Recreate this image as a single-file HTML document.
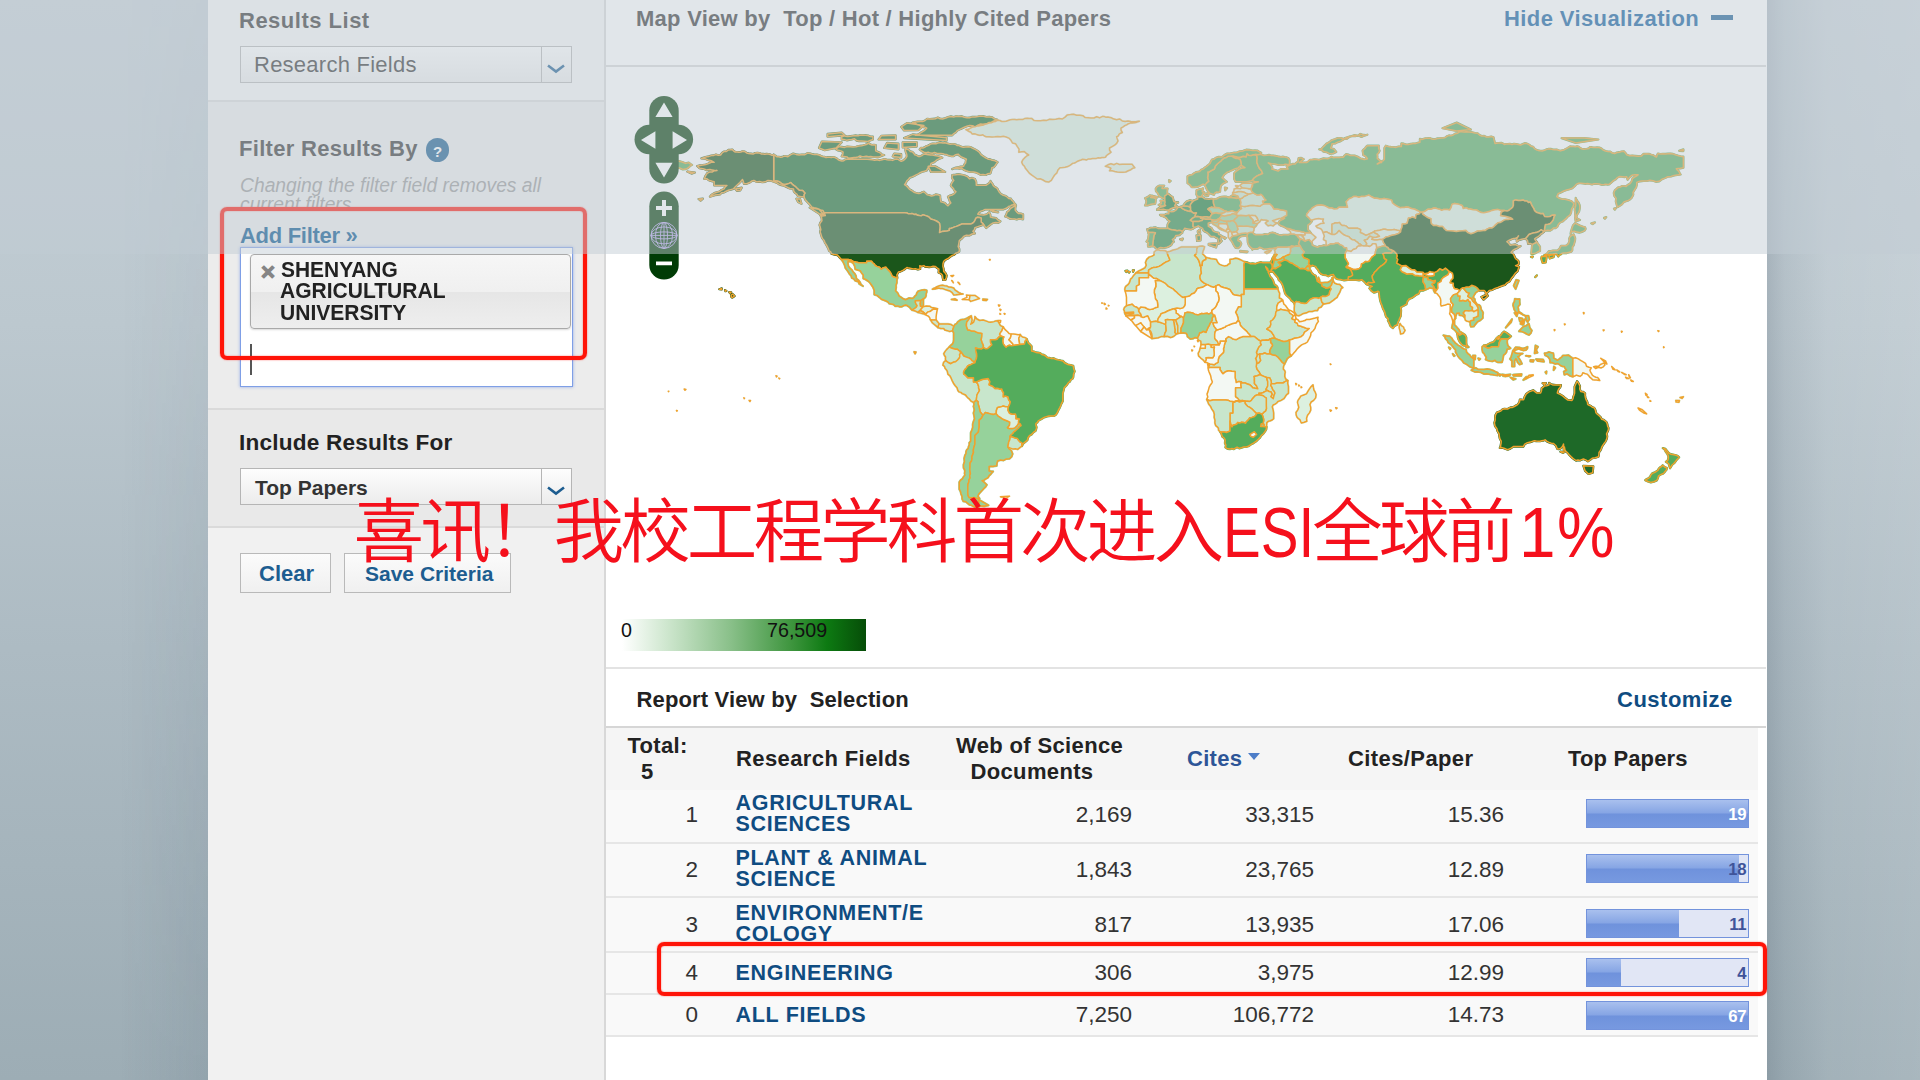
<!DOCTYPE html>
<html lang="zh">
<head>
<meta charset="utf-8">
<title>ESI</title>
<style>
*{box-sizing:border-box;margin:0;padding:0}
html,body{width:1920px;height:1080px;overflow:hidden}
body{position:relative;font-family:"Liberation Sans","Noto Sans CJK SC",sans-serif;color:#222;
 background:linear-gradient(180deg,#c6d0d7 0%,#bcc8cf 30%,#adbbc3 60%,#9dadb5 100%);}
.abs{position:absolute}
.t{position:absolute;white-space:nowrap;line-height:1}
.b{font-weight:bold}
/* side shading */
#sideL{left:120px;top:0;width:88px;height:1080px;background:linear-gradient(90deg,rgba(60,80,100,0) 0%,rgba(60,80,100,.10) 100%);-webkit-mask-image:linear-gradient(180deg,rgba(0,0,0,.15) 0%,rgba(0,0,0,.4) 35%,#000 100%);mask-image:linear-gradient(180deg,rgba(0,0,0,.15) 0%,rgba(0,0,0,.4) 35%,#000 100%)}
#sideR{left:1766px;top:0;width:154px;height:1080px;background:linear-gradient(90deg,rgba(70,85,100,.20) 0%,rgba(70,85,100,.08) 12%,rgba(255,255,255,.06) 40%,rgba(255,255,255,.12) 100%)}
/* panels */
#left{left:208px;top:0;width:398px;height:1080px;background:#f1f1f1;border-right:2px solid #d8d8d8}
#leftTop{left:208px;top:0;width:396px;height:527px;background:#ececec}
.hr{position:absolute;height:2px;background:#dadada}
#main{left:606px;top:0;width:1160.5px;height:1080px;background:#fff}
/* selects */
.sel{position:absolute;height:37px;border:1px solid #b5b5b5;background:linear-gradient(180deg,#fdfdfd,#ececec)}
.sel i{position:absolute;right:29px;top:0;width:1px;height:35px;background:#b5b5b5}
.sel svg{position:absolute;right:5px;top:17px}
.btn{position:absolute;height:40px;border:1px solid #b9b9b9;background:linear-gradient(180deg,#fbfbfb,#f0f0f0)}
/* table */
.row{position:absolute;left:606px;width:1152px;background:#f9f9f9;border-bottom:2px solid #e6e6e6}
.bar{position:absolute;left:1586px;width:163px;height:29px;border:1.5px solid #7393dc;background:#e1e6f5;overflow:hidden}
.bar b{position:absolute;left:0;top:0;height:100%;background:linear-gradient(180deg,#a9c0ee 0%,#86a5e4 48%,#6f92dc 52%,#7799e0 100%)}
.bar span{position:absolute;right:2px;top:6.5px;font-size:16.8px;line-height:1;color:#3f549a;letter-spacing:-.5px;font-weight:bold}
.bar span.w{color:#fff;font-weight:bold}
.num{position:absolute;font-size:22.5px;line-height:1;color:#333;text-align:right;white-space:nowrap}
.fld{position:absolute;font-size:21.5px;line-height:21px;font-weight:bold;color:#0f4c81;left:735.5px;white-space:nowrap;letter-spacing:.7px}
.th{position:absolute;font-size:22px;line-height:26px;font-weight:bold;color:#222;white-space:nowrap}
#veil{left:0;top:0;width:1920px;height:254px;background:rgba(194,203,212,.485)}
.red{position:absolute;border:4.2px solid #ff1408;border-radius:7px;box-shadow:0 0 1.5px rgba(255,30,20,.8),inset 0 0 1.5px rgba(255,30,20,.8)}
.hl{position:absolute;white-space:nowrap;line-height:80px;top:493px;font-size:70.7px;color:#f5101c;font-weight:350;letter-spacing:-4.03px}
.hl.lat{letter-spacing:0;font-weight:400;transform-origin:0 50%}
</style>
</head>
<body>
<div id="sideL" class="abs"></div>
<div id="sideR" class="abs"></div>

<!-- LEFT PANEL -->
<div id="left" class="abs"></div>
<div id="leftTop" class="abs"></div>
<div class="abs" style="left:208px;top:0;width:396px;height:100px;background:#f6f6f6"></div>
<div class="abs" style="left:208px;top:410px;width:396px;height:116px;background:#e9e9e9"></div>
<div class="hr" style="left:208px;width:396px;top:100px"></div>
<div class="hr" style="left:208px;width:396px;top:408px"></div>
<div class="hr" style="left:208px;width:396px;top:526px"></div>

<div class="t b" style="left:239px;top:9.5px;font-size:22px;letter-spacing:.5px;color:#333">Results List</div>
<div class="sel" style="left:240px;top:46px;width:332px"><i></i>
 <svg width="20" height="10" viewBox="0 0 20 10"><path d="M2 1.5 L10 7.5 L18 1.5" fill="none" stroke="#1d5d90" stroke-width="2.6"/></svg></div>
<div class="t" style="left:254px;top:54px;font-size:22px;letter-spacing:.25px;color:#333">Research Fields</div>

<div class="t b" style="left:239px;top:138px;font-size:22px;letter-spacing:.3px;color:#333">Filter Results By</div>
<div class="abs" style="left:425.6px;top:138.4px;width:23.6px;height:23.6px;border-radius:50%;background:#195c8e"></div>
<div class="t b" style="left:433px;top:143.5px;font-size:15px;color:#fff">?</div>
<div class="t" style="left:240px;top:176px;font-size:19.3px;font-style:italic;color:#999">Changing the filter field removes all</div>
<div class="t" style="left:240px;top:194.5px;font-size:19.3px;font-style:italic;color:#999">current filters.</div>
<div class="t b" style="left:240px;top:225px;font-size:22px;letter-spacing:-.3px;color:#00528c">Add Filter »</div>

<div class="abs" id="fbox" style="left:240px;top:247px;width:333px;height:140px;background:#fff;border:1px solid #7f9fe6;box-shadow:0 0 3px rgba(90,130,230,.6)"></div>
<div class="abs" id="tag" style="left:250px;top:254px;width:321px;height:75px;border:1px solid #a9a9a9;border-radius:4px;background:linear-gradient(180deg,#f6f6f6 0%,#f0f0f0 50%,#e6e6e6 51%,#eeeeee 100%);box-shadow:0 1px 2px rgba(0,0,0,.15)"></div>
<div class="t b" style="left:261px;top:260px;font-size:24px;color:#858585;-webkit-text-stroke:1.1px #858585">×</div>
<div class="t b" style="left:281px;top:258.8px;font-size:22.5px;line-height:21px;color:#222;transform:scaleX(.93);transform-origin:0 50%">SHENYANG</div>
<div class="t b" style="left:280px;top:280.2px;font-size:22.5px;line-height:21px;color:#222;transform:scaleX(.935);transform-origin:0 50%">AGRICULTURAL</div>
<div class="t b" style="left:280px;top:301.8px;font-size:22.5px;line-height:21px;color:#222;transform:scaleX(.935);transform-origin:0 50%">UNIVERSITY</div>
<div class="abs" style="left:250px;top:344px;width:2px;height:31px;background:#555"></div>

<div class="t b" style="left:239px;top:431.5px;font-size:22.6px;letter-spacing:.2px;color:#222">Include Results For</div>
<div class="sel" style="left:240px;top:468px;width:332px"><i></i>
 <svg width="20" height="10" viewBox="0 0 20 10"><path d="M2 1.5 L10 7.5 L18 1.5" fill="none" stroke="#1d5d90" stroke-width="2.6"/></svg></div>
<div class="t b" style="left:255px;top:477px;font-size:21px;color:#333">Top Papers</div>

<div class="btn" style="left:240px;top:553px;width:91px"></div>
<div class="btn" style="left:344px;top:553px;width:167px"></div>
<div class="t b" style="left:259px;top:563px;font-size:22px;color:#1d5d90">Clear</div>
<div class="t b" style="left:365px;top:563px;font-size:21px;color:#1d5d90">Save Criteria</div>

<!-- MAIN -->
<div id="main" class="abs"></div>
<div class="t b" style="left:636px;top:8px;font-size:22px;letter-spacing:.26px;color:#333;white-space:pre">Map View by  Top / Hot / Highly Cited Papers</div>
<div class="t b" style="left:1504px;top:8px;font-size:22px;letter-spacing:.4px;color:#0a5a9c">Hide Visualization</div>
<div class="abs" style="left:1711px;top:15px;width:21.5px;height:5px;background:#1a5f94"></div>
<div class="hr" style="left:606px;width:1160px;top:65px;background:#d9d9d9"></div>

<!--MAP-->
<svg id="map" class="abs" style="left:605px;top:67px" width="1161" height="540" viewBox="605 67 1161 540">
<g stroke-linejoin="round">
<path d="M773.7,154.7l1.7,0.9 1.4,1.2 1.9,0 1.9,0.4 1.9,-0.3 1.7,-0.8 1.8,0.2 1.9,0.4 2.5,-1.8 2.8,-1.3 2.9,0.8 3.1,0.5 2.8,-0.3 2.9,0.1 2.6,-1.6 3,0.5 2.1,0.6 2.1,0.4 2.2,-0.1 2.1,0.5 1.7,0.8 1.7,0.7 1.8,0.3 1.7,0.7 1.8,-0.3 1.9,0 1.8,0.2 1.8,-0.3 1.9,0.5 1.7,0.9 1.4,1.3 1.8,0.8 1.9,0.3 1.9,-0.2 1.6,-1.2 2,-0.3 19.8,0 2.5,0.2 2.5,0.4 2.5,0.4 2.4,-0.4 2.5,0.6 2.5,-0.7 2.5,-0.7 2.5,0.8 1.8,0.1 1.8,0 1.8,0.5 1.7,-0.8 1.9,-0.6 1.9,0.2 1.5,1.2 1.7,0.8 1.9,-0.6 1.5,-1.2 1.3,-1.4 1,-1.6 -0.2,-2.1 -0.8,-1.9 -0.5,-2.1 0.1,-2.1 1.6,1.2 1.8,0.5 1.4,1.5 1.9,0.4 1.4,1.3 1.2,1.6 1.8,0.7 1.6,1 1.9,0 1.7,-0.8 1.5,-1.1 1.9,-0.4 1.8,0.4 1.8,0.3 1.8,0.3 1.8,-0.1 2.5,0.6 2.6,0.5 2.5,0.6 2.3,1.1 -3,0.9 -2.9,1.5 -2.4,2.1 -3,1.2 -0.6,2.1 -1.8,1.2 -1.1,1.8 -0.8,1.9 -2.2,0.7 -2.2,0.6 -2.2,0.8 -1.9,1.2 -2.1,1.1 -2,1.1 -2.2,0.9 -2.2,0.7 -1.2,1.8 -1.7,1.4 -0.9,2 -1.3,1.8 1.8,1.3 1.5,1.5 1.4,1.7 1.9,1.2 1.4,0.9 1.3,1.1 1.7,0.5 1.7,0.4 1.7,0.4 1.7,-0.5 1.5,-0.9 1.7,-0.5 1.6,1.5 1.6,1.6 2.2,0.4 2.1,0.8 2.3,-0.5 2,-1.1 2.2,0.4 2.2,0.8 0.2,3.1 0.6,3.1 2,0.6 2,0.6 1.4,1.5 1.7,1.3 1.4,-1.5 1.4,-1.3 -0.9,-1.5 -0.6,-1.6 -0.6,-1.6 -0.7,-1.6 2.1,-1.2 2.3,-0.6 2,-1.3 1.5,-1.9 -1.7,-1.3 -0.7,-1.9 -1.6,-1.3 -1.1,-1.7 1.2,-2.7 1.7,-2.4 -1.7,-2.4 0.2,-3 3.3,-0.3 3.2,-0.5 3.1,0.6 3.2,0.8 2.6,1.1 1.8,2.2 2.8,-1 2.7,1.1 1.3,2.9 0.1,3.3 10,0 2.5,-1.7 1.7,-2.5 0.8,1.5 1.1,1.3 0.7,1.6 1.3,1.2 1.5,0.9 1.4,1.1 0.8,1.6 0.9,1.5 1.8,2.2 2.5,1.4 2,0.5 1.8,1.2 1.6,1.4 2.2,0.3 0.9,1.6 1.4,1.2 0.9,1.6 1.3,1.3 -1.6,0.3 -1.7,0.3 -1.5,0.9 -1.7,0.4 -2.6,2 -3,1.1 -18.2,0 -2,1 -2.2,0.7 -1.9,1.2 -1.2,1.9 2.9,0.5 3,0.3 3.1,-0.7 2.3,-2 1.2,2.2 0.2,2.6 2.7,0.6 2.8,0.3 1.9,2.1 2.5,1.2 -2.1,1.5 -2.6,-0.3 -2.5,0.4 -2.1,1.2 -2.5,1.9 -2.3,2 -1.4,-1.6 -1.2,-1.7 -1.1,-1.4 -1.4,-1.2 0,-3.9 -2,-0.8 -2,-0.1 -1.5,1.1 -0.6,1.7 -0.9,1.6 -1.3,1.3 -2.2,1.1 -9.1,0 -2.5,1.2 -2.6,1.1 -1.8,0.5 -1.7,0.7 -1.7,0.7 -1.9,0.3 0,1.7 -2.4,0.7 -2.6,0.3 -2.5,0.3 -2.4,1 0.3,-2.9 0.2,-3.2 -0.5,-3.2 -1.5,-1.3 -1.6,-1 -2.6,-1.1 -3,-0.9 -2.2,-2.2 -2.9,-1.2 -2.9,-0.8 -1.6,1 -1.8,-0.2 -1.9,-0.3 -1.6,-1.1 -1.9,0.2 -1.7,-0.8 -1.9,0.1 -1.9,0.1 -1.7,-0.9 -1.9,-0.1 -80.7,0 -1.2,-2.3 -2.5,-0.5 -2.1,-1 -2,-0.8 -2.3,-0.4 -2.1,-0.6 -2.1,-2.6 -2.3,-2.3 -2.3,-2.5 -1.3,-3.1 -0.1,-1.9 1,-1.7 -2.3,-2.5 -3.4,-0.3 -2.1,-2 -2,-2 -2.4,-1.6 -2,-2.1 -1.7,0.8 -1.7,0.6 -1.8,0.5 -1.9,0.1 -2.2,-1.2 -2,-1.6 -2.8,-0.7 -2.9,-0.1zM990.5,173.3l-2.5,0.5 -2.3,1.1 -2.6,-0.4 -2.5,0.3 -2.3,-1.3 -2.4,-1 -2.6,-0.6 -2.6,0 -2.4,-0.4 -2.3,-0.8 -2.3,-1 -1.9,-1.6 -2.4,0.7 -2.4,-0.7 -2.5,0.2 -2.3,0.8 2.7,-1.2 2.9,-0.6 2.9,-0.6 2.9,-0.4 0.7,-1.9 1.3,-1.4 0.2,-1.9 0.6,-1.9 -2.7,-1.2 -2.8,-1.3 -1.4,-1 -1.1,-1.4 -1.7,0.3 -1.6,0.4 -1.6,1.2 -2,0 -1.8,-0.4 -1.8,-0.5 -1.7,-0.8 -1.8,-0.2 -1.7,-0.5 -1.8,-0.2 -2.1,-0.1 -2.1,-0.3 -2.2,-0.7 -2.1,0.8 -2.2,-0.2 -2,-0.8 -2.1,0.5 -2.2,-0.6 -2.3,-1.2 -1.9,-1.6 1.2,-1.6 2,0.3 1.6,-0.8 1.4,-1 1.7,-0.5 1.6,-0.7 1.4,-1.1 1.8,-0.3 1.8,-0.1 1.8,0.2 1.7,-0.8 1.8,-0.3 1.8,0 1.7,0.4 1.8,-0.4 1.8,0.5 1.8,0.5 1.8,0.5 1.8,-0.1 1.9,-0.1 1.8,0.5 1.5,1.1 1.9,0 1.7,1 2.4,0.6 2.5,-0.3 2.5,-0.1 2.5,0.3 2.1,1.2 2.3,1.1 2.1,1.3 2,1.5 1.7,2.5 2.5,1.7 1.6,1.1 1.7,0.9 1.8,0.8 1.9,0.2 1.8,0.9 1.9,0.1 1.8,0.8 1.7,0.9 -1.2,1.6 -1.1,1.7 -1.4,1.7 -2,0.6 -0.6,2.8zM841.7,156.4l1.9,0 1.8,0.3 1.8,0.4 1.5,1.2 1.8,-0.3 1.8,-0.3 1.8,-0.2 1.8,0 2.1,-0.5 2,-1 2.1,0.8 2.3,-0.2 2.1,-0.3 2.1,0.4 2.2,-0.2 2.1,0.5 2.9,0 3,0.1 2.6,-1.2 2.8,-0.9 -2.4,-0.4 -1.7,-1.9 -2.3,-0.8 -2.1,-1.1 0,-5.7 -1.9,-0.3 -1.9,0.2 -1.8,-0.7 -1.5,-1.2 -1.6,1.1 -1.8,0.6 -1.8,0.5 -1.8,0.4 -2.9,0.4 -2.7,0.7 -2.9,0.3 -2.9,-0.3 -2.9,-0.3 -2.7,0.9 -2.9,-0.5 -2.8,-0.3 -1.6,1.2 -1.2,1.6 1.7,0.9 1.9,0.3 1.8,0.5 1.6,1.1 -0.3,2.2zM819,148l5.7,2.2 11.4,-2.2 5.6,-5.7 -19.8,-0.8zM915.4,135.3l36.8,0 1.6,-1.7 2,-1.2 1.4,-1.8 2.1,-1 2.5,-1.2 2.5,-1.2 2.6,-1 2.7,-0.6 3.1,0.2 2.7,1.3 2.4,-1.9 2.8,-1.2 2.2,0.3 2.2,-0.4 2.3,-0.2 1.9,-1.3 2.3,-0.2 1.9,-1.1 2,-0.9 2.2,-0.4 -2.9,-0.7 -2.4,-1.8 -2.9,-0.4 -3,0.1 -2.8,-0.8 -2.9,-0.2 -2.9,0.5 -2.9,0.4 -2.7,0 -2.6,0.8 -2.7,0.1 -2.6,-0.5 -2.6,-1.1 -2.7,0.3 -2.8,-0.2 -2.6,0.8 -2.7,-0.7 -2.7,0.6 -2.5,1 -2.6,0.9 -2.8,-0.1 -2.5,-1.3 -2.6,1.2 -2.8,0.2 -2.6,0.2 -2.7,-0.3 -2,1.7 -2.5,1.1 -2.5,0 -2.5,0.1 -2.6,0.3 -2.4,0.6 1.9,0.1 1.7,1.1 1.6,1 1.9,0.5 1.6,1 1.8,0.8 1.9,0.1 1.7,1 -1.2,1.3 -1.3,1.2 -1.6,0.9 -1.5,0.9 -2.6,1.8zM904.1,138.1l42.5,2.5 0,-2.8 -34,-3.4zM904.1,130.5l14.1,-0.3 5.7,-4.8 -17,-2.3 -5.7,3.7zM841.7,139.5l2.6,0.1 2.4,0.7 2.5,-0.5 2.5,-0.4 2.8,-0.7 2.1,1.9 2.4,0.5 2.6,-0.2 2.9,0.3 2.9,0.4 2.7,-1.1 2.8,-1 0,-2.8 -2.6,-0.1 -2.3,-1.1 -2.5,-0.3 -2.5,0.1 -2.5,-0.2 -2.4,0.7 -2.5,-0.4 -2.5,0.4 -2.9,0.4 -2.8,0.4 -2.8,-0.7 -2.9,0.8zM878.6,139.5l17,0 0,-4.2 -14.2,0.5zM884.2,148l14.2,1.4 0,-5.7 -11.3,-0.8zM902.7,147.4l14.1,-0.8 0,-4.3 -14.1,0zM827.6,136.7l17,-1.4 -2.9,-2.8 -14.1,1.4zM892.7,156.4l8.5,1.1 0,-3.3 -7,-0.6zM935.2,166.3l10,5.6 -14.2,0 -2.8,-5.6zM1005.2,216.5l1.2,-2.1 0.7,-2.3 2,-1.4 1.2,-2.1 2.8,-1.7 2.9,-1.4 -0.7,2.2 -0.1,2.3 1.4,1.9 1.8,1.6 2.4,0 2.3,0.7 0,5.1 -2.1,-0.3 -2.1,-0.3 -2.1,0.7 -2.2,-0.4 -2.5,-0.1 -2.4,-0.3 -2.1,-1.3zM809.7,207.7l9.3,1.5 4.6,5.3 -4.6,-0.8zM990.5,210.3l7.7,2 -4.9,-0.6zM796.4,198.7l3.7,0.3 1.4,4.8 -3.4,-1.7z" fill="#1b6e2b" stroke="#1b6e2b" stroke-width="2.2"/>
<path d="M773.7,154.7l0,26.3 2.9,0.1 2.8,0.7 2,1.6 2.2,1.2 1.9,-0.1 1.8,-0.5 1.7,-0.6 1.7,-0.8 2,2.1 2.4,1.6 2,2 2.1,2 3.4,0.3 2.3,2.5 -1,1.7 0.1,1.9 -3.1,0 -3.1,-0.8 -1,-1.9 -1.8,-1.2 -1.3,-1.8 -0.2,-2.1 -1.8,-0.2 -1.9,-0.2 -1.7,-0.8 -1.6,-0.8 -2.5,-1.2 -2.6,-0.6 -2.6,-1 -2.3,-1.5 -2.7,-0.9 -2.8,-1 -3.1,-0.3 -2.7,1.4 -2.9,0.4 -2.8,-0.6 -3,0.3 -2.6,-1.5 -2.6,0.9 -2.1,1.5 -2.5,1 -2.8,0 -0.5,-2.2 -0.9,-2.1 -1.3,1.5 -1.3,1.5 -1.5,1.4 -1.5,1.3 -1.8,1.8 -1.8,1.9 -2.5,0.7 -2.4,0.7 -2.2,0.9 -2.1,1.2 -2.5,0.4 -1.7,1.7 -2.6,0.3 -2.5,0.3 -2.4,0.9 -2.5,0.7 1.9,-2.1 2.4,-1.5 2.6,-0.9 2.6,-0.6 2.2,-1.6 2.5,-1.1 1.1,-2 1.7,-1.4 -12.7,0 0,-3.7 -2.5,-0.7 -2.5,-0.6 -2.2,-1.7 -2.7,0.2 1.1,-3 1.7,-2.7 2.4,-1.2 2.6,0 2.3,-1.4 2.6,-0.2 -1.8,0.3 -1.7,-0.5 -1.8,-0.4 -1.7,-0.3 -1.9,0.2 -1.8,0.3 -1.6,-0.9 -1.8,-0.4 -3.3,-0.6 -2.4,-2.2 2.8,-0.6 2.9,-0.4 2.9,-0.5 2.7,-1 2.7,-1.3 3,0.1 -3,-1.6 -3.3,-0.7 -3.1,-1.4 -3.4,-0.2 2.5,-0.8 2.5,-0.8 2.5,-0.4 2.5,-0.8 2.3,-0.2 2.2,-0.9 2.3,0.8 2.4,-0.3 1.4,-2 1.9,-1.4 2.5,-0.1 2,-1.6 1.9,-0.1 2,-0.2 1.4,1.4 1.6,1 1.8,0 1.9,0.2 1.8,-0.2 1.7,-0.7 2.3,0.3 1.8,1.3 2.1,0.5 2.2,0.3 2.2,0.4 2.1,-1 2.2,-0.3 2.1,0.2 1.7,0.9 1.8,0 1.8,0.3 1.8,-0.3 1.8,0.2 1.7,0.3 1.8,0.8zM735.4,188.9l6.3,-1.2 -1.4,2.6 -3.4,0.5zM687.3,171.6l7.6,0.9 -3.4,1.1zM698.6,199l4.3,-0.3 -2.3,2zM719.3,289.2l2.5,-0.8 -0.2,1.1zM725,290.1l1.4,0.8 -0.9,0.3zM729.2,292.1l2,0.2 -1.1,0.9zM731.2,295.2l1.4,-1.2 2,2 -2.3,1.7 -1.1,-1.1z" fill="#1b561b" stroke="#1b561b" stroke-width="2.2"/>
<path d="M824.2,212.8l80.7,0 1.9,0.1 1.7,0.9 1.9,-0.1 1.9,-0.1 1.7,0.8 1.9,-0.2 1.6,1.1 1.9,0.3 1.8,0.2 1.6,-1 2.9,0.8 2.9,1.2 2.2,2.2 3,0.9 2.6,1.1 1.6,1 1.5,1.3 0.5,3.2 -0.2,3.2 -0.3,2.9 2.4,-1 2.5,-0.3 2.6,-0.3 2.4,-0.7 0,-1.7 1.9,-0.3 1.7,-0.7 1.7,-0.7 1.8,-0.5 2.6,-1.1 2.5,-1.2 9.1,0 2.2,-1.1 1.3,-1.3 0.9,-1.6 0.6,-1.7 1.5,-1.1 2,0.1 2,0.8 0,3.9 1.4,1.2 1.1,1.4 -2.2,0.7 -2.2,0.7 -2.2,0.8 -2.2,0.9 -0.5,1.9 -1.5,1.5 2,2.2 -2.9,0.6 -2.6,1.5 -3,-0.3 -2.8,1.3 -1.9,2.2 -2.4,1.8 -0.5,3.1 -0.6,3.1 1.1,2.2 0,2.6 -1.7,1.1 -1.9,0.7 -1.5,1.5 -2,0.6 -2.1,1.5 -2,1.6 -2.4,1.1 -2,1.7 -0.7,2.5 -0.1,2.6 0.6,2.4 0.2,2.6 1.7,1.7 1.2,2.3 -0.4,2.3 -0.8,2.2 -2.2,0 -0.5,-2.3 -0.2,-2.3 -1.7,-1.7 -2.2,-1 0.3,-3.4 -1.9,-1.3 -1.8,-1.5 -2.1,-0.2 -2.1,0.8 -1.8,0.1 -1.9,-0.3 -1.9,0 -1.5,-1.2 -2.1,0.7 -2.1,-0.5 0.5,3.1 -2.4,0.5 -2.4,-0.7 -2.2,0.3 -2.1,-0.5 -2.1,-0.4 -2.1,-0.6 -1.9,1.5 -2.1,1.3 -2.1,1.1 -2.4,0.6 -1.5,2.8 0.4,3.2 -2.7,-0.7 -2.4,-1 -1.1,-2.6 -1.5,-2.3 -2,-2 -1.7,-2.2 -2.5,0.5 -2,1.5 -1.9,-2 -2.6,-0.8 -1.7,-0.9 -1,-1.7 -1.6,-1 -1.1,-1.5 -4.8,0 0,1.4 -8,0 -2.7,-0.6 -2.8,-0.7 -2.5,-1.4 -2.7,-0.6 -6.6,0 -1.9,-2.2 -2,-2.1 -3,-0.5 -3,-0.9 -0.8,-1.8 -1.6,-1.1 -0.7,-1.9 -0.8,-1.7 -1.5,-2.8 -1.2,-1.7 -0.6,-2 -1.3,-1.6 -1.1,-1.7 -0.6,-1.9 -0.6,-1.9 -0.6,-1.9 0.7,-2 -0.5,-2.4 -0.8,-2.3 0.8,-2.3 1.6,-2 -0.4,-3.3 -1.6,-2.9 2.5,1.5 2.9,-0.4z" fill="#1b561b" stroke="#1b561b" stroke-width="2.2"/>
<path d="M841.4,259.4l6.6,0 2.7,0.6 2.5,1.4 2.8,0.7 2.7,0.6 8,0 0,-1.4 4.8,0 1.1,1.5 1.6,1 1,1.7 1.7,0.9 2.6,0.8 1.9,2 2,-1.5 2.5,-0.5 1.7,2.2 2,2 1.5,2.3 1.1,2.6 2.4,1 2.7,0.7 -0.5,2.3 0,2.5 -0.8,2.3 0.1,2.5 -0.6,3.2 2.3,2.4 1.1,2.7 2.3,1.5 2,1.4 2.3,0.9 1.7,-0.7 1.7,-0.9 1.8,0.2 1.9,0.2 1.4,-1 0.9,-1.4 1.5,-1.1 0.4,-1.8 1.4,-2 2.1,-0.6 2.1,-0.6 2.2,-0.2 2.1,0.6 -0.1,1.8 -0.6,1.7 0,1.8 -0.7,1.7 -2,1.4 -2.5,1.7 -2.7,0 -2.7,0.3 0,1.7 0.8,1.6 0.9,1.5 -0.8,1.5 -1.4,1.2 -1.4,0.9 -1.5,0.9 -1.2,-1.3 -1,-1.5 -1.5,-0.9 -1.4,-1.1 -1.8,-0.2 -1.8,0.7 -1.6,0.9 -1.9,0 -2.2,-0.8 -2.3,0.3 -1.7,-1.7 -2.3,-0.6 -2.1,-0.3 -1.3,-1.7 -1.8,-0.9 -1.9,-0.8 -2.7,-1 -2.1,-1.9 -2.3,-1.9 -2.8,-0.8 0,-4.2 -1.1,-2.9 -1.7,-2.5 -1.5,-2.2 -2,-1.8 -2.3,-1.5 -2.4,-1 0,-3.6 -1.7,-2 -1.4,-2.2 -2.4,-0.7 -2.5,-0.8 -0.6,-3.3 -1.6,-2.9 -2.4,-1.4 -2.7,-0.3 -0.1,2.6 0.6,2.5 1.5,1.8 1.7,1.5 1.2,2 1.6,1.7 1.4,2.4 0.4,2.8 2.2,1.7 1.6,2.2 0.9,2.2 2,1.4 -2.3,-1.4 -1.6,-1 -0.6,-1.9 -1.8,-0.5 -1.7,-0.8 -1.2,-1.8 -2,-0.8 -0.6,-2.1 -1.5,-1.5 -1.1,-1.9 -1.2,-1.8 -1.9,-2.5 -0.9,-3.1 -1.4,-3z" fill="#96d29b" stroke="#96d29b" stroke-width="2.2"/>
<path d="M912,310.1l1.5,-0.9 1.4,-0.9 1.4,-1.2 0.8,-1.5 -0.9,-1.5 -0.8,-1.6 0,-1.7 5.4,0 -0.8,2.6 0.5,2.8 2.6,0.5 -1.5,1.8 -1.4,1.9 -2.2,2 -2.9,-1.5z" fill="#c8e6cc" stroke="#c8e6cc" stroke-width="2.2"/>
<path d="M920.8,300.5l2.5,-1.7 0,7.1 -2.8,0.3z" fill="#96d29b" stroke="#96d29b" stroke-width="2.2"/>
<path d="M920.2,310.4l1.4,-1.9 1.5,-1.8 3.2,-0.6 3.3,0.1 1.7,1.2 2.1,0.4 2.1,0.4 2,0.5 -2.2,0.6 -2.3,0 -2.4,1.9 -3,0.9 -1.7,2.2 -1.4,-1.1 -1.9,-1.8z" fill="#dcf0df" stroke="#dcf0df" stroke-width="2.2"/>
<path d="M918,312.4l2.2,-2 4.3,2.8 -0.3,0.9z" fill="#c8e6cc" stroke="#c8e6cc" stroke-width="2.2"/>
<path d="M925.9,314.3l1.7,-2.2 3,-0.9 2.4,-1.9 2.3,0 2.2,-0.6 -0.6,2.8 -0.5,2.8 -0.3,2.8 0,2.9 -2.9,0.6 -2.8,-0.9 -0.7,-1.9 -1.2,-1.6 -1.9,-0.8 -1.8,-0.8z" fill="#f3f8f3" stroke="#f3f8f3" stroke-width="2.2"/>
<path d="M930.4,319.7l5.7,0.3 3.1,3.9 -1.1,3.7 -5.7,-4.8z" fill="#c8e6cc" stroke="#c8e6cc" stroke-width="2.2"/>
<path d="M938.1,327.6l0.2,-2 0.9,-1.7 8.8,0 3.2,0.7 2.7,1.9 -0.7,2.1 -0.7,2.1 -3,0.7 -2.9,-1 -1.8,-0.4 -1.1,-1.6 -2.9,0.1z" fill="#c8e6cc" stroke="#c8e6cc" stroke-width="2.2"/>
<path d="M932.4,289.2l1.5,-0.9 1.6,-0.6 1.5,-1 1.6,-0.6 2,-0.5 2,-0.4 1.9,0.6 2.1,0.1 2.1,1.2 2.5,0.2 2.4,0.7 1.5,2.1 1.9,1.2 1.8,1.3 2,0.9 2.2,0.5 -2.3,0.2 -2.4,0.2 -2.3,0.4 -2.3,0.1 -1.5,-2.3 -2.1,-1.6 -2.7,-0.8 -2.5,-0.8 -2.6,-1 -1.8,0.1 -1.8,-0.5 -1.7,0.4 -1.8,0.6z" fill="#c8e6cc" stroke="#c8e6cc" stroke-width="2.2"/>
<path d="M962.2,299.4l7.1,0.3 0.8,-4.3 -3.7,-0.5 0.6,2.5z" fill="#f3f8f3" stroke="#f3f8f3" stroke-width="2.2"/>
<path d="M970.1,295.4l-0.8,4.3 1.4,1.7 8.8,-2.9 -4.6,-3.1z" fill="#dcf0df" stroke="#dcf0df" stroke-width="2.2"/>
<path d="M951.4,299.4l5.7,0.8 -2,-1.4z" fill="#c8e6cc" stroke="#c8e6cc" stroke-width="2.2"/>
<path d="M982.9,299.1l4.5,0.3 -1.1,1.1 -3.4,-0.3z" fill="#c8e6cc" stroke="#c8e6cc" stroke-width="2.2"/>
<path d="M950.8,275.7l2.9,-0.3 -1.5,1.2zM951.7,280.5l1.7,2.3 -0.9,-1.7zM957.9,282.2l2,2.2 -0.9,-1.6z" fill="#f3f8f3" stroke="#f3f8f3" stroke-width="2.2"/>
<path d="M998.4,305l1.5,0.3 -0.9,0.9zM999.9,309.3l1.1,0.5 -0.6,0.6zM999.9,313.5l0.8,0.6 -0.6,0.2zM997.9,320.5l2.8,0 -0.3,2 -2.5,0zM1004.1,313.5l0.9,0.3 -0.3,0.5z" fill="#f3f8f3" stroke="#f3f8f3" stroke-width="2.2"/>
<path d="M953.9,326.5l1,-1.9 1.8,-0.9 1,-1.7 1.6,-1.2 1.6,-1 1.9,-0.3 1.9,-0.2 1.7,-0.7 2.4,-1.4 2.4,-1.2 -1.9,2.6 -1.1,1.6 -1.3,1.5 -0.4,1.9 -0.1,2 0.5,2.2 0.9,2.1 1.8,0.2 1.7,0.8 1.8,0 1.8,0.4 1.7,0.9 1.7,0.5 1.9,0.4 1.8,0.4 -0.2,3.1 -0.6,3.1 1,2.9 1.2,2.8 0,2.2 -1.8,1.3 -2.1,-0.2 -2,-0.3 -2,-0.5 0.4,3 0.7,2.9 0.1,2.3 -0.3,2.4 -1,2.1 -0.5,2.2 -1.3,-1.2 -1.7,-0.9 -1.1,-1.6 -1.5,-1 -2.8,-1 -2.8,-1.1 -1.6,-2.5 -1.9,-2.2 -1.5,-1 -1.5,-1.1 -1.8,0 -1.7,-0.5 -2.3,-0.7 -2,-1.2 1.5,-1.5 1.7,-1.4 0.9,-2 0.2,-2.2 0,-7 -1.2,-2 0.7,-2.1z" fill="#96d29b" stroke="#96d29b" stroke-width="2.2"/>
<path d="M971.2,316l0.5,2 0.4,2 -0.5,2.2 -0.9,2 1.6,-0.9 1.4,-1.2 0.6,-1.8 0.6,-1.7 0,-2 2,2.4 2.8,1.5 3.4,-0.5 3.2,1.1 2,0.8 2.2,0.3 1.8,-0.1 1.8,-0.5 1.7,-0.7 1.8,-0.1 1.4,2.4 1.4,2.4 2.9,1.4 -0.8,1.9 -0.6,1.9 -1.2,1.6 -1.1,1.7 1.7,2.2 -1.8,0.3 -1.3,1.2 -1.1,1.4 -1.8,0.5 -4.8,0 0.1,2.7 1.3,2.4 -2.1,1.8 -2.1,1.9 -2.3,0.2 -2,-1.1 0,-2.2 -1.2,-2.8 -1,-2.9 0.6,-3.1 0.2,-3.1 -1.8,-0.4 -1.9,-0.4 -1.7,-0.5 -1.7,-0.9 -1.8,-0.4 -1.8,0 -1.7,-0.8 -1.8,-0.2 -0.9,-2.1 -0.5,-2.2 0.1,-2 0.4,-1.9 1.3,-1.5 1.1,-1.6z" fill="#c8e6cc" stroke="#c8e6cc" stroke-width="2.2"/>
<path d="M1003.3,327l1.8,2.6 2.4,2.2 1.5,1.7 2.2,0.6 -0.3,2.2 -0.7,1.9 -1.3,1.5 1.3,1.3 1.3,1.4 1.3,1.4 0.4,1.8 -1.9,0.1 -1.9,-0.4 -1.9,0.7 -1.4,1.3 -1.5,-1.6 -1.3,-1.8 -0.4,-1.7 -0.1,-1.8 0.4,-1.8 0.6,-1.7 -2.5,-0.6 -1.7,-2.2 1.1,-1.7 1.2,-1.6 0.6,-1.9z" fill="#f3f8f3" stroke="#f3f8f3" stroke-width="2.2"/>
<path d="M1011.2,334.1l2.3,-0.2 2.2,0.3 2.3,0.6 2.3,-0.2 -0.7,1.9 -0.8,1.8 0.5,3.1 0.4,3.1 -3.3,0.4 -3.2,0.7 -0.4,-1.8 -1.3,-1.4 -1.3,-1.4 -1.3,-1.3 1.3,-1.5 0.7,-1.9z" fill="#f3f8f3" stroke="#f3f8f3" stroke-width="2.2"/>
<path d="M1020.3,334.6l1,1.4 1.3,1.1 1.7,0.3 1.6,0.6 0.9,1.2 -1.7,2.1 -0.6,2.6 -2.4,0.3 -2.4,0.3 -0.4,-3.1 -0.5,-3.1 0.8,-1.8z" fill="#dcf0df" stroke="#dcf0df" stroke-width="2.2"/>
<path d="M949.4,346.8l2,1.2 2.3,0.7 1.7,0.5 1.8,0 1.5,1.1 1.5,1 0.5,1.8 -1.1,1.5 0.2,1.8 -0.5,1.7 -1.7,1.9 -2,1.7 -2.5,0.6 -2.3,1.4 -2.7,-1.2 -2.4,-1.9 -0.2,-1.8 0.1,-1.8 -1.1,-1.5 -0.8,-1.7 1.3,-2.2 1.6,-2 1.4,-1.4zM914,351.8l2,0.3 -0.9,1.7z" fill="#c8e6cc" stroke="#c8e6cc" stroke-width="2.2"/>
<path d="M945.7,360.6l2.4,1.9 2.7,1.2 2.3,-1.4 2.5,-0.6 2,-1.7 1.7,-1.9 0.5,-1.7 -0.2,-1.8 1.1,-1.5 -0.5,-1.8 1.9,2.2 1.6,2.5 2.8,1.1 2.8,1 1.5,1 1.1,1.6 1.7,0.9 1.3,1.2 -2.4,0.8 -2.2,1.2 -2.4,1 -1.5,2.1 -1.7,1.9 -1.1,2.3 0.1,2 1.7,1.1 1.2,1.3 1.2,1.3 5.7,0 0,4.2 2.8,0 1.5,2 0.8,2.2 0,2 0.9,1.7 -0.6,1.8 -1.1,1.6 -0.8,1.7 -0.3,1.8 -0.2,1.7 -0.2,1.9 -1.4,0.9 -1.1,1.3 -2.6,-1.4 -1.9,-2.3 -1.4,-1.1 -1.2,-1.3 -1.1,-1.5 -1.7,-0.8 -1.6,-0.6 -1.4,-1.2 -1.8,-0.5 -1.2,-1.4 -0.8,-2.8 -2,-2.2 -1.6,-2.3 -1.3,-2.6 -1,-2.4 -1.2,-2.3 -2.1,-1.8 -0.5,-2.8 -1,-1.6 -1.3,-1.4 -0.6,-2 -1.6,-1.2 0.8,-2.8z" fill="#c8e6cc" stroke="#c8e6cc" stroke-width="2.2"/>
<path d="M976.3,382l2.9,-1.3 2.9,-1.2 3,-0.5 3.1,-0.4 1.7,3 -0.8,3.2 1.6,0.7 1.7,0.6 1.3,1.1 1.3,1.3 1.7,-0.3 1.7,0.4 1.7,0.6 1.7,-0.1 0.5,1.9 1.2,1.7 -0.1,2 -0.1,2 2.4,-0.6 2.4,0.9 0.5,2.7 1.7,2.1 -0.7,2.6 -1.2,2.4 -2.8,-0.1 -2.7,-0.6 -2.6,1 -2.7,0.3 -1.2,3 -0.2,3.2 -2.8,0.9 -2.9,-0.6 -2.5,-0.7 -2.6,-0.7 -1.2,1.4 -1.3,1.4 -1.4,-1.8 -1.4,-1.7 -0.4,-2.2 -0.5,-2.2 -0.6,-1.8 -0.6,-1.8 0,-2.2 -1.7,-1.2 0.2,-1.9 0.2,-1.7 0.3,-1.8 0.8,-1.7 1.1,-1.6 0.6,-1.8 -0.9,-1.7 0,-2 -0.8,-2.2z" fill="#c8e6cc" stroke="#c8e6cc" stroke-width="2.2"/>
<path d="M973.8,402.6l1.1,-1.3 1.4,-0.9 1.7,1.2 0,2.2 0.6,1.8 0.6,1.8 0.5,2.2 0.4,2.2 1.4,1.7 1.4,1.8 -1.4,2.8 -2.3,2 0,7 -0.5,2.5 -0.3,2.4 -1.8,1.8 -1.7,1.8 0,8.5 -0.6,2 -0.6,2.1 -0.4,2.1 0.2,2.2 -0.8,2.1 -0.8,2 0.1,2.2 -0.5,2.2 -1.3,1.8 -0.2,2.3 0,2.2 -0.2,2.1 0.3,2.1 0.3,2.2 -0.7,2 0.4,2.2 -1.1,1.9 -0.2,2.3 -0.8,2.1 -0.2,2.2 0,7 0.3,2.3 1.2,1.9 2.5,-0.1 2.5,-0.1 2.4,0.8 2.5,0.3 -1,1.7 0.4,1.9 0.8,1.8 -0.5,1.9 3,-0.3 2.9,0.6 -2,0 -1.8,-1 -1.7,1.2 -1.5,1.2 -2.3,-0.2 -2.1,-1 -2,-1.1 -2.1,-0.5 -1.8,-1.5 -1.6,-1.5 -2.6,-0.4 -1.1,-2.3 -0.1,-2.6 -1,-2.4 -0.6,-2.5 -1.2,-2.3 0,-7.1 1.3,-1.9 1.8,-1.4 1.2,-1.9 1.4,-1.8 -0.4,-1.8 0.3,-1.9 -0.3,-1.8 -1,-1.6 -0.1,-3.2 1,-3.1 -0.3,-3.2 0.8,-3.2 1,-1.7 0.1,-2 0.7,-1.8 1.5,-1.3 0.3,-1.9 0.8,-1.8 -0.1,-2 1.4,-1.6 0,-8.4 1.3,-2.7 0.8,-2.8 -0.1,-2.9 0.8,-2.9 1.1,-2.7 -0.5,-2.9 -0.6,-2.9 0.9,-2.8 -0.3,-1.9 -0.6,-1.8 0.6,-1.9z" fill="#96d29b" stroke="#96d29b" stroke-width="2.2"/>
<path d="M982.9,415.3l1.3,-1.4 1.2,-1.4 2.6,0.7 2.5,0.7 2.9,0.6 2.8,-0.9 1.8,2.2 2.4,1.5 2.1,1.7 2.4,1 2.5,1 2.4,1.1 -0.3,3.1 -2,2.5 1.7,0.8 1.8,0.1 1.8,-0.2 1.8,-0.4 2.3,-2.1 1.7,-2.7 1.8,0.7 0.7,1.8 -1.6,1 -1.3,1.5 -1.4,1.3 -1.4,1.3 -1.6,1.1 -1,1.6 -1.5,1.3 -1.2,1.4 0,2 -0.5,2 -0.9,1.8 -0.3,2.1 -0.6,2.8 1.4,2.1 2,1.5 0.7,1.7 0.7,1.7 -1,2.8 -2.1,2 -3.1,0.2 -2.8,1.5 -3,-0.4 -3,1 -0.7,2.3 -0.2,2.5 -1.9,0.3 -1.8,0.4 -2,-0.2 -1.9,0.3 0,4.3 2,0.4 2,0.1 -1.3,1.4 -1.2,1.6 -1.5,1.2 -0.9,1.7 -1.4,1 -1.6,0.8 -1.4,1.2 -1.8,0.4 2.6,2 2.2,2.2 -1.3,2 -1.7,1.6 -1.6,1.8 -1.6,1.7 -1.8,1.9 -1,2.3 1.7,2.3 -2.7,0 -2.4,-1 -2.6,0.3 -2.5,-0.2 -1.2,-1.9 -0.3,-2.3 0,-7 0.2,-2.2 0.8,-2.1 0.2,-2.3 1.1,-1.9 -0.4,-2.2 0.7,-2 -0.3,-2.2 -0.3,-2.1 0.2,-2.1 0,-2.2 0.2,-2.3 1.3,-1.8 0.5,-2.2 -0.1,-2.2 0.8,-2 0.8,-2.1 -0.2,-2.2 0.4,-2.1 0.6,-2.1 0.6,-2 0,-8.5 1.7,-1.8 1.8,-1.8 0.3,-2.4 0.5,-2.5 0,-7 2.3,-2zM978.9,499.6l9.6,5.7 -3.7,0.8 -5.9,-0.3z" fill="#96d29b" stroke="#96d29b" stroke-width="2.2"/>
<path d="M996.2,413.6l0.2,-3.2 1.2,-3 2.7,-0.3 2.6,-1 2.7,0.6 2.8,0.1 -0.3,1.7 -0.1,1.7 0.8,1.6 0.7,1.5 2.9,0.9 3,-0.3 0.7,2.3 -0.1,2.5 1.7,-0.1 1.7,0.4 -0.8,2 0,2.2 -1.7,2.7 -2.3,2.1 -1.8,0.4 -1.8,0.2 -1.8,-0.1 -1.7,-0.8 2,-2.5 0.3,-3.1 -2.4,-1.1 -2.5,-1 -2.4,-1 -2.1,-1.7 -2.4,-1.5z" fill="#dcf0df" stroke="#dcf0df" stroke-width="2.2"/>
<path d="M1010.1,436.2l2.7,0.8 2.6,1.1 2,0.5 1.2,1.7 1.3,1.6 1.8,0.7 0.3,3.4 -2.2,1.7 -2.1,1.7 -2.2,-0.7 -2.3,0.4 -2.7,-1 -2.7,-1.2 0.6,-2.8 0.3,-2.1 0.9,-1.8 0.5,-2z" fill="#c8e6cc" stroke="#c8e6cc" stroke-width="2.2"/>
<path d="M1026.8,339.2l0.8,2 0.9,2 1.7,1.4 1.4,1.6 0,4.8 2.2,0.5 2.1,0.9 2.1,0.3 2.1,0.3 1.6,1.4 2.2,0.5 1.7,1.1 1.6,1.5 2.1,0.4 2.1,0.6 2.2,-0.3 2.1,1 1.7,0.6 1.8,0.3 1.8,0.5 1.8,0.3 2.2,2.2 2.9,1.4 2.7,0.5 2.7,0.9 0.4,2.8 1,2.6 -1.2,2.9 -0.2,3 -0.9,1.7 -1.7,0.9 -0.7,1.7 -1.6,1.1 -1.8,2.7 -2.4,2.4 -0.6,2.8 -0.8,2.8 0,7.9 -0.8,1.5 -0.8,1.5 -0.6,1.6 -0.7,1.6 -1.5,2.8 -1.3,2.8 -1.1,1.7 -1.7,1.2 -1.8,0.1 -1.8,-0.1 -1.8,0.2 -1.7,0.3 -3,1 -2.7,1.6 -1.5,0.9 -1.7,0.9 -0.9,1.6 -1.5,1.1 0,1.9 0.7,1.8 -0.4,1.8 -0.6,1.8 -2.2,1.6 -1.8,2.1 -2.2,1.2 -1.4,2 -0.6,2.5 -2,1.6 -2.2,1.8 -1.2,2.4 -0.3,-3.4 -1.8,-0.7 -1.3,-1.6 -1.2,-1.7 -2,-0.5 -2.6,-1.1 -2.7,-0.8 1.2,-1.4 1.5,-1.3 1,-1.6 1.6,-1.1 1.4,-1.3 1.4,-1.3 1.3,-1.5 1.6,-1 -0.7,-1.8 -1.8,-0.7 0,-2.2 0.8,-2 -1.7,-0.4 -1.7,0.1 0.1,-2.5 -0.7,-2.3 -3,0.3 -2.9,-0.9 -0.7,-1.5 -0.8,-1.6 0.1,-1.7 0.3,-1.7 1.2,-2.4 0.7,-2.6 -1.7,-2.1 -0.5,-2.7 -2.4,-0.9 -2.4,0.6 0.1,-2 0.1,-2 -1.2,-1.7 -0.5,-1.9 -1.7,0.1 -1.7,-0.6 -1.7,-0.4 -1.7,0.3 -1.3,-1.3 -1.3,-1.1 -1.7,-0.6 -1.6,-0.7 0.8,-3.2 -1.7,-3 -3.1,0.4 -3,0.5 -2.9,1.2 -2.9,1.3 -2.8,0 0,-4.2 -5.7,0 -1.2,-1.3 -1.2,-1.3 -1.7,-1.1 -0.1,-2 1.1,-2.3 1.7,-1.9 1.5,-2.1 2.4,-1 2.2,-1.2 2.4,-0.8 0.5,-2.2 1,-2.1 0.3,-2.4 -0.1,-2.3 -0.7,-2.9 -0.4,-3 2,0.5 2,0.3 2.1,0.2 1.8,-1.3 2,1.1 2.3,-0.2 2.1,-1.9 2.1,-1.8 -1.3,-2.4 -0.1,-2.7 4.8,0 1.8,-0.5 1.1,-1.4 1.3,-1.2 1.8,-0.3 2.5,0.6 -0.6,1.7 -0.4,1.8 0.1,1.8 0.4,1.7 1.3,1.8 1.5,1.6 1.4,-1.3 1.9,-0.7 1.9,0.4 1.9,-0.1 3.2,-0.7 3.3,-0.4 2.4,-0.3 2.4,-0.3 0.6,-2.6z" fill="#54ac5c" stroke="#54ac5c" stroke-width="2.2"/>
<path d="M1000.4,496.8l9.1,-0.6 -3.4,2.3z" fill="#f3f8f3" stroke="#f3f8f3" stroke-width="2.2"/>
<path d="M965.9,129.6l1.9,-0.1 1.8,-0.8 1.7,-1 1.7,-0.8 2,-0.1 1.8,-0.7 1.9,-0.2 1.9,-0.5 2.2,-0.1 2.1,-0.9 2.1,-0.7 2.1,-0.7 2.3,-0.2 2,-1 2.2,-0.4 2,-1.1 2.2,0.2 2,1 2.2,0 2.2,-0.3 2,-0.7 2.1,-0.7 2.1,-0.2 2.2,-0.2 2.1,0.4 2.2,-0.4 2.1,0.1 2.1,-0.1 2,-1 2.2,-0.1 2.1,0.2 2.2,-0.1 2.5,2.2 3.3,0.2 3.2,0 3.1,-0.5 3.1,0.1 2.9,-1.2 3.1,0.2 3,-0.2 3.3,-0.6 3.3,0.4 2.7,-1.9 2.3,-2.2 3.1,-0.3 3.1,-0.4 3,1 3.2,0 3,0.5 2.4,1.9 2.9,0.1 2.9,0.3 3,0 2.7,-1.2 3,1.1 2.8,-1.5 1.8,0.2 1.7,0.6 1.9,-0.1 1.8,0.3 1.8,0.4 1.6,1 1.7,0.5 1.8,0.5 3.1,-0.8 2.5,1.9 2.9,0.5 2.8,-0.4 2.9,0.4 2.8,0.3 2.8,-0.2 2.9,-0.3 -1.7,0.7 -1.8,0.6 -1.9,0.3 -1.8,0.1 -1.9,0.2 -1.8,0.6 -1.5,1 -1.8,0.7 -2.1,1.5 -2.1,1.3 0.2,2.3 1.2,2 -1.7,0.7 -1.5,0.9 -0.8,1.8 -1.7,0.8 0.6,2.1 0.8,2.1 -1.4,2.5 -2.1,1.8 -2.5,1.4 -2.5,1.4 0,2.3 1.5,1.9 -1.5,1.2 -1.5,1 -1.5,1.1 -1,1.7 -1.8,0.3 -1.8,0 -1.8,0.5 -1.9,-0.2 -1.9,0.6 -2,0 -1.9,0.2 -2,0.3 -2,0 -1.8,1 -2,-0.5 -2,-0.2 -1.6,0.8 -1.7,0.5 -1.7,0.7 -1.5,0.9 -1.6,0.9 -1.8,0.2 -1.4,1.2 -1.4,1 -2.3,1.2 -2.6,0.6 -2.5,0.4 -2.6,0.1 -2,2.3 -1.1,2.9 -2.2,2.1 -1.7,2.6 -1.6,2.7 -2.7,1.8 -3,-0.5 -2.5,-1.6 -2.8,-1.2 -3,0.2 -2.7,-2 -2.7,-1.8 -2.6,-2.1 -2,-2.6 -1.7,-1.9 -1.1,-2.3 -1.8,-1.9 -1,-2.3 1.2,-2.3 1.7,-1.9 1.9,-1.7 2.3,-1.2 -2.4,-1.5 -2,-1.9 -2.8,0.1 -2.8,0.5 0.3,-3.1 -1.7,-2.5 -1.7,-2.8 -3.2,-0.8 -1.5,-2.7 -2.1,-2.2 -2.7,-1.1 -2.8,-0.7 -2.9,0.4 -2.8,-0.3 -2.9,0.4 -2.8,0.2 -2.9,-0.2 -2.8,-0.1 -1.9,-0.7 -1.5,-1.2 -1.8,0.4 -1.9,0.1 -1.8,-0.6 -1.7,-0.6 -1.8,-0.3 -1.8,0.1 -1.2,-1.6 -1.7,-0.8 -1.6,-1z" fill="#dcf0df" stroke="#dcf0df" stroke-width="2.2"/>
<path d="M989.4,259.6l0.8,0 -0.3,0.6z" fill="#f3f8f3" stroke="#f3f8f3" stroke-width="2.2"/>
<path d="M1105.3,166.3l2.7,-1.5 3,-1 2.9,0.9 2.8,-1.3 2.7,1.1 2.9,-0.2 9.9,0 1.2,1.8 1.4,1.6 -2.2,0.6 -1.8,1.4 -2.6,1.1 -2.5,1.2 -2.9,0.2 -2.8,0 -2.6,-0.3 -2.6,-0.5 -2.6,-0.6 -2.7,0 1.5,-2.5 -2.8,-1.3z" fill="#dcf0df" stroke="#dcf0df" stroke-width="2.2"/>
<path d="M1157.1,209.7l3.2,-0.1 3.1,-0.4 2.5,0.7 2.7,0.2 2.2,-1.4 2.5,-1 2,-0.4 2,-0.7 -2.6,-0.8 1.1,-2.4 2.3,-1 -2.2,-0.2 -2,-0.7 -0.7,-2 -0.5,-2.2 -2,-1.4 -1.9,-1.4 -1.7,-1.4 0,-2.3 0.5,-2.2 -5.6,0 0.6,-1.9 1.6,-1 -5.1,0 -2.1,1.2 -1.3,2 0.3,2.4 1.7,1.8 0.9,1.7 1.1,1.7 2.4,1.4 2.7,0.8 0,2 -4.3,0 0.9,2.8 -2.8,1.4 2.7,1.2 2.9,0 -1.8,0.6 -1.9,0.5 -1.8,1.1zM1152.6,195.9l5.1,1.1 -2,1.4 -5.1,-0.8zM1169,180.1l1.7,0.9 -1.4,1.1z" fill="#54ac5c" stroke="#54ac5c" stroke-width="2.2"/>
<path d="M1145,205.5l2.6,0 2.5,-0.9 2.5,-0.5 2.6,-0.3 0.5,-2.7 0,-2.7 -2.5,-0.6 -2.6,-0.2 2,-1.7 -2.8,-0.6 -2.3,1.8 -2.5,1.1 1,1.5 0.4,1.8 -0.4,2.1z" fill="#54ac5c" stroke="#54ac5c" stroke-width="2.2"/>
<path d="M1168.2,228.6l-0.8,-1.9 0.2,-2.1 0.9,-1.8 1.4,-1.5 -2.2,-1.5 -1.5,-2.2 -1.6,-0.6 -1.5,-0.7 -1.7,-0.4 -1.4,-1.1 2.2,0 2.3,0.1 2,-1.1 2.3,-0.1 0,-2.6 2.5,0.6 2.6,-0.3 2.3,-1.6 1.6,-2.3 2.6,-0.6 2.2,1.8 2.6,1.3 2.3,0.7 2.2,0.7 1.7,0 2.3,1.7 2.8,-0.3 -1,1.9 -0.7,2.1 -2.4,1.6 -2.1,2 2.8,1.2 0,4.8 1.5,1.1 -1.7,1.3 -2,0.7 -3.1,-0.6 -3.2,-0.6 -1,1.8 -1.5,1.3 -1.6,-0.8 -1.8,-0.1 -1.7,0.2 -1.7,-0.4 -1.8,-0.4 -1.8,-0.2 -1.8,-0.5zM1197.7,231.2l2.2,-1.5 0.3,3.1 -0.8,1.5 -1.4,-1.2z" fill="#2f8c47" stroke="#2f8c47" stroke-width="2.2"/>
<path d="M1168.2,228.6l1.7,0.6 1.8,0.5 1.8,0.2 1.8,0.4 1.7,0.4 1.7,-0.2 1.8,0.1 1.6,0.8 0.3,1.4 -1.6,1 -1.3,1.3 -1.8,0.2 -1.8,0.1 -1.2,2.5 -2.3,1.7 1.5,2 -1.6,1.4 -1,2 -2,1.2 -2.2,1 -3.3,0.8 -3.3,-0.5 -1.7,0.7 -1.4,1.3 -2,-1.7 -1.2,-1.4 -1.9,-0.3 0.5,-1.8 0.1,-1.9 0.3,-1.7 0.3,-1.7 0.2,-1.8 0.3,-1.8 1.4,-2.6 -2.6,-0.4 -2.7,0.2 -2,-0.3 -0.9,-3.1 1.8,-0.5 1.6,-0.9 2.5,-0.1 2.6,-0.3 2.3,1 2.5,0.2zM1180.1,239.3l2.8,-0.8 -0.8,1.7zM1125.4,270.9l2,-0.3 -1.1,1.4zM1128.5,271.8l1.2,0 -0.6,0.8zM1132.8,270.3l1.1,-0.2 -0.8,1.7z" fill="#2f8c47" stroke="#2f8c47" stroke-width="2.2"/>
<path d="M1148.1,232.3l2,0.3 2.7,-0.2 2.6,0.4 -1.4,2.6 -0.3,1.8 -0.2,1.8 -0.3,1.7 -0.3,1.7 -0.1,1.9 -0.5,1.8 -2.1,0.5 -2.1,0.1 -0.2,-2 0.5,-2 -2,-1.1 1.6,-2.1 0.4,-2.7 0.4,-2.3z" fill="#54ac5c" stroke="#54ac5c" stroke-width="2.2"/>
<path d="M1180.4,206.9l2.5,-0.8 2.3,0 2.9,0.1 2.5,1.5 0,2 -0.9,1.7 -2.2,-0.7 -2.3,-0.7 -2.6,-1.3z" fill="#2f8c47" stroke="#2f8c47" stroke-width="2.2"/>
<path d="M1182.9,206.1l2.3,0 2.9,0.1 2.5,1.5 -0.3,-2.8 1.5,-2.2 1.9,-2 -1.8,0.2 -1.6,-0.8 -1.9,0.6 -1.8,0.8 -2,2.1z" fill="#2f8c47" stroke="#2f8c47" stroke-width="2.2"/>
<path d="M1190.6,207.7l-0.3,-2.8 1.5,-2.2 1.9,-2 2,-0.9 2,-0.8 0,-2.8 1.8,0.6 1.9,-0.3 1.6,1 1.5,1.2 2.3,0.2 2.2,0.4 2.2,-0.5 2.3,0.2 -0.1,2.1 0.1,2.1 0.7,1.9 0.5,2.1 1.1,0.3 -2.2,0.2 -2,-0.6 -2,0.8 -1.7,1.3 2.5,2 2,2.5 -1.3,1.6 -1,1.8 -1.8,0.2 -1.7,-0.5 -1.8,0 -1.7,0.5 -2.6,-0.2 -2.8,-0.5 -2.9,0.2 0.7,-2.1 1,-1.9 -2.8,0.3 -2.3,-1.7 -0.8,-1.7z" fill="#1a7d36" stroke="#1a7d36" stroke-width="2.2"/>
<path d="M1197.7,196.2l-1.4,-1.7 0.2,-2.1 0,-2.1 1.7,-0.6 1.6,-0.6 1.7,-0.1 1.6,-0.7 -0.5,1.7 -0.4,1.7 2,0.3 -1.4,2.2 -1.4,2.3 -1.9,0.3zM1204.5,193.9l4.2,-0.8 -0.5,2.8 -3.2,-0.3z" fill="#54ac5c" stroke="#54ac5c" stroke-width="2.2"/>
<path d="M1213.5,199l2.9,0 2.5,-1.4 2.6,-0.8 2.8,-0.3 2.2,0.2 2.1,0.9 2.4,-0.6 2.5,0.6 2.5,0.8 2.5,-0.5 1.8,1.9 0.7,2.6 -0.3,1.7 -0.5,1.7 1.4,2.8 -2.4,1.6 -1.9,2.3 -2.6,-0.5 -2.3,-1.2 -2.6,0.7 -2.7,0.2 -0.5,-0.3 -2.7,-0.9 -2.4,-1.3 -2.7,-1.4 -3,-0.3 -1.1,-0.3 -0.5,-2.1 -0.7,-1.9 -0.1,-2.1z" fill="#54ac5c" stroke="#54ac5c" stroke-width="2.2"/>
<path d="M1207.9,209.2l1.7,-1.3 2,-0.8 2,0.6 2.2,-0.2 3,0.3 2.7,1.4 2.4,1.3 2.7,0.9 -2.4,1.3 -2.7,0.7 -2.9,0 -2.8,-0.6 -1.7,0.4 -1.7,0.5 -2,-2.5z" fill="#96d29b" stroke="#96d29b" stroke-width="2.2"/>
<path d="M1221.5,213.4l2.7,-0.7 2.4,-1.3 0.5,0.3 2.7,-0.2 2.6,-0.7 2.3,1.2 2.6,0.5 -1.4,2 -3.1,-0.9 -2.8,1.5 -2.9,0.4 -2.8,0.7 -2.8,-0.6z" fill="#c8e6cc" stroke="#c8e6cc" stroke-width="2.2"/>
<path d="M1200.5,217.1l2.6,0.2 1.7,-0.5 1.8,0 1.7,0.5 1.8,-0.2 1,-1.8 1.3,-1.6 1.7,-0.5 1.7,-0.4 2.8,0.6 2.9,0 0,2.2 -1.2,1.7 -1.4,1.4 -2.1,1.3 -2.4,0.2 -2.3,-0.3 -1.8,-0.7 -1.9,0.1 -2.7,-0.1 -2.6,-0.5 -2.6,-0.5z" fill="#54ac5c" stroke="#54ac5c" stroke-width="2.2"/>
<path d="M1190.3,220.4l2.1,-2 2.4,-1.6 2.9,-0.2 2.8,0.5 0,1.1 2.6,0.5 -0.9,1.7 -1.8,0.4 -1.6,0.8 -5.7,0z" fill="#2f8c47" stroke="#2f8c47" stroke-width="2.2"/>
<path d="M1193.1,226.4l0,-4.8 5.7,0 1.6,-0.8 1.8,-0.4 0.9,-1.7 2.6,0.5 2.7,0.1 1.9,-0.1 1.8,0.7 0.3,2.5 -2.2,0.1 -2,0.8 0.2,3.1 1.8,0.8 1.6,1.1 0.7,1.7 1,1.4 2.6,0.8 2.5,0.6 0,1.5 1.8,0.9 1.6,1.2 1.9,0.6 1.8,0.9 -0.8,0.9 -1.7,-1.3 -2,-0.7 -1.1,2.2 1.7,2 -1.5,1.4 -1.4,1.4 -1.4,0 1.1,-2.8 -1.1,-2.8 -1.7,-0.6 -1.4,-1.1 -3.4,-0.1 -2.3,-2.4 -1.9,-1.6 -2.3,-1 -1.4,-1.3 -0.6,-1.8 -2.2,-1.1 -2.1,-1.4 -1.7,1 -1.9,0.7zM1208.7,243.8l8.5,-0.5 -1.1,4.2 -7.4,-2.5zM1196.5,235.4l4.3,0 -0.3,5.1 -3.4,0.5z" fill="#2f8c47" stroke="#2f8c47" stroke-width="2.2"/>
<path d="M1218.9,218.7l1.4,-1.4 1.2,-1.7 2.8,0.6 2.8,-0.7 2.9,-0.4 2.8,-1.5 3.1,0.9 2.3,1.1 -1,1.5 -1.3,1.2 -1.3,1.1 -1.2,1.3 -1.8,0.1 -1.6,0.7 -1.7,-0.2 -1.7,0.3 -3.3,-0.7 -3.2,-1z" fill="#96d29b" stroke="#96d29b" stroke-width="2.2"/>
<path d="M1212.1,219.9l2.3,0.3 2.4,-0.2 2.1,-1.3 1.2,1.2 -1.7,1.4 -1.7,1.4 -2.2,-0.1 -2.1,-0.2z" fill="#96d29b" stroke="#96d29b" stroke-width="2.2"/>
<path d="M1212.4,222.4l2.1,0.2 2.2,0.1 1.7,-1.4 1.7,-1.4 3.2,1 3.3,0.7 0.5,2.5 -2.1,-0.1 -2.1,-0.1 -2.1,0 -2.2,-0.4 0,3.4 1.8,1.1 1.7,1.2 1.9,0.8 1.7,1.2 -2.1,-0.8 -2.1,-0.7 -1.6,-0.8 -1.4,-1.1 -1.2,-1.3 -1.5,-1 -2.8,-1.4z" fill="#96d29b" stroke="#96d29b" stroke-width="2.2"/>
<path d="M1218.6,223.5l8.5,0.6 1.2,2.8 -2.6,4 -7.1,-4z" fill="#dcf0df" stroke="#dcf0df" stroke-width="2.2"/>
<path d="M1227.1,224.1l-0.5,-2.5 1.7,-0.3 1.7,0.2 1.6,-0.7 1.8,-0.1 2.3,2.1 1.4,2.7 1,1.7 0.1,2 -1.7,2.5 -2.6,0 -2.2,1.1 -1.7,-2.2 -1.7,-2.3 0,-1.4z" fill="#96d29b" stroke="#96d29b" stroke-width="2.2"/>
<path d="M1225.7,231.2l2.6,-2.9 1.7,2.3 -1.7,2.2z" fill="#dcf0df" stroke="#dcf0df" stroke-width="2.2"/>
<path d="M1228.3,232.8l1.7,-2.2 1.7,2.2 1.1,3.1 -1.5,1.5 -1.3,1.6 -1.7,-1.6z" fill="#dcf0df" stroke="#dcf0df" stroke-width="2.2"/>
<path d="M1231.7,232.8l4.8,-1.1 2,2.8 -5.7,1.4z" fill="#dcf0df" stroke="#dcf0df" stroke-width="2.2"/>
<path d="M1230,239l1.3,-1.6 1.5,-1.5 3,-0.2 2.7,-1.2 2.2,-0.9 2.4,-0.4 2.4,-0.2 2.3,0.4 -0.8,2.5 -2.9,0 -2.8,0.3 -1.5,0.9 -1.3,1.1 -0.6,2.3 2.3,1.1 1.1,2.2 -1,2.4 -1.8,1.9 -2.9,-0.3 -1.2,-1.6 -1,-1.8 -1.4,-2.8zM1240.2,250.9l7.4,0.6 -0.6,0.8 -6.8,-0.6zM1252.1,248.6l1.1,-0.2 -0.8,1.4z" fill="#54ac5c" stroke="#54ac5c" stroke-width="2.2"/>
<path d="M1236.5,231.7l1.7,-2.5 -1.1,-2.8 3.2,-0.3 3.1,0.1 3.3,-0.1 3.1,0.5 2.3,0.1 2,1.1 -0.2,2.5 -1.2,2.3 -2.6,-0.2 -2.3,1 -2.3,-0.4 -2.4,0.2 -2.4,0.4 -2.2,0.9 -0.9,-1.4z" fill="#c8e6cc" stroke="#c8e6cc" stroke-width="2.2"/>
<path d="M1233.4,220.7l1.2,-1.3 1.3,-1.1 1.3,-1.2 1,-1.5 2.6,-0.4 2.6,0.2 2.7,0.4 2.6,-0.7 1.9,2.7 2.6,2.1 0,3.1 2.1,0.3 2.2,0.2 -1.5,2.4 -1.9,1.9 -2,-1.1 -2.3,-0.1 -3.1,-0.5 -3.3,0.1 -3.1,-0.1 -3.2,0.3 0,-0.9 -1.4,-2.7z" fill="#96d29b" stroke="#96d29b" stroke-width="2.2"/>
<path d="M1248.7,215.1l6.8,0.5 2.8,4.6 -5.1,2.8 0,-3.1z" fill="#dcf0df" stroke="#dcf0df" stroke-width="2.2"/>
<path d="M1235.9,214.5l1.4,-2 1.9,-2.3 2.4,-1.6 -1.4,-2.8 2.4,0.4 2.4,0.3 2.4,-0.4 2.4,-0.6 2.5,-0.3 2.5,0.4 2.5,0.2 2.4,0.5 2,-1.4 2.3,-1.1 5.7,0 2.5,2.2 1.7,2.9 3.3,0 3.1,0.9 3.2,0.5 3.2,0.8 0,4.5 -2.6,1.2 -2.5,1.4 -2.4,0.3 -2.2,0.7 -2.3,0.8 -2.2,0.7 2.1,1.4 2.4,0.9 -2.1,1.3 -1.8,1.6 -2.4,-0.8 -2.5,0.7 -1.5,-1.3 -1.3,-1.5 1.3,-1.1 1.5,-0.9 -1.6,-0.7 -1.8,-0.4 -1.8,0 -1.8,-0.3 -1.6,2.3 -2.1,1.6 -2.2,-0.2 -2.1,-0.3 2.2,-2 2.9,-0.8 -1.1,-2.5 -1.7,-2.1 -1.7,-0.1 -1.7,-0.2 -1.7,0.1 -1.7,-0.3 -2.6,0.7 -2.7,-0.4 -2.6,-0.2 -2.6,0.4z" fill="#c8e6cc" stroke="#c8e6cc" stroke-width="2.2"/>
<path d="M1240.2,205.8l0.5,-1.7 0.3,-1.7 -0.5,-1.7 -0.6,-1.7 2.4,-1 1.9,-1.7 2.4,-0.9 2.1,-1.5 2.3,-0.3 2.2,-0.8 1.8,1.1 1.8,1 2.1,0.2 2,-0.9 1.5,1.3 1.1,1.6 1.1,1.6 1.4,1.4 -1.7,0.8 -1.7,0.4 1.4,2.5 -2.3,1.1 -2,1.4 -2.4,-0.5 -2.5,-0.2 -2.5,-0.4 -2.5,0.3 -2.4,0.6 -2.4,0.4 -2.4,-0.3z" fill="#c8e6cc" stroke="#c8e6cc" stroke-width="2.2"/>
<path d="M1232.8,195.1l0,-2.3 2.8,-0.5 2.7,-0.7 2.8,-0.1 2.8,0.5 2.2,1.2 2.6,0.7 -2.1,1.5 -2.4,0.9 -1.9,1.7 -2.4,1 -1.4,-1.1 -0.6,-1.7 -2.4,-1.1z" fill="#c8e6cc" stroke="#c8e6cc" stroke-width="2.2"/>
<path d="M1232.8,192.8l1.1,-1.8 0.3,-2.1 2,-0.4 2,0 2.1,0.3 1.9,-1.1 2.2,0 2.2,0.2 2.1,0.8 2.3,0.2 0.6,2.2 1.6,1.7 -2.2,0.8 -2.3,0.3 -2.6,-0.7 -2.2,-1.2 -2.8,-0.5 -2.8,0.1 -2.7,0.7z" fill="#dcf0df" stroke="#dcf0df" stroke-width="2.2"/>
<path d="M1239.9,185.5l2.3,2.2 8.8,1.2 1.7,-5.7 -10,0zM1235.6,185.7l2.9,0.3 -1.4,1.4z" fill="#c8e6cc" stroke="#c8e6cc" stroke-width="2.2"/>
<path d="M1235.6,181.8l8.5,0 2.1,-0.1 2,-0.3 2,-0.3 1.9,-0.7 2.1,-2.4 2.5,-1.9 2.9,-1.3 3,-1.2 -1.1,-2.9 -2.1,-2.4 -1.4,-2.8 -1.1,-2.9 0,-2.1 0.3,-2.1 -0.3,-2.2 -1.4,-1.8 -2.3,0.4 -2.1,0.7 -2.4,-0.2 -1.7,-1.7 -0.9,3.1 -2.9,-0.4 -2.7,1 -2.3,0 -2.1,-0.6 -2.2,-0.6 -2.2,0 1.9,1.4 2.1,0.9 2.3,0.2 2.2,0.9 0.7,2.9 0.4,3 1.9,1.1 1.8,1.2 -3.1,0.3 -2.9,1.4 -2.6,1.6 -2.2,2.3 0,5.7z" fill="#54ac5c" stroke="#54ac5c" stroke-width="2.2"/>
<path d="M1204.8,184.9l1.1,2.5 1.5,3.1 2.2,2.6 2.1,0.8 2.1,0.9 1,-1.6 1.6,-1.1 1.9,0.2 1.8,-0.6 0.2,-3 0.6,-3 1.2,-1.3 1.5,-1.1 1.7,-0.7 1.6,-0.8 -2.5,-2 -2.4,-2.2 1.2,-1.6 1.1,-1.5 1.5,-1.2 1.5,-1.2 1.8,-0.5 1.7,-1 1.8,-0.6 1.6,-0.9 2,-0.7 1.9,-0.4 1.4,-1.5 1.8,-1.1 -0.4,-3 -0.7,-2.9 -2.2,-0.9 -2.3,-0.2 -2.1,-0.9 -1.9,-1.4 -1.9,0.1 -2,0 -1.5,1.3 -2,0.3 -1.9,1.5 -1.5,1.7 -1.9,1.5 -1.8,1.5 -2,2.2 -0.8,2.9 -1.6,0.7 -1.6,0.9 -1.5,1 -1.8,0.2 0.1,2.9 -0.4,2.8 0.4,1.9 0.7,1.7 -2.1,1.7zM1224.9,187.7l2.2,0.3 -1.9,2.3z" fill="#54ac5c" stroke="#54ac5c" stroke-width="2.2"/>
<path d="M1204.8,184.9l1.8,-2 2.1,-1.7 -0.7,-1.7 -0.4,-1.9 0.4,-2.8 -0.1,-2.9 1.8,-0.2 1.5,-1 1.6,-0.9 1.6,-0.7 0.8,-2.9 2,-2.2 1.8,-1.5 1.9,-1.5 1.5,-1.7 1.9,-1.5 2,-0.3 1.5,-1.3 2,0 1.9,-0.1 2.2,0 2.2,0.6 2.1,0.6 2.3,0 2.7,-1 2.9,0.4 0.9,-3.1 1.7,1.7 2.4,0.2 2.1,-0.7 2.3,-0.4 2.6,0.3 2.5,-0.5 0.6,-1.4 -2.1,-1.1 -1.9,-1.2 -2.3,-0.1 -2.2,0.1 -3.2,-0.6 -3.3,-0.2 -3.1,1.2 -3.2,0.4 -3.1,1.2 -3.2,0.2 -3.2,0.7 -3.3,0.2 -2.7,1.4 -2.4,2 -3.2,-0.1 -3,0.9 -1.7,1.4 -2.1,0.4 -1.1,1.9 -0.8,2 -1.7,1.4 -1.8,1.4 -1.8,1.3 -1.7,1.5 -2,0.7 -1.3,1.6 -1.9,0.4 -1.9,0.4 -2.1,1.2 -1.9,1.4 -2.3,0.5 -2.2,0.9 0,7 2.4,1.6 1.8,2.4 2.9,-0.1 2.8,-0.2 2.9,-1.3 2.8,-1.5z" fill="#54ac5c" stroke="#54ac5c" stroke-width="2.2"/>
<path d="M1247,235.9l0.8,-2.5 2.3,-1 2.6,0.2 1.2,1.4 1.6,0.8 7.1,0 2.5,-0.7 2.6,0.5 2.2,-1.5 2.6,-0.5 2.2,0.4 2,1.1 2.1,0.7 2.2,0.6 2.4,-0.6 2.6,0 2.5,0.1 2.4,-0.9 3,-0.1 2.7,1.2 1.6,2.2 2.1,1.7 -0.9,2.4 -0.8,2.4 1.7,2.3 -1.7,0.2 -1.7,-0.2 -1.7,0.2 -1.7,0.1 -1.8,-0.5 -1.6,0.9 -1.7,0.3 -1.7,0.1 -9.4,0 -2,2.3 0,-1.7 -2.8,0.7 -2.8,0.1 -2.9,0.3 -2.8,0.3 -2.1,-1.1 -2.2,-0.9 -1.9,1.4 -2.3,0.3 -2.6,-0.1 -2.2,-1.3 -1.9,-2.3 -1,-2.8 -0.2,-2.8 0,-1.9z" fill="#54ac5c" stroke="#54ac5c" stroke-width="2.2"/>
<path d="M1264.8,252.3l2,-1.1 4.6,-0.9 -2,2 -2.6,1.1z" fill="#c8e6cc" stroke="#c8e6cc" stroke-width="2.2"/>
<path d="M1286.7,228.3l1.2,1.4 1.6,0.9 1.1,1.5 0.3,1.9 3,-0.1 2.7,1.2 2.1,0 2.1,-0.3 2.1,0.4 2.2,-0.1 0,-2.3 -1.7,-0.8 -1.8,-0.3 -1.8,-0.4 -1.8,-0.4 -2.9,-0.5 -2.8,-0.7 -2.8,-0.9z" fill="#dcf0df" stroke="#dcf0df" stroke-width="2.2"/>
<path d="M1296.6,235.1l3.7,3.9 4.8,2.3 -1.4,-3.7 -2.9,-2.8z" fill="#c8e6cc" stroke="#c8e6cc" stroke-width="2.2"/>
<path d="M1300.8,234.8l2.1,0.4 2.2,-0.1 0,-2.3 3,-0.2 2.9,0.5 2.5,2.1 2.4,2.2 -1.9,1.8 -1.8,1.8 -0.3,1.7 -1.5,-1.4 -1.1,-1.7 -2.2,0.6 -2,1.1 -0.5,-1.9 -0.9,-1.8 -1,-1.8z" fill="#dcf0df" stroke="#dcf0df" stroke-width="2.2"/>
<path d="M1252.7,183.2l2.8,-0.6 2.8,-0.8 -3.2,0 -3,-1.4 2.1,-2.4 2.5,-1.9 2.9,-1.3 3,-1.2 -1.1,-2.9 -2.1,-2.4 -1.4,-2.8 -1.1,-2.9 0,-2.1 0.3,-2.1 -0.3,-2.2 -1.4,-1.8 2.6,0.3 2.5,-0.5 3,1.3 3.2,-0.2 2.2,-0.4 2.1,0.6 2.1,0.1 2.1,0.3 1.9,0.4 1.8,0.4 1.9,0.3 1.9,-0.3 1.9,0.4 2,0.3 1.8,0.9 1,1.8 0,4.2 -2.1,0.3 -2.2,-0.4 -2,0.7 -2.2,0 -3.3,-0.1 -3.1,-0.9 -3.2,-0.2 -3.2,-0.8 1.6,1 1.2,1.5 1.3,1.7 -0.4,2 3.2,0.9 3.1,1.1 1.3,-1.1 1.5,-0.9 7.1,0 -1.4,-2.8 2.1,-0.6 2,-1 2.1,-0.8 2.3,0.1 1.1,-1.4 1.7,-0.9 0.3,-1.8 0.3,-1.8 2.7,-0.2 2.4,1.3 -2.3,1.6 -2,1.8 7.1,0 1.9,-1.3 1.7,-1.5 2.3,-0.1 2.3,-0.4 2.3,0.3 2.2,0.3 2.1,-0.8 2.2,-0.7 2.1,0.2 2.2,0.1 1.9,-0.8 1.7,-1.1 2,0.9 2.1,-0.1 2,-0.1 1.9,0 2,-0.2 1.9,0 1.3,-1.8 1.6,-1.3 2.1,0.4 2,1 2.2,-0.1 2.2,0.1 3.1,1.2 2.9,1.8 1.7,0.3 1.7,0.6 1.7,-0.3 1.6,-0.5 -1.7,-2.3 -2.5,-1.4 -0.2,-2.1 -0.4,-2.1 1.1,-1.4 1.4,-1.1 0.9,-1.5 1.4,-1.1 11.4,0 -0.2,2.6 1,2.5 -1,1.9 -1.5,1.5 0.3,2.1 -0.1,2.1 2.3,2 2,2.2 -2.3,0.1 -2,1.3 2,-1 1.5,-1.5 2.1,-0.6 1.5,-1.7 0,-11.2 1.4,-2.3 2.4,0.9 2.6,0.3 2.5,0.1 2.5,0.4 2.7,-0.9 2.9,0.1 0,-3.2 2.4,0.3 2.2,0.9 2.4,-0.2 2.3,-0.5 2.3,-0.3 2.4,-0.1 2.2,-0.6 2.3,-0.6 0,-3.4 2,0.7 1.9,-0.8 1.9,-0.5 2,-0.1 2.1,-0.2 1.8,0.9 2,0.3 2,-0.2 1.9,-0.6 2,-0.1 2,-0.2 1.9,-0.1 2,-0.5 1.6,-1.3 2,-0.8 2,0.4 2.3,-0.8 1.9,-1.3 2.4,-0.5 1.9,-1.4 2.3,0 2.4,0.3 2.3,-0.4 2.4,0.2 3.1,0.3 3.1,0.8 2.5,0.3 1.9,1.7 2.2,1.1 2.5,-0.2 2.2,1.1 2.4,0 2.4,-0.5 2.3,0.7 0.7,3.2 0.8,3 3.2,-0.3 3.2,-0.2 1.6,0.6 1.3,1 1.7,-0.4 1.7,-0.1 2.2,-0.2 2.1,0.8 2,-0.8 2.2,0.2 2.2,0.5 2.2,0.5 2.1,-0.9 2,-0.9 2.3,0.4 2.1,1.1 1.8,1.5 2.3,0.6 1.3,1.8 1.7,1.1 2,0.7 2.1,0.4 2.2,0.1 2.1,-0.7 2.1,-0.8 2.1,-0.6 2,0.1 1.9,0.7 1.9,0.1 2,-0.2 1.9,0.8 2,0.6 1.9,-0.6 2,-0.6 2.9,-1.5 2.8,-1.9 1.7,0.2 1.8,0 1.8,0.3 1.7,-0.6 1.7,0.6 1.3,1.2 1.6,0.8 1.7,0.4 1.8,-0.1 1.7,-0.3 1.9,-0.4 1.2,-1.4 1.8,0.2 1.7,0.4 1.7,-0.1 1.8,-0.1 2.4,0.2 2.1,0.9 1.8,1.6 2.2,1 2.3,0.4 2.5,0.2 2,1.4 2.4,0.5 2.1,-1.1 2.4,-0.3 2.3,-0.6 2.4,-0.3 1.5,1.6 1.3,1.8 2.8,1.1 2.9,-0.2 2.9,0.3 2.8,0.3 3.2,-0.1 2.3,-2.2 2.9,-0.1 2.9,0.1 1.8,0.9 1.9,0.3 1.6,1.1 1.8,0.8 0.6,-1.8 0.8,-1.6 2.5,0.4 2.5,-0.2 2.5,0.1 2.5,-0.2 2.6,-0.2 2.5,0.4 2.3,0.9 2.5,0.8 2.7,0.7 2.9,0.4 0,11 -1.7,0.4 -1.8,0.3 -1.8,0 -1.8,0.4 1.2,1.4 1.4,1.2 0.7,1.6 1,1.5 -3.2,0.5 -3.2,0.5 -3.1,0.9 -3.3,0.3 -2.9,1.4 -3,1.2 -2.7,2 -3.3,0.5 -2.9,-1.1 -3.1,-0.4 -3,0.7 -3.2,0 -1.8,0.1 -1.8,0.2 -1.7,0.5 -1.7,0.6 0.1,2.5 -0.7,2.5 -1.6,2.6 -1.5,2.5 0.3,2.1 -0.9,1.9 -1,1.6 -1.3,1.2 -1.6,1.1 -1.8,0.6 -2.8,1 -2,2.4 -2.2,1.5 -2.3,1.3 -0.8,-2.8 -0.8,-2.9 0.4,-3.1 -1.9,-2.5 -0.5,-2.9 1,-2.7 1.7,-1.4 1.7,-1.5 2.1,-0.3 1.7,-1.1 2.1,0.1 2,0.3 1.5,-1.4 1.8,-0.9 1.4,-1.4 1,-1.7 0.6,-2.3 2,-1.5 1.9,-1.1 1.8,-1.3 -3.1,0 -3.1,0.5 -2.4,2.1 -1.9,2.4 -0.9,-3.1 -2.3,0.4 -2.4,-0.4 -2.4,-0.2 -2.2,1.1 -1.5,1.6 -2,1.1 -1.7,1.4 -1.6,1.5 -1.4,1.1 -1.7,0.3 -1.7,-0.4 -1.7,0.4 -2.6,0.2 -2.4,-0.8 -2.5,-0.3 -2.5,0.1 -2.1,0.7 -2.2,-0.6 -2.2,-0.5 -2.2,0.4 -2.3,-0.3 -2.2,-0.3 -2.2,0 -2.1,0.9 -2,2.2 -2.2,2 -2.8,1 -2.9,0.7 -2.9,1 -2.8,1.4 -2.9,1.3 -1.4,3 2.7,1.7 3,0.9 2.4,0 2.2,0.5 2.3,0.6 2.2,0.9 1.3,1.2 1.2,1.3 -1,2.8 -1.5,2.6 -0.3,2.9 -1.1,2.7 -1.5,1.2 -1.5,1.2 -1.2,1.5 -1.5,1.2 -1.9,1.7 -2.5,1 -1.7,1.9 -1,2.4 -1.8,1.2 -2.1,-0.1 -1.5,1.5 -1.7,1.1 -2.8,-0.3 -2.8,0.6 -0.9,0.8 0.7,-1.6 0.2,-1.8 0.3,-2 0.5,-1.9 2.5,-0.2 2.3,-0.7 1.6,-1.8 1.5,-2 0.5,-2.5 1.2,-2.1 -2.7,0.1 -2.4,1.3 -2.7,0.3 -2.6,-0.3 -0.8,-1.5 -0.7,-1.6 -2.3,0.4 -2.2,-0.8 -2.3,-0.7 -1.7,-1.7 -0.9,-2.2 -1.3,-2 -1.1,-2.1 -0.9,-2.2 -2,0.3 -1.5,-1.4 -1.9,0 -1.7,-0.9 -2.5,0.3 -2.5,0 -2.5,-0.5 -2.4,0.8 0,4.8 -0.9,2 -1.8,1.3 -1.6,1.5 -2,0.8 -3.1,-0.5 -3.2,0 -3,-1.2 -2.9,0.4 -2.9,0.6 -2.7,1.2 -2.8,0.7 -2.7,0.4 -2.6,-0.1 -2.4,-1.2 -2.3,-1.4 -3.3,-0.2 -3.3,-0.8 -1.8,-0.1 -1.5,-1 -1.7,0.2 -1.7,0.5 -0.8,-2.8 -2.5,-1.2 -2.6,-0.7 -2.8,-0.4 -2.6,0.9 -0.7,3 -1.6,2.6 -2,-0.5 -2,-0.1 -2,0.1 -1.9,0.8 -1.8,-1 -2,-0.4 -1.9,-0.6 -2,-0.3 -3,1.3 -3.2,0 -2.6,1.9 -3.1,1.1 -1.4,0 -2.9,-1.6 -3,-1.4 -3.3,-0.7 -3,-1.4 -2.1,-0.1 -2.1,0.3 -2.2,0 -2.1,0.3 -2.6,-1.4 -2.5,-1.4 -2.4,-1.9 -1,-2.9 -2.4,-0.7 -2.5,-0.5 -2.5,-0.4 -2.5,0.5 -1.8,0 -1.7,-0.4 -1.8,-0.3 -1.8,-0.1 -2.9,-1.4 -2.8,-1.7 -2.4,0.8 -2.4,0.7 -2.6,-0.2 -2.4,0.8 -2.6,-0.6 -2.6,-0.2 -2.3,1.5 -2.5,0.8 -1.3,1.6 -1.5,1.2 0.6,2.9 0.8,2.8 -8.5,0 -2.1,1.6 -2.8,0.2 -2.4,-1 -2.6,0 -2.7,-1.4 -2.7,-1.2 -3,-0.4 -3,0.2 -2.1,0.6 -1.8,1.2 -1.9,1.2 -1.3,1.8 -1.6,0.9 -0.9,1.6 -1.3,1.3 -0.4,1.8 2.2,2 2,2.3 1.5,0 -0.5,1.7 -1.2,1.3 -1.2,1.3 -1.4,1 0,4.5 1.7,1.6 1.4,1.8 -2.9,-0.5 -3,0.2 -1.7,-0.8 -1.8,-0.3 -1.8,-0.4 -1.8,-0.4 -2.9,-0.5 -2.8,-0.7 -2.8,-0.9 -2.8,-0.5 -2.7,-1.5 -3,-1 -1.6,-1.1 -1.2,-1.4 1.3,-2.1 2.1,-1.3 1.6,-0.7 1.5,-1 -3.1,0 2.5,-1.4 2.6,-1.2 0,-4.5 -3.2,-0.8 -3.2,-0.5 -3.1,-0.9 -3.3,0 -1.7,-2.9 -2.5,-2.2 -5.7,0 -1.4,-2.5 1.7,-0.4 1.7,-0.8 -1.4,-1.4 -1.1,-1.6 -1.1,-1.6 -1.5,-1.3 -2,0.9 -2.1,-0.2 -1.8,-1 -1.8,-1.1 -1.6,-1.7 -0.6,-2.2 1.5,-2.7zM1228.6,197.6l4.2,-2.5 5.1,1.1 0.6,1.7zM1319.3,149.4l2.4,0.5 1.8,1.7 3.3,0.6 3,1.6 3.4,-0.4 3.1,-1.5 -1.2,-1.4 -1.1,-1.4 -1.7,-0.5 -1.7,-0.6 1,-2.1 0.4,-2.2 3.1,-0.2 2.7,-1.4 2.9,-1 2.6,-1.6 2.6,-1.8 3.1,-1 3.1,-0.5 3.1,0 3.3,-0.7 3,1.4 2.9,-1.3 3,-0.9 -1.8,0.5 -1.8,-0.3 -1.8,-0.3 -1.7,-0.7 -2.5,1.9 -3.1,-0.7 -2.8,0.9 -2.7,1.1 -2.5,1.8 -3.2,-0.2 -2.8,-0.7 -3,0.1 -3,1.1 -3,1 -2.5,2.1 -2.9,1.4 -1.5,1.7 -1.6,1.6 -1.7,1.7zM1442.5,128.2l14.2,-5.6 14.2,7 -14.2,1.4zM1561.6,138.1l22.6,0 14.2,1.4 -22.7,3.4zM1679.2,150.8l4.2,-1.4 0,1.7zM663.2,149.4l7.1,0.5 -7.1,1.2zM663.2,156.7l2,-0.3 1.8,0.7 1.9,-0.4 1.9,-0.1 2,0.4 1.4,1.4 1.9,0.8 1.2,1.5 2.8,0.7 2.8,0.8 2.8,1.2 3,-0.8 1.6,1.3 1.8,1 -1.7,0.9 -1.4,1.3 -1.4,1.2 -1.7,0.8 -3.1,0.3 -2.7,-1.2 -2.9,-0.8 -2.7,-1.1 -1.9,0 -1.7,-0.8 -2,-0.1 -1.5,-1.4 -1.9,2.1 -2.3,1.6zM1575.7,197.9l0.7,1.7 1.1,1.6 1.1,1.5 0.8,1.7 0.4,1.7 0,1.8 -0.3,1.8 -0.4,1.7 -0.9,1.7 -1.1,1.5 -0.7,2 0.7,1.9 2.9,1.4 -2.1,0.7 -2.2,0.7 -0.3,-1.8 -0.2,-1.7 0.2,-1.8 -0.2,-1.8 0,-2.1 -0.5,-2.1 0.3,-2.2 0.7,-2zM1614,208.6l2,-0.6 -1.2,1.7zM1604.1,217.9l2.2,-0.8 -1.4,1.6zM1591.3,223.3l3.7,-0.9 -2.3,1.7z" fill="#54ac5c" stroke="#54ac5c" stroke-width="2.2"/>
<path d="M1306.5,215.6l0.4,-1.8 1.3,-1.3 0.9,-1.6 1.6,-0.9 1.3,-1.8 1.9,-1.2 1.8,-1.2 2.1,-0.6 3,-0.2 3,0.4 2.7,1.2 2.7,1.4 2.6,0 2.4,1 2.8,-0.2 2.1,-1.6 8.5,0 -0.8,-2.8 -0.6,-2.9 1.5,-1.2 1.3,-1.6 2.5,-0.8 2.3,-1.5 2.6,0.2 2.6,0.6 2.4,-0.8 2.6,0.2 2.4,-0.7 2.4,-0.8 2.8,1.7 2.9,1.4 1.8,0.1 1.8,0.3 1.7,0.4 1.8,0 2.5,-0.5 2.5,0.4 2.5,0.5 2.4,0.7 1,2.9 2.4,1.9 2.5,1.4 2.6,1.4 2.1,-0.3 2.2,0 2.1,-0.3 2.1,0.1 3,1.4 3.3,0.7 3,1.4 2.9,1.6 -1.9,1.8 -2.6,0.4 -0.5,1.8 -0.1,1.9 -1.7,-0.8 -1.8,-0.3 -1.7,0.8 -1.9,0 -0.7,2.7 -0.7,2.7 -2.4,0.6 -2.4,0.2 -0.3,2.9 -1.1,2.7 -0.3,2.3 -1.4,-1.4 -2,-0.3 -3,-0.8 -3.1,0.4 -3.1,0 -3,-0.7 -1.7,0 -1.7,0.5 -1.7,0.6 -1.8,0.1 -1.8,0.4 -1.8,0.1 -0.3,0.8 -2.7,1.3 -2.7,1.3 -2.8,1.1 -2.7,-1.6 -3,-1.2 0.3,-2.9 -1.5,-0.8 -1.6,-0.6 -8.5,0 -1.5,-1 -1.3,-1.2 -2,-0.7 -2.1,0.1 -1.6,-1.4 -1.1,-1.7 -1.9,0.5 -1.9,-0.1 -1.8,0.7 -1.8,0.6 0,10.4 -2.9,-1.2 -2.8,-1.6 -3.1,1.1 -1.1,-2.5 -1.3,-1.5 -1.8,-0.7 -1.8,-0.6 -1.3,-1.4 1.9,-0.9 2.9,-1.6 3.4,-0.3 -1.4,-2 0.8,-2.3 -2.4,-0.1 -2.4,-0.4 -3.3,0.6 -3.2,0.8 -1.5,0 -2,-2.3z" fill="#dcf0df" stroke="#dcf0df" stroke-width="2.2"/>
<path d="M1332,234.5l0,-10.4 1.8,-0.6 1.8,-0.7 1.9,0.1 1.9,-0.5 1.1,1.7 1.6,1.4 2.1,-0.1 2,0.7 1.3,1.2 1.5,1 8.5,0 1.6,0.6 1.5,0.8 -0.3,2.9 3,1.2 2.7,1.6 2.8,-1.1 2.7,-1.3 2.7,-1.3 1.1,1.5 1.7,0.6 1.3,1.3 1.3,1.1 -3.2,1 -3.3,0.4 -1.6,-0.8 -1.8,-0.6 -1.2,1.5 -1.1,1.6 -3.1,0.9 1.5,1.7 1.1,1.9 -1.5,2.3 -1.8,-0.2 -1.8,-0.4 -1.4,-1.2 -1.7,-0.6 -1.1,-1.4 -1.5,-1 -1.7,-1.4 -2.3,-0.2 -1.7,-1.3 -1.4,-1.6 -2.9,-0.9 -2.8,-1.4 -2.2,-1.9 -2,-2 -1.9,2.2 -2.4,1.7z" fill="#c8e6cc" stroke="#c8e6cc" stroke-width="2.2"/>
<path d="M1323.2,232.8l3.1,-1.1 2.8,1.6 2.9,1.2 2.8,0 2.4,-1.7 1.9,-2.2 2,2 2.2,1.9 2.8,1.4 2.9,0.9 1.4,1.6 1.7,1.3 2.3,0.2 1.7,1.4 1.5,1 1.1,1.4 1.7,0.6 1.4,1.2 -1.7,0.4 -1.8,0.1 -1.3,1.1 -0.9,1.5 -2.9,0.9 -2.2,2 -2.1,-0.6 -2.2,-0.3 -0.2,-2.8 -2.3,0 -1.7,-2.2 -2.6,-0.9 -1.8,-1.5 -2.4,0.1 -2.5,0.8 -2.6,-0.3 -2.2,1.3 -2.3,0.7 0,-4.8 -2.6,-1.4 0.2,-1.7 0.7,-1.7 -0.6,-1.7z" fill="#dcf0df" stroke="#dcf0df" stroke-width="2.2"/>
<path d="M1374.2,231.7l0.3,-0.8 1.8,-0.1 1.8,-0.4 1.8,-0.1 1.7,-0.6 1.7,-0.5 1.7,0 3,0.7 3.1,0 3.1,-0.4 3,0.8 2,0.3 1.4,1.4 -2.4,1.6 -2.7,0.9 -2.1,0.6 -2.2,0.3 -2.6,1.1 -2.8,0.6 -1.7,1.3 -1.9,1.2 -2.7,0 -2.6,0.4 -2.6,-0.1 -2.6,-0.6 1.4,-1.7 3.3,-0.4 3.2,-1 -1.3,-1.1 -1.3,-1.3 -1.7,-0.6z" fill="#dcf0df" stroke="#dcf0df" stroke-width="2.2"/>
<path d="M1365.4,246.1l1.5,-2.3 -1.1,-1.9 -1.5,-1.7 3.1,-0.9 1.1,-1.6 1.2,-1.5 1.8,0.6 1.6,0.8 -1.4,1.7 2.6,0.6 2.6,0.1 2.6,-0.4 2.7,0 0.9,1.6 0.6,1.7 1.1,1.5 0.8,1.7 -2.2,0.9 -2.2,0.9 -2.3,-0.5 -2.4,0.1 -0.1,-1.7 -0.5,-1.7 -1.7,-0.3 -1.7,0 -0.8,1.4 -2,1.2 -2.1,-0.3z" fill="#dcf0df" stroke="#dcf0df" stroke-width="2.2"/>
<path d="M1346.7,250.6l2.2,0.3 2.1,0.6 2.2,-2 2.9,-0.9 0.9,-1.5 1.3,-1.1 1.8,-0.1 1.7,-0.4 1.8,0.4 1.8,0.2 2.2,0 2.1,0.3 2,-1.2 0.8,-1.4 1.7,0 1.7,0.3 0.5,1.7 0.1,1.7 2.4,-0.1 2.3,0.5 2.2,-0.9 2.2,-0.9 -2.4,-0.2 -2.3,0.7 -2.2,0.8 -2.2,1 -1,3 -0.4,3.2 -1.7,1.4 -1.7,1.4 -1.2,1.7 -0.8,1.9 -2.1,0.8 -2.3,-0.2 -1.7,1.5 -2.1,0.8 -0.3,2.8 -2.2,2 -2.9,0.7 -3,0.1 -2.7,-1.4 -2.2,-0.9 -2.3,-0.2 1.3,-1.5 1.2,-1.6 -0.7,-1.6 -0.9,-1.4 -0.8,-1.6 -1,-1.4 0,-3.6 0.5,-2z" fill="#f3f8f3" stroke="#f3f8f3" stroke-width="2.2"/>
<path d="M1345.9,267l2.3,0.2 2.2,0.9 2.7,1.4 3,-0.1 2.9,-0.7 2.2,-2 0.3,-2.8 2.1,-0.8 1.7,-1.5 2.3,0.2 2.1,-0.8 0.8,-1.9 1.2,-1.7 1.7,-1.4 1.7,-1.4 0.4,-3.2 1,-3 2.2,-1 2.2,-0.8 2.3,-0.7 2.4,0.2 2.2,1.2 1.4,2 2.4,0.5 2.2,1.1 -1.5,1 -1.3,1.2 -2.1,0 -2,-0.2 -2,0.2 -1.9,0.6 0.9,2.4 0.5,2.4 2.3,1.4 -0.8,2.1 -1.5,1.6 -2,1.6 -2.2,1.5 -1.5,1.3 -1.4,1.5 -1.3,1.5 -1.5,1.3 -1,1.9 -1.3,1.8 0.3,2.5 0.8,2 1.2,1.7 -3.1,0.5 -3.1,-0.2 -1.7,1.7 -1.4,-1.5 -1.5,-1.4 -1.7,-1.6 -2.9,0.6 -3,-0.4 -8.2,0 0.5,-3.1 2.1,-0.4 1.9,-1 0,-1.4 -1.1,-2.8 -0.9,-1.6 -1.3,-1.2 -1.8,-0.3z" fill="#54ac5c" stroke="#54ac5c" stroke-width="2.2"/>
<path d="M1300.3,239l2.5,0.8 2.3,1.5 2,-1.1 2.2,-0.6 1.1,1.7 1.5,1.4 0.3,2.3 2.7,1.4 2.9,0.8 1.9,-1.2 2.1,0 2.1,-0.8 2.2,0.6 2.3,-0.7 2.2,-1.3 2.6,0.3 2.5,-0.8 2.4,-0.1 1.8,1.5 2.6,0.9 1.7,2.2 2.3,0 0.2,2.8 -1.2,1.7 -0.5,2 0,3.6 1,1.4 0.8,1.6 0.9,1.4 0.7,1.6 -1.2,1.6 -1.3,1.5 1.4,1.1 1.8,0.3 1.3,1.2 0.9,1.6 1.1,2.8 0,1.4 -1.9,1 -2.1,0.4 -0.5,3.1 -1.9,0.2 -1.9,0.2 -1.8,-0.3 -1.8,-0.6 -2.5,-0.2 -2.3,-1 -1.2,-1.8 -1.1,-1.8 -2.7,0.4 -2.4,1.3 -2.2,-1.2 -2.6,-0.2 -2.4,-0.9 -1.8,-1.7 -0.8,-1.6 -0.8,-1.5 -1.2,-1.3 -0.9,-1.5 -1.8,-0.5 -1.6,-0.6 -1.5,1.1 -1.2,-1.3 -1,-1.5 0.4,-1.8 -0.1,-1.9 -2.3,-1.2 -2.6,-0.8 -1.7,-2.8 0.8,-1.7 1.2,-1.4 -1.1,-1.3 -1.1,-1.2 -1,-1.6 -0.7,-1.8 -1.7,-2.3 0.8,-2.4z" fill="#54ac5c" stroke="#54ac5c" stroke-width="2.2"/>
<path d="M1300.3,246.1l0.7,1.8 1,1.6 1.1,1.2 1.1,1.3 -1.2,1.4 -0.8,1.7 1.7,2.8 2.6,0.8 2.3,1.2 0.1,1.9 -0.4,1.8 1,1.5 1.2,1.3 -1.7,0 -1.4,-0.3 -1.3,1.4 -1.2,1.4 -2.5,-0.5 -2.6,0.3 -1.4,-1.2 -1.5,-1 -1.6,-0.9 -1.5,-0.9 -1.4,-1.2 -1.8,-0.5 -1.6,-0.9 -1.4,-1.1 -1.6,-0.7 -1.8,-0.1 -0.5,-1.7 -0.6,-1.7 1.6,-0.6 1.5,-0.8 1.6,-0.6 1.5,-0.8 1.1,-2.7 -0.3,-2.9 1.5,-1.2 1.7,-0.8 1.7,-0.1 1.7,-0.2 1.7,0.2z" fill="#96d29b" stroke="#96d29b" stroke-width="2.2"/>
<path d="M1274.5,250.6l0.8,-1.1 2,-2.3 9.4,0 1.7,-0.1 1.7,-0.3 1.6,-0.9 1.8,0.5 -1.7,0.8 -1.5,1.2 0.3,2.9 -1.1,2.7 -1.5,0.8 -1.6,0.6 -1.5,0.8 -1.6,0.6 -2.6,2.1 -3.1,1 -2.8,-1.1 0.2,-1.7 2,-2.5 -1.7,-1.2 -0.3,-2.2z" fill="#c8e6cc" stroke="#c8e6cc" stroke-width="2.2"/>
<path d="M1272.8,257.7l2.2,-4.3 2,1.2 -2,2.5z" fill="#96d29b" stroke="#96d29b" stroke-width="2.2"/>
<path d="M1270.5,262.7l1.2,-2.5 1.1,-2.5 2,-0.6 -0.9,2.3 0,2.8 -0.9,2.7 -0.5,2.9 -0.5,-2.7z" fill="#54ac5c" stroke="#54ac5c" stroke-width="2.2"/>
<path d="M1272.5,267.8l0.5,-2.9 0.9,-2.7 0.3,-3.4 1.4,1.3 2,-0.2 3.1,-1 2.6,-2.1 0.6,1.7 0.5,1.7 -3,1.5 -3.2,0.5 1.4,1.3 1.4,1.5 -1.4,1.4 -2.1,1 -1.9,1.3z" fill="#96d29b" stroke="#96d29b" stroke-width="2.2"/>
<path d="M1272.2,268.4l1.7,0 1.7,0.3 1.9,-1.3 2.1,-1 1.4,-1.4 -1.4,-1.5 -1.4,-1.3 3.2,-0.5 3,-1.5 1.8,0.1 1.6,0.7 1.4,1.1 1.6,0.9 1.8,0.5 1.4,1.2 1.5,0.9 1.6,0.9 1.5,1 1.4,1.2 2.6,-0.3 2.5,0.5 2.8,1.7 2.6,0 1.4,2.6 1.7,1.4 2,1.1 0.9,2.7 0.8,2.7 2.2,1.4 2.1,1.5 0.8,2.4 1.9,0.6 1.7,1 1.9,-0.2 1.8,-0.8 1.5,2 -1.5,2.6 -0.5,3 -1.9,1.3 -2.2,0.7 -2.4,-0.4 -2,1.2 -2.1,1 -2.2,-0.7 -2.2,0 -2,0.8 -2.3,1.2 -1.7,1.8 -1.7,1.8 -2,0.2 -1.9,-0.3 -2,-0.3 -1.8,-1 -2.8,-0.3 -1.1,1.4 -0.3,1.8 -0.5,-1.8 -1.2,-1.4 -1.8,-1.3 -1,-2 -1.9,-1.5 -1.8,-1.6 -1.4,-1.9 -0.6,-2.4 -0.9,-3.3 -1.1,-3.2 -1.5,-2.4 -2.2,-2.1 -0.6,-2 -1.4,-1.6 -1.9,-2.2 -1.7,-2.3 -1.7,0 0.2,-1.8z" fill="#54ac5c" stroke="#54ac5c" stroke-width="2.2"/>
<path d="M1305.1,268.9l2.5,-2.8 1.4,0.3 1.5,4.2 -2.6,0z" fill="#96d29b" stroke="#96d29b" stroke-width="2.2"/>
<path d="M1294.6,304.8l0.3,-1.8 1.1,-1.4 2.8,0.3 1.8,1 2,0.3 1.9,0.3 2,-0.2 1.7,-1.8 1.7,-1.8 2.3,-1.2 2,-0.8 2.2,0 2.2,0.7 2.1,-1 0.6,1.8 0.2,1.8 0.8,1.7 1.5,1.2 -1.5,1.4 -1.1,1.7 -2.6,1 -1.2,2.6 -2.7,0 -2.5,0.9 -3.1,-0.1 -2.7,1.4 -3,0.6 -2.6,1.5 -2,0.8 -2.2,-0.5 -1.1,-1.9 -1.2,-1.8 0,-3.4z" fill="#c8e6cc" stroke="#c8e6cc" stroke-width="2.2"/>
<path d="M1320.7,297.4l2,-1.2 2.4,0.4 2.2,-0.7 1.9,-1.3 0.5,-3 1.5,-2.6 -1.5,-2 1.7,-1.9 0.6,-2.3 1.1,-2 1.7,2.5 2.4,0.9 2.5,0.2 1.4,1.7 1.7,1.5 -1.6,0.9 -0.7,1.8 -0.6,1.6 -0.8,1.6 -1.2,1.9 -0.8,2 -1.9,1.3 -1.8,1.5 -2.1,1.5 -2.1,1.4 -2.7,0.4 -2.7,0.4 -1.5,-1.2 -0.8,-1.7 -0.2,-1.8zM1332,277.7l1.4,-0.9 -0.5,2z" fill="#c8e6cc" stroke="#c8e6cc" stroke-width="2.2"/>
<path d="M1319.5,282.5l2.1,1.5 0.8,2.4 1.9,0.6 1.7,1 1.9,-0.2 1.8,-0.8 1.7,-1.9 0.6,-2.3 1.1,-2 -0.5,-2.6 -2,2.7 -2.8,1.6 -2.9,0 -2.8,0.3z" fill="#96d29b" stroke="#96d29b" stroke-width="2.2"/>
<path d="M1317.3,281.1l1.1,-3.7 1.1,2.5 0,2.6z" fill="#96d29b" stroke="#96d29b" stroke-width="2.2"/>
<path d="M1366.6,284.2l1.7,-1.7 3.1,0.2 3.1,-0.5 -1.2,-1.7 -0.8,-2 -0.3,-2.5 1.3,-1.8 1,-1.9 1.5,-1.3 1.3,-1.5 1.4,-1.5 1.5,-1.3 2.2,-1.5 2,-1.6 1.5,-1.6 0.8,-2.1 -2.3,-1.4 -0.5,-2.4 -0.9,-2.4 1.9,-0.6 2,-0.2 2,0.2 2.1,0 1.3,-1.2 1.5,-1 1.6,1.7 1.5,1.7 0.4,1.8 -0.7,1.8 1.2,1.5 -0.5,1.8 -0.7,1.8 1.5,0.8 1.5,0.9 1.5,0.8 1.8,0.3 -1.7,1.8 -0.9,2.2 1.8,1.9 2.3,1 2.3,1.3 2.7,-0.3 2.9,0 2.5,1.7 2,0 2.1,0.3 2.1,0.2 2,0.7 0,-4.3 2,2 2.8,1.4 3.1,0.3 3.1,-0.6 0.3,-2.8 3,-1.5 2.4,-2.4 3,1.3 2.7,-1.9 1.9,1.5 1.7,1.6 -0.2,1.7 -0.6,1.7 -2.6,1.5 -2.5,1.6 -1.5,1.5 -0.5,2.1 -1.7,1.1 -1.7,0.9 0.1,2.4 0.2,2.4 -1,1.5 -1.3,1.3 -1,-2.3 -1.2,-2.2 -1.7,-2.2 2.8,-1.7 0.6,-2 -1.9,0.7 -1.9,-0.7 -1.7,-0.7 -1.9,-0.1 0,-2 -2,-0.5 -2,-0.6 -0.7,2.6 -0.1,2.7 1.2,1.8 1,1.9 0.2,2 0.4,1.9 -2.9,1.1 -3,-0.2 -0.6,1.9 -0.9,1.7 -2.3,0.8 -1.9,1.5 -2.4,1.7 -2.7,1 -1.8,2.4 -0.8,2.8 -2.9,1.6 -3,1.5 0.5,3.1 -0.2,3.1 -0.2,2.7 -1.2,2.4 -0.6,1.7 -0.9,1.7 -0.8,2.8 -2.6,1.1 -1.7,2.3 -1.5,-1.2 -1.3,-1.4 -0.5,-1.8 -0.8,-1.6 -0.9,-1.7 0.2,-1.9 -2,-1.8 -0.8,-2.5 -0.8,-2.9 -1.5,-2.7 -0.9,-2.9 -1.1,-2.7 -0.9,-2.8 -0.5,-2.9 -0.3,-2.8 -0.3,-2.8 -1.1,-0.6 -1.9,0.9 -2.1,0.5 -2.5,-1.8 -2,-2.4 1.3,-1.2 1.5,-0.8 -2.8,-1z" fill="#54ac5c" stroke="#54ac5c" stroke-width="2.2"/>
<path d="M1400.3,269.8l0.9,-2.2 1.7,-1.8 3.1,-0.2 2.6,2.1 2.8,1.8 3.3,0.2 2.3,2.3 3,0.1 3,0.2 0,4.3 -2,-0.7 -2.1,-0.2 -2.1,-0.3 -2,0 -2.5,-1.7 -2.9,0 -2.7,0.3 -2.3,-1.3 -2.3,-1z" fill="#dcf0df" stroke="#dcf0df" stroke-width="2.2"/>
<path d="M1425,274.3l2.8,1.4 3.1,0.3 3.1,-0.6 0.3,-2.8 -2.3,-0.5 -2.2,-0.6 -1.9,1.6 -2.4,0.3z" fill="#f3f8f3" stroke="#f3f8f3" stroke-width="2.2"/>
<path d="M1400,323.4l1.3,2.2 2.1,1.4 0.7,1.8 1,1.6 -1.7,2.8 -2.8,0.9 -0.5,-3.2 -0.9,-3 0.1,-2.3z" fill="#dcf0df" stroke="#dcf0df" stroke-width="2.2"/>
<path d="M1434.9,292.6l0.8,-1.7 1.3,-1.3 1,-1.5 -0.2,-2.4 -0.1,-2.4 1.7,-0.9 1.7,-1.1 0.5,-2.1 1.5,-1.5 2.5,-1.6 2.6,-1.5 0.6,-1.7 0.2,-1.7 1.7,1 1.7,1 0.6,2.5 0,2.5 -1.9,2 -0.9,2.6 3.1,0.5 0,2.7 1.1,2.4 3,0.7 2.7,1.3 -1.4,1.5 -1.4,1.6 -1.7,0.6 -1.7,0.5 -1.9,2 -1.5,2.2 0.6,3.2 2.2,2.5 -0.9,2.1 -0.8,2.1 0.3,3.4 2.5,2.2 0.4,1.9 0.8,1.8 -1.6,2.3 -1,2.5 -0.5,-2.9 -0.9,-2.7 -0.9,-1.8 -1.1,-1.5 0.5,-1.9 0.1,-1.9 0,-5.6 -2.5,-0.4 -2.3,0.9 -2.2,0.5 -2.1,0.4 -0.5,-1.8 0.2,-1.7 0,-1.8 -0.3,-1.8 -0.9,-1.9 -1.3,-1.7 -1.4,-1.7z" fill="#f3f8f3" stroke="#f3f8f3" stroke-width="2.2"/>
<path d="M1450.5,298.8l1.5,-2.2 1.9,-2 1.7,-0.5 1.7,-0.6 0.8,2.5 2,0 -0.3,2.4 -0.3,2.4 1.8,0 1.6,-0.6 2.8,1 2.3,-1.8 0.8,1.7 1.5,1.1 0,3.7 2.3,1.4 -0.3,3.1 -1.8,0.3 -1.7,0.2 -1.8,-0.1 -1.8,-0.1 -2,2.2 1.8,2.3 -0.1,2.8 -1.1,-1.4 -1.4,-1.1 -2.9,-0.3 -0.2,-2.3 -2.6,0.3 -0.5,1.7 -0.6,1.7 -1,1.6 -0.2,1.8 0,4.8 1.7,1.7 1.5,1.9 1.4,1.3 0.5,1.8 1.8,0.7 1.4,1.3 -2.9,1.7 -1.2,-1.5 -1.6,-1 -1.4,-1.7 -1.8,-1.7 -1.9,-1.4 0.5,-2.6 0.6,-2.5 1,-2.5 1.6,-2.3 -0.8,-1.8 -0.4,-1.9 -2.5,-2.2 -0.3,-3.4 0.8,-2.1 0.9,-2.1 -2.2,-2.5z" fill="#96d29b" stroke="#96d29b" stroke-width="2.2"/>
<path d="M1457.3,293.5l1.4,-1.6 1.4,-1.5 1,-1.8 1.8,-0.8 2,2.3 1.8,2.2 2.8,0.9 -1,1.5 -0.7,1.6 1.7,1.2 1.9,1 1.6,2.6 2.1,2 1.9,2.3 1.2,2.7 -0.2,1.7 -2.2,0.9 -2.1,1.1 -1.4,-1.4 0.3,-3.1 -2.3,-1.4 0,-3.7 -1.5,-1.1 -0.8,-1.7 -2.3,1.8 -2.8,-1 -1.6,0.6 -1.8,0 0.3,-2.4 0.3,-2.4 -2,0z" fill="#dcf0df" stroke="#dcf0df" stroke-width="2.2"/>
<path d="M1462.9,287.8l1.9,-0.3 1.8,-0.5 2.8,-0.1 2.3,-1.6 2,0.6 2,0.8 2,1.7 1.7,2 -1.9,1 -1.8,1.2 -1.5,2.4 -1.3,2.4 1.8,1.7 0.4,2.5 1,1.4 1,1.5 1.7,0.3 1.4,1.1 0.6,1.8 0.3,1.9 1.2,1.5 0.8,1.8 -0.4,2.6 0.1,2.5 -2.4,2.3 -3,1.4 -2,2.5 -1.7,2.3 -2.8,0.2 -0.6,-1.9 0,-2 -0.8,-1.1 1.9,-1.3 2.3,-0.4 -0.3,-2 2.3,-0.9 2.3,-1.1 0,-6.2 0.2,-1.7 -1.2,-2.7 -1.9,-2.3 -2.1,-2 -1.6,-2.6 -1.9,-1 -1.7,-1.2 0.7,-1.6 1,-1.5 -2.8,-0.9 -1.8,-2.2z" fill="#96d29b" stroke="#96d29b" stroke-width="2.2"/>
<path d="M1464.9,318l0.1,-2.8 -1.8,-2.3 2,-2.2 1.8,0.1 1.8,0.1 1.7,-0.2 1.8,-0.3 1.4,1.4 2.1,-1.1 2.2,-0.9 0,6.2 -2.3,1.1 -2.3,0.9 0.3,2 -2.3,0.4 -1.9,1.3 -2.9,-0.6 -1.4,-1.2z" fill="#dcf0df" stroke="#dcf0df" stroke-width="2.2"/>
<path d="M1457,332.7l1.6,1 1.2,1.5 2.9,-1.7 2.4,1.5 1.2,2.5 0,5.6 0.5,2.4 1.8,1.6 -2,0.2 -1.3,-1.7 -2.1,-0.1 -1.4,-1.3 -1.4,-1.4 -1.1,-1.7 -0.9,-1.9 -0.6,-1.8 -0.2,-1.9zM1483.9,345.4l2.6,-0.3 2.2,-1.2 2.3,-1.2 2.5,-0.7 1.6,-1.8 1.3,-1.9 1.9,-1.7 2.3,-1.1 1.5,-2.2 1.9,-1.8 2.3,1.2 2.4,1.8 2.4,1.8 -1.6,1.5 -1.8,1.1 -6.2,0 -1.3,1.7 -1,1.9 -0.3,2.2 -0.5,2.1 -6.3,0 -2,0.9 -2.2,0.5 -2.9,-1.4z" fill="#54ac5c" stroke="#54ac5c" stroke-width="2.2"/>
<path d="M1443.4,335.2l3.1,0.7 3.1,0.4 2.1,1.9 1.3,2.4 1.3,1.2 1,1.4 1.5,1 1.3,1.2 2.1,1 1.7,1.4 1.9,1.2 2.3,0.6 0.3,2.4 1.6,1.8 1.6,1.1 1.1,1.7 1.4,1.2 1.6,1.1 0,8.5 -2,0 -2.2,-0.9 -2.7,-2.1 -3,-1.6 -1.9,-2.6 -2.4,-2.1 -1.6,-2 -1.2,-2.3 -1.1,-1.8 0.1,-2.2 -1.5,-1.4 -1.2,-1.6 -2.1,-2.5 -2.7,-1.8 -0.8,-2.1 -1.7,-1.5 -0.8,-2.1zM1471.4,370.2l2.1,-1.3 2.2,-1 2.3,1.5 2.8,0.2 3.3,0 3.2,-0.6 2.9,0.6 2.8,0.9 2.3,1.2 2.5,1 0,2.8 -1.8,-0.3 -1.7,-0.2 -1.8,-0.4 -1.8,-0.2 -2.1,-0.5 -2.1,-0.2 -2.3,0.3 -2,-1 -1.6,-0.8 -1.9,-0.2 -1.8,-0.3 -1.8,0.2 -1.9,-0.8zM1482.2,346.8l1.7,-1.4 1.1,1.4 2.9,1.4 2.2,-0.5 2,-0.9 6.3,0 0.5,-2.1 0.3,-2.2 1,-1.9 1.3,-1.7 6.2,0 -0.6,1.8 0,1.8 0.6,2.9 1.3,1.5 1.5,1.3 -1.6,0.7 -1.8,0.1 -0.4,1.7 -0.4,1.7 -1.3,1.6 -1.5,1.2 -0.4,2.4 -0.5,2.4 -0.6,2.3 -4.2,0 -1.6,-0.7 -1.2,-1.3 -2.4,1 -2.5,-0.4 -2.3,-0.5 -2.2,-0.9 0.8,-2.3 -1.4,-2 -0.8,-1.7 -1.4,-1.1 -0.6,-2.8zM1510,358.9l1.2,-1.8 0.5,-2 0.7,-2 0.4,-2.1 1.4,-1.8 1.4,-1.9 2,0.1 1.9,0.1 1.9,0.7 1.9,0.3 2.2,-0.7 2,-1 -0.2,1.7 -1.2,1.4 -2.5,0.6 -2.4,-0.7 -2.5,-1 -2.5,0.8 -2.5,1.4 1.5,2 2.4,0.5 5.1,0 -2.1,0.9 -1.6,1.7 -1.4,0.5 1.4,1.8 1.2,1.9 0.9,1.7 0.8,1.7 -2.3,0.8 -2,-2.2 -0.6,-1.9 -1.1,-1.8 -1.4,2.3 0,5.6 -2.5,0 0,-5.6zM1499.2,374.1l2,0.6 -1.4,1.1zM1502,374.4l2,0.3 -0.8,1.4zM1504.3,375l6.2,-0.6 -1.4,1.4 -4.2,0.6zM1513.1,374.7l8.5,-0.6 -0.3,1.7 -7.9,0zM1510.5,377.5l5.1,1.4 -2.2,0.9zM1523.3,380l2.8,-3.1 1.7,-0.2 -0.3,1.4zM1534.6,353.3l0.9,-7.9 2.5,1.4 -1.9,3.1 1.4,2.8zM1530.4,360l3.4,0 -0.6,1.7 -2.8,-0.3zM1536.1,359.2l7,0.3 0.9,2.2 -6.5,-0.8zM1525.8,355.8l4.6,0.3 -1.4,0.5zM1544.6,353.3l2.2,-0.2 2,-1 2.3,0.6 2.2,0.6 0.3,2.3 0,2.5 1.9,1.1 1.8,1.1 1.6,-0.9 1.5,-1.2 1.5,-1.2 1.1,-1.5 2.7,0 2.7,-0.3 2.2,1.7 2.3,1.4 0,18.4 -3.1,-1 -2.6,-1.9 -2.8,0.9 -0.6,-3.1 2.9,-1.4 -1.4,-1.7 -0.9,-2 -2,-0.2 -1.8,-0.8 -1.5,-1.3 -1.8,-0.8 -1.8,0.6 -1.8,-0.7 -1.6,-0.9 -1.9,0.2 -0.1,-1.9 -0.4,-1.8 -1.9,-2.3 -2.7,-1.4zM1553.9,366.5l1.4,1.4 -1.7,2.3zM1545.4,372.1l1.1,-0.8 -0.2,2.3zM1472.9,355.5l2.5,0 -0.3,4 -2,-2.3zM1478.2,358.3l2,0.6 -1.1,1.1zM1448.8,347.3l1.7,0.9 -0.6,1.1zM1452.7,353.8l2,2 -0.8,0.3z" fill="#96d29b" stroke="#96d29b" stroke-width="2.2"/>
<path d="M1572.9,358.3l2.7,-0.5 2.7,1.1 2.2,1.4 2.3,1.4 2.7,1.6 1,2.9 2.4,1 2.4,0.7 -1.4,2.3 0.7,1.8 0.9,1.6 1,1.8 1.6,1 1.7,0.8 1.8,0.4 1.3,1.4 0.9,1.6 -1.7,-0.3 -1.8,-0.3 -1.8,-0.1 -1.8,-0.1 -1.4,-1.4 -1.6,-1.3 -1.1,-1.6 -1.5,-1.4 -2.2,-0.6 -2.1,-0.8 -0.9,2.3 -1.9,1.4 -1.8,-0.7 -1.8,-0.6 -1.7,0.9 -1.8,0.7zM1593.6,366.8l2.4,-0.5 2.4,0.2 1.2,-1.2 1.3,-1.1 1.6,-0.6 1.6,-0.8 0.8,2.3 -1.6,1.7 -2.1,1.1 -2.9,-0.6 -2.7,1.2zM1600.7,358.3l4.8,2.6 1.4,3.1 -1.4,-0.9zM1611.7,366.5l3.4,3.4 -2,-0.6z" fill="#f3f8f3" stroke="#f3f8f3" stroke-width="2.2"/>
<path d="M1616.8,369.9l2.9,2 -1.5,-0.3zM1621.6,372.4l4.6,2.3 -1.7,-0.3zM1625.6,377.2l3.4,1.4 -2.3,0zM1628.7,374.7l1.7,3.1 -1.1,-0.9zM1630.7,380l2.6,1.5 -1.7,-0.3z" fill="#f3f8f3" stroke="#f3f8f3" stroke-width="2.2"/>
<path d="M1645.4,393.3l1.7,1.4 -1.1,0.6zM1647.1,396.1l1.7,1.4 -1.1,0zM1650,400.6l0.8,0.6 -0.8,0z" fill="#f3f8f3" stroke="#f3f8f3" stroke-width="2.2"/>
<path d="M1638.1,408l4.2,1.7 4.3,4.2 -2.9,-0.9 -4.2,-2.8z" fill="#f3f8f3" stroke="#f3f8f3" stroke-width="2.2"/>
<path d="M1675.8,400.4l3.7,0.2 -0.6,1.7 -2.8,-0.3zM1680,397.5l3.4,-0.8 -1.4,1.7z" fill="#dcf0df" stroke="#dcf0df" stroke-width="2.2"/>
<path d="M1514.8,298.8l2.4,0.4 2.4,-0.1 0,2.7 0.3,2.7 -1.2,1.2 -0.8,1.6 0.5,1.8 0.1,1.9 1.4,1.3 1.6,1.1 1.4,1.3 1.8,0.8 -1.9,-0.9 -1.8,-1.1 -2.3,-1 -2.5,-0.1 -1.1,-1.5 -0.9,-1.6 -0.5,-2 -0.6,-2 0.3,-2 1.1,-1.7zM1519,331.3l2.1,-2.3 2.2,-2.3 3,-1 2.4,-2.1 0.6,1.8 0.3,1.9 1,1.7 1.2,1.4 -0.9,2.6 -1.9,1.9 -2.2,-0.9 -2.1,-1.3 -2.7,-1.1zM1505.7,327.6l6.3,-8.5 -0.9,3.1zM1525.6,315.8l2.8,0 0.9,3.6 -1.8,2.6 -1.4,-2.6zM1519,317.7l3.4,0.9 -0.5,4.2 -2,-1.4zM1523,320.3l1.7,-0.9 -1.1,4.8zM1514.5,312.9l3.1,0.6 -0.8,2.8zM1521.6,321.1l1.1,3.7 -2.2,-0.9z" fill="#96d29b" stroke="#96d29b" stroke-width="2.2"/>
<path d="M1516.2,279.9l2.6,0.6 -3.2,8.5 -1.9,-3.4z" fill="#96d29b" stroke="#96d29b" stroke-width="2.2"/>
<path d="M1544.3,255.1l2.6,-1.5 1.9,-2.4 2.1,-0.2 2.1,-0.4 2.2,-0.1 2.1,0.1 2.3,-2 1.4,-2.8 4.8,0 2.5,-1.9 1.2,-2.9 -0.3,-2.3 0.9,-2.2 1.8,-1.1 1.8,-1.1 0.7,2 0.8,1.9 -0.2,2.4 -0.7,2.4 -0.6,2.3 -1.4,1.9 0,3.1 -1.1,1.4 -1.7,0.6 -3.1,0.8 -2.5,-0.2 -2.3,0.5 -0.6,0.9 -1.7,0.8 -1.1,1.4 -0.9,-1.6 -1.1,-1.5 -3,0.7 -3,0.2 -2.8,0.7 -2.8,0.4zM1541.7,256.5l5.1,-0.3 -1.1,6.3 -3.1,0.5 -1.4,-4.5zM1548.8,255.4l5.7,-0.8 -0.9,2.5 -3.9,1.4zM1570.6,234l0.6,-3 0.8,-2.9 1.1,-2.9 2.1,-2.2 2.3,1.3 2.4,1.2 2.6,1 2.6,0.7 0.5,1.7 -0.9,1.7 -1.7,0.8 -1.8,0.7 -1.8,0.5 -2.6,-0.5 -2.5,-0.9 -1.7,0.3 -1.7,0.2zM1535.2,277.1l1.7,-1.7 -1.1,0.9z" fill="#54ac5c" stroke="#54ac5c" stroke-width="2.2"/>
<path d="M1531.2,253.7l0.3,-2.8 0.3,-2.8 0.2,-1.9 0.4,-1.8 2.2,-1.2 2.3,-1.1 1.5,2.4 1.6,2.2 0,4.2 -2,0.9 -1.9,1.1 -2.4,0.7zM1531,256.8l1.9,-0.3 -0.8,0.9z" fill="#54ac5c" stroke="#54ac5c" stroke-width="2.2"/>
<path d="M1422.1,212.3l3.1,-1.1 2.6,-1.9 3.2,0 3,-1.3 2,0.3 1.9,0.6 2,0.4 1.8,1 1.9,-0.8 2,-0.1 2,0.1 2,0.5 1.6,-2.6 0.7,-3 2.6,-0.9 2.8,0.4 2.6,0.7 2.5,1.2 0.8,2.8 1.7,-0.5 1.7,-0.2 1.5,1 1.8,0.1 3.3,0.8 3.3,0.2 2.3,1.4 2.4,1.2 2.6,0.1 2.7,-0.4 2.8,-0.7 2.7,-1.2 2.9,-0.6 2.9,-0.4 3,1.2 3.2,0 -2.8,1.8 -0.6,3.2 2.9,0.4 2.8,0.5 1.7,0.4 1.8,0.5 1.6,0.8 1.4,1.1 -2.4,-0.2 -2.3,0.4 -2.4,0.1 -2.2,0.8 -1.6,1.3 -1.8,0.9 -2.1,0.1 -1.6,1.4 -1.4,1.3 -1.3,1.4 -1.6,1.1 -2,-0.1 -2.7,1.1 -2.4,1.7 -1.8,-0.1 -1.8,0.2 -1.8,0.3 -1.9,0 -1.7,0.8 -1.6,0.8 -1.7,0.7 -1.8,0.4 -3,-1.1 -2.2,-2.2 -3.1,0.4 -3.1,0.1 -3.2,0.6 -3.3,-0.4 -3.2,-0.4 -3.3,-0.1 -2.2,-1.9 -1.8,-2.3 -3,0.2 -2.8,-1.1 -3.1,0.1 -2.4,-2.1 -0.3,-2.4 0,-2.4 -2.2,-0.7 -2.1,-1.2 -1.9,-1.3 -2,-1.3z" fill="#dcf0df" stroke="#dcf0df" stroke-width="2.2"/>
<path d="M1385.6,246.1l-0.8,-1.7 -1.1,-1.5 -0.6,-1.7 -0.9,-1.6 1.9,-1.2 1.7,-1.3 2.8,-0.6 2.6,-1.1 2.2,-0.3 2.1,-0.6 2.7,-0.9 2.4,-1.6 0.3,-2.3 1.1,-2.7 0.3,-2.9 2.4,-0.2 2.4,-0.6 0.7,-2.7 0.7,-2.7 1.9,0 1.7,-0.8 1.8,0.3 1.7,0.8 0.1,-1.9 0.5,-1.8 2.6,-0.4 1.9,-1.8 1.4,0 0.6,1.9 2,1.3 1.9,1.3 2.1,1.2 2.2,0.7 0,2.4 0.3,2.4 2.4,2.1 3.1,-0.1 2.8,1.1 3,-0.2 1.8,2.3 2.2,1.9 3.3,0.1 3.2,0.4 3.3,0.4 3.2,-0.6 3.1,-0.1 3.1,-0.4 2.2,2.2 3,1.1 1.8,-0.4 1.7,-0.7 1.6,-0.8 1.7,-0.8 1.9,0 1.8,-0.3 1.8,-0.2 1.8,0.1 2.4,-1.7 2.7,-1.1 2,0.1 1.6,-1.1 1.3,-1.4 1.4,-1.3 1.6,-1.4 2.1,-0.1 1.8,-0.9 1.6,-1.3 2.2,-0.8 2.4,-0.1 2.3,-0.4 2.4,0.2 -1.4,-1.1 -1.6,-0.8 -1.8,-0.5 -1.7,-0.4 -2.8,-0.5 -2.9,-0.4 0.6,-3.2 2.8,-1.8 3.1,0.5 2,-0.8 1.6,-1.5 1.8,-1.3 0.9,-2 0,-4.8 2.4,-0.8 2.5,0.5 2.5,0 2.5,-0.3 1.7,0.9 1.9,0 1.5,1.4 2,-0.3 0.9,2.2 1.1,2.1 1.3,2 0.9,2.2 1.7,1.7 2.3,0.7 2.2,0.8 2.3,-0.4 0.7,1.6 0.8,1.5 2.6,0.3 2.7,-0.3 2.4,-1.3 2.7,-0.1 -1.2,2.1 -0.5,2.5 -1.5,2 -1.6,1.8 -2.3,0.7 -2.5,0.2 -0.5,1.9 -0.3,2 -0.2,1.8 -0.7,1.6 -2.3,-2 -2.5,1.8 -2.8,1.1 -3.2,0.5 -2.2,0.7 -2.1,1 -1.3,2 -1.7,1.7 -2.6,0.5 -2.5,0.6 -2,0.7 -1.7,1.3 0,-3.1 1.7,-2.6 -1.1,1.6 -1.8,0.8 -1.9,0.2 -1.7,0.5 -2.7,1.2 -2.4,1.4 1.8,1.7 1.6,1.9 2.5,-0.4 2.6,-0.4 2.3,1.4 2.8,0.3 -2.7,1.8 -3,1.3 -2,1.3 -1.7,1.8 1.9,1.4 1.2,2 0.6,1.7 1,1.5 1.5,1 1.2,1.4 0.3,2.6 -1.5,1 -1.7,0.7 1.7,0.7 1.7,0.4 -0.7,2.2 -0.7,2.3 -2.4,2.1 -1.8,2.7 -2.1,2.5 -1.6,2.8 -2.7,1.5 -2.1,2.2 -2,0.5 -1.9,0.7 -2,0.7 -1.8,0.9 -2.2,0.6 -2.7,1.5 -3,0.5 -1.6,1.8 -1.8,1.6 -0.4,-2 -1.3,-1.4 -4.8,0 -1.7,-2 -2,-1.7 -2,-0.8 -2,-0.6 -2.3,1.6 -2.8,0.1 -1.8,0.5 -1.9,0.3 -1.8,0.8 -1,1.8 -2.7,-1.3 -3,-0.7 -1.1,-2.4 0,-2.7 -3.1,-0.5 0.9,-2.6 1.9,-2 0,-2.5 -0.6,-2.5 -1.7,-1 -1.7,-1 -1.7,-1.6 -1.9,-1.5 -2.7,1.9 -3,-1.3 -2.4,2.4 -3,1.5 -2.3,-0.5 -2.2,-0.6 -1.9,1.6 -2.4,0.3 -0.5,0.9 -2,-2 -3,-0.2 -3,-0.1 -2.3,-2.3 -3.3,-0.2 -2.8,-1.8 -2.6,-2.1 -3.1,0.2 -1.8,-0.3 -1.5,-0.8 -1.5,-0.9 -1.5,-0.8 0.7,-1.8 0.5,-1.8 -1.2,-1.5 0.7,-1.8 -0.4,-1.8 -1.5,-1.7 -1.6,-1.7 -2.2,-1.1 -2.4,-0.5 -1.4,-2zM1481.4,296.9l5.1,-2.3 1.4,1.1 -4.3,4z" fill="#1b561b" stroke="#1b561b" stroke-width="2.2"/>
<path d="M1496.9,412.5l2,-0.8 1.9,-0.7 1.5,-1.5 2,-0.7 3.3,0.2 2.9,-1.6 2,0 1.8,-0.9 1.7,-1 1.6,-0.9 1.8,-2.3 0.5,-2.8 1.8,0.2 1.9,0.1 1.1,-3.1 1.6,-2.9 2.7,-1.9 2.1,-0.8 2.1,-0.9 1.7,1.4 1.7,1.4 4,0 0.9,-2.3 0.2,-2.5 1.5,-0.9 1.1,-1.3 2.3,-0.2 2.2,-0.7 0.3,-2.2 1.5,1 1.6,0.8 1.9,0.2 1.8,0.2 5.1,0 -0.8,2.2 -1.5,1.8 -0.9,1.9 -0.5,2 2.9,1.4 2.8,1.7 2.3,2.1 2.5,1.9 2.1,0.2 2.1,0.1 1,-1.7 0.3,-1.9 0.7,-1.7 0.6,-1.8 0,-6.5 1.2,-2.8 1.3,-2.8 1.7,2.4 1.2,2.6 -0.3,2.8 1.1,2.6 2.4,0.3 1.9,1.4 -0.1,2.1 0.4,2.1 0.5,1.7 0.8,1.6 0.8,1.7 0.1,1.8 1.6,1 1.7,0.7 1.4,1.3 1.8,0.4 0.9,1.5 0.6,1.6 0.2,1.7 1.2,1.4 1.9,1.6 1.8,1.8 0.9,1.9 2.1,0.6 1.5,1.2 1.4,1.3 0.7,1.9 0.3,1.9 0.9,1.8 -0.2,2.1 -0.9,2 -0.9,2 0.7,2.2 -0.3,2.2 -0.8,1.9 -1,1.8 -1.3,1.7 -1.1,1.7 -1,1.7 -0.6,1.9 -1,1.8 -1.1,1.6 -0.1,2.2 -0.5,2.1 -3.1,0.9 -3.1,0.5 -2,1.7 -2.3,1.4 -2.2,-1.4 -2.3,-0.9 -1.8,0.6 -1.6,0.8 -2,-0.3 -1.9,0.5 -1.6,-1.1 -1.6,-1.1 -1.9,-1.8 -1.8,-1.8 -1.5,-1.9 -1.9,-1.5 -1,-2.2 -0.4,-2.3 -0.4,1.7 -0.2,1.7 -0.1,-3.1 -0.2,-3.1 -0.6,1.6 -1.1,1.5 -1.3,1.3 -1.8,0.6 -1.4,-0.2 -1.3,-3.1 -2.4,-2.3 -2.3,-0.3 -2.2,-0.8 -2.2,-1 -1.8,-1.6 -1.6,0.8 -1.7,0.1 -1.7,0.5 -1.8,0 -2,-0.1 -2,-0.3 -2,0.6 -1.9,0.7 -3,0.6 -2.7,1.4 -1.4,2.5 -9.9,0 -2.7,1.8 -3,1.3 -1.9,-0.7 -1.9,-0.8 -2,-0.6 -2.1,0.4 0.7,-1.6 0.3,-1.7 0.3,-1.7 0.1,-1.8 -1.4,-2.6 -0.6,-3 -0.2,-1.9 -0.9,-1.6 -0.9,-1.7 -0.3,-1.8 -1.9,-2.6 -0.6,-3.1 0.8,-2.8 -0.1,-2.6 0.4,-2.5zM1583.4,465.8l9.9,0.5 -0.6,6.5 -4.2,1.2 -3.4,-3.1zM1560.4,451.7l4,0.3 -1.4,0.8zM1542.6,383.1l3.4,0 -1.4,1.5z" fill="#1e6928" stroke="#1e6928" stroke-width="2.2"/>
<path d="M1662.7,448l2.8,0.9 1.8,2.2 1.4,1.9 2,1.2 2.2,0.4 2.3,0.4 2.3,0.7 1.7,1.6 -2.4,2.4 -1.9,2.7 -1.4,1.3 -1.5,1.3 -0.9,1.6 -1,1.7 -0.8,-2.2 -0.6,-2.3 -1.3,-1.1 -1.6,-0.9 1.9,-1.4 0.7,-2.2 -0.1,-2.3 -1,-2 -1.2,-1.5 -0.9,-1.6 -0.9,-1.7zM1662.7,465.2l1.9,1.8 2.4,1 -0.5,1.8 -1.1,1.3 -1.1,1.4 -1.3,1.2 -2.3,0.9 -2.2,1.3 -0.6,2.4 -1.1,2.1 -2.9,1.3 -3.1,0.7 -2.9,-0.9 -2.7,-1.3 1.6,-1.2 1.7,-0.8 1.6,-1.2 0.7,-1.9 1.4,-1.7 2.1,-0.8 1.9,-1.1 1.7,-1.2 0.8,-1.6 1.3,-1.3 1.5,-0.9z" fill="#54ac5c" stroke="#54ac5c" stroke-width="2.2"/>
<path d="M1583.4,312.6l0.8,0.3 -0.5,0.9zM1564.4,323.9l0.8,0.3 -0.5,0.6zM1603.2,329.9l0.9,0.2 -0.6,0.6zM1621.4,331.3l0.8,0.2 -0.6,0.6zM1657.9,330.7l1.1,0.3 -0.5,0.5zM1663.6,346.8l0.5,0.5 -0.5,0.3zM1554.2,329.6l0.8,0.3 -0.5,0.8zM684.2,389.1l1.7,0.3 -0.9,0.8zM676.5,410.5l0.8,0.3 -0.5,0.3zM776,375.8l1.1,0.3 -0.6,0.8zM778.8,378.1l0.9,0.3 -0.3,0.5zM749.1,400.4l1.4,0.2 -0.6,0.9zM743.9,397.8l0.6,0.3 -0.3,0.6zM668.3,391.3l0.5,0 -0.2,0.3z" fill="#f3f8f3" stroke="#f3f8f3" stroke-width="2.2"/>
<path d="M1156.6,250l1.7,-0.2 2.1,0.8 2.4,0 2.3,0.1 2,1.3 0.5,2.3 0.9,2.2 0.8,1.8 0.6,1.9 -1.6,0.9 -1.7,0.6 -1.6,0.9 -1.6,1 -2.1,1.5 -2.2,1.3 -2.7,0.9 -2.8,0.1 -2.6,1.1 -2.4,1.6 0,2.8 -12.7,0 2.3,-1.6 2.5,-1.2 2.2,-1.1 2.1,-1.2 1.3,-2.6 -0.8,-2.7 1.3,-3.1 2.4,-2.3 2.5,-0.7 2.3,-1.3 0.2,-3.1z" fill="#c8e6cc" stroke="#c8e6cc" stroke-width="2.2"/>
<path d="M1135.9,272.9l12.7,0 0,4.8 -9.3,0 0,7 -2.8,1.4 0,4.8 -11.4,0 -0.3,-1.8 0.5,-1.9 1.1,-1.4 1.6,-1.1 1.2,-1.6 0.8,-2 0.6,-2 1.6,-1.4 1.7,-2.5z" fill="#c8e6cc" stroke="#c8e6cc" stroke-width="2.2"/>
<path d="M1167.1,252l3.2,-0.7 3,-1.3 2.2,-0.4 2.2,-0.7 1.9,-1.2 2.2,-0.8 15.9,0 -1,2.6 0.1,2.8 -0.8,1.8 -1.4,1.3 2.4,2.3 1.8,2.8 0.8,2.5 0.6,2.6 0.9,1.8 -0.2,2.1 0.3,2 0.2,1.9 -1.2,1.7 -0.3,2 0.5,2.2 1.2,1.8 2.7,2 3,1.6 -2.4,1.2 -2.4,1.4 -2.6,0.4 -2.7,0.7 -1.1,2.5 -1.7,2.1 -2.7,1 -2,2 -2.2,0.6 -2.3,0.3 -2.5,0.5 -1.6,-1.1 -1.5,-1.3 -1.5,-1.3 -1.4,-1.4 -2,-1.7 -1.8,-1.8 -2.4,-1.2 -2.3,-1.2 -1.8,-1.9 -2,-1.7 -2.3,-1.2 -2.4,-1.1 -2.8,-1.9 -3.3,-0.3 -2.5,-2.2 -2.5,-2.1 0,-3.9 2.4,-1.6 2.6,-1.1 2.8,-0.1 2.7,-0.9 2.2,-1.3 2.1,-1.5 1.6,-1 1.6,-0.9 1.7,-0.6 1.6,-0.9 -0.6,-1.9 -0.8,-1.8 -0.9,-2.2z" fill="#c8e6cc" stroke="#c8e6cc" stroke-width="2.2"/>
<path d="M1197.7,246.9l2.2,-0.6 2.3,-0.2 2.3,0.6 -0.5,2.2 -0.9,2 -0.7,2.8 2.1,2 1.4,1.7 0,2.2 -1.9,0.7 -1.5,1.3 -0.2,2 -0.1,2 -2,0 -0.6,-2.6 -0.8,-2.5 -1.8,-2.8 -2.4,-2.3 1.4,-1.3 0.8,-1.8 -0.1,-2.8z" fill="#c8e6cc" stroke="#c8e6cc" stroke-width="2.2"/>
<path d="M1205.9,257.4l2.6,0.7 2.6,0.6 2.7,0.3 2.6,0.6 1.4,2.9 1.8,1.9 2.4,1 2.6,0.7 2.5,-0.5 1.3,-1.3 1.6,-0.7 0,-4.2 2.9,-0.4 2.7,-0.8 2.5,0.5 2.2,1 2.2,1.1 2.2,1.1 -0.5,1.6 -0.3,1.7 0.2,1.7 0,1.8 0,20.3 0,5.6 -2.8,0 0,1.4 -3.3,-0.6 -3.4,-0.4 -1.6,-0.7 -1,-1.5 -1.1,-1.4 -0.7,-1.6 -2.9,-1.3 -3.1,-0.7 -3,-1 -2.6,-2.1 -2.8,1.4 -2.3,1.2 -3.2,-1.1 -3,-1.5 -3,-1.6 -2.7,-2 -1.2,-1.8 -0.5,-2.2 0.3,-2 1.2,-1.7 -0.2,-1.9 -0.3,-2 0.2,-2.1 -0.9,-1.8 2,0 0.1,-2 0.2,-2 1.5,-1.3 1.9,-0.7z" fill="#c8e6cc" stroke="#c8e6cc" stroke-width="2.2"/>
<path d="M1244.7,261.9l2.8,0.5 2.5,1.3 2.7,-0.3 2.8,0.5 2.8,-1.1 2.9,-0.6 1.8,0.5 1.8,0 5.7,0 1.5,2.3 0.2,2.8 -1.1,2 -0.3,2.2 -1.6,-0.9 -1.8,-0.8 -1,-1.9 -0.7,-2 0,0.8 1.8,1.1 0.5,2 0.2,2 0.9,1.7 0.9,2.5 1.9,2 1.3,2.3 0.7,2.5 0.9,1.6 1.6,0.9 1,1.4 0.5,1.8 -33.8,0 0,-20.3 0,-1.8 -0.2,-1.7 0.3,-1.7z" fill="#54ac5c" stroke="#54ac5c" stroke-width="2.2"/>
<path d="M1244.1,289l33.8,0 0.6,2.2 1.1,2.1 -0.2,2.3 -0.1,2.4 1.9,0.8 1.5,1.4 -2.2,1.5 -2.3,1.4 -0.8,1.8 -0.6,1.9 -0.1,1.9 0,2 -1,2.1 -0.1,2.4 -1.2,2.6 -1.9,2.2 -2,1.4 0.4,2.9 -1,2.7 -1.6,0.9 -1.5,1.1 2.5,1.4 2.3,1.7 0.9,1.5 1,1.4 0.7,1.5 0.8,1.5 -2.7,0.3 -2.6,0.9 -1.5,1.1 -1.7,-0.3 -1.8,0.2 -1.8,0 -1.7,0.4 -0.6,0.5 -2,-1.1 -1.7,-1.4 -2.6,-2.1 -3.3,0.1 -1.4,-1.8 -1.5,-1.6 -1.4,-1.8 -1.7,-1.5 -1.9,-1.7 -1.8,-1.7 -1.2,-1.7 -0.2,-2 -1.7,-2.8 -0.3,-2.5 -0.8,-2.3 -0.8,-1.5 -0.7,-1.6 1.5,-2.7 1.4,-2.7 2.8,0 0,-10.7 0,-1.4 2.8,0z" fill="#c8e6cc" stroke="#c8e6cc" stroke-width="2.2"/>
<path d="M1276.7,310.7l0,-2 0.1,-1.9 0.6,-1.9 0.8,-1.8 2.3,-1.4 2.2,-1.5 0.6,2 0.6,2 1.6,1.3 1.2,1.8 1.8,2.4 2.8,1.2 2.6,1.7 1.5,2.6 -1.9,0.6 -1.8,-1.3 -1.8,-1.2 -1.2,-2 -2,-0.9 -3.1,-0.3 -2.9,-0.8 -1.9,0.9z" fill="#f3f8f3" stroke="#f3f8f3" stroke-width="2.2"/>
<path d="M1276.7,310.7l2.1,-0.5 1.9,-0.9 2.9,0.8 3.1,0.3 2,0.9 1.2,2 1.8,1.2 1.8,1.3 -1.7,2.8 1.5,1 1.9,0.4 -0.3,2.2 2.4,0.9 0.7,2.5 2.2,0.4 2.1,0.8 2.1,0.7 2.1,0.9 2.8,0 -2.2,2.1 -2.5,1.7 -1.4,2.8 -2.4,1.9 -2.1,0.6 -2.2,0.4 -2.1,0.4 -2.1,0.9 -2.8,0.8 -2.1,0.9 -2.2,0.5 -2.1,0.1 -2.1,-0.7 -2.8,-1.1 -2.9,-1.1 -0.3,-0.6 -0.8,-1.5 -0.7,-1.5 -1,-1.4 -0.9,-1.5 -2.3,-1.7 -2.5,-1.4 1.5,-1.1 1.6,-0.9 1,-2.7 -0.4,-2.9 2,-1.4 1.9,-2.2 1.2,-2.6 0.1,-2.4z" fill="#c8e6cc" stroke="#c8e6cc" stroke-width="2.2"/>
<path d="M1295.4,315.2l0.6,3.4 -0.8,1.4 -3.4,-1.4 1.7,-2.8z" fill="#f3f8f3" stroke="#f3f8f3" stroke-width="2.2"/>
<path d="M1296,318.6l2,1.2 1.4,1.9 1.9,-0.3 1.8,-0.3 1.9,-0.5 1.5,-1.2 3,0 2.9,-0.7 2.9,-0.7 2.8,-0.8 -0.5,2.1 0.8,2.1 -1.2,1.6 -1,1.7 -0.7,1.8 -0.5,1.9 -1.8,2.4 -2.2,1.9 -0.4,2.9 -1.3,2.7 -1,1.8 -0.9,1.9 -1.8,1.2 -1.9,0.7 -2.1,1 -1.8,1.5 -1.7,1.5 -1.5,1.7 -1.2,1.7 -1.4,1.5 -1.3,1.6 -1.5,1.4 -1.7,-2.3 0,-10.4 0,-3.1 2.8,-0.8 2.1,-0.9 2.1,-0.4 2.2,-0.4 2.1,-0.6 2.4,-1.9 1.4,-2.8 2.5,-1.7 2.2,-2.1 -2.8,0 -2.1,-0.9 -2.1,-0.7 -2.1,-0.8 -2.2,-0.4 -0.7,-2.5 -2.4,-0.9 0.3,-2.2z" fill="#f3f8f3" stroke="#f3f8f3" stroke-width="2.2"/>
<path d="M1269.7,339.2l2.6,-0.9 2.7,-0.3 0.3,0.6 2.9,1.1 2.8,1.1 2.1,0.7 2.1,-0.1 2.2,-0.5 2.1,-0.9 0,3.1 0,10.4 1.7,2.3 -2.1,1.2 -1.9,1.6 -1.4,2.8 -1.4,2.9 -2.4,-2.1 -1.9,-2.5 -2,-2.3 -2.5,-1.9 -3,-0.5 -2.9,-1.2 0,-3.4 1.4,-2.8 1.4,-2 -0.6,-1.7 -1.3,-1.3 0,-1.9z" fill="#96d29b" stroke="#96d29b" stroke-width="2.2"/>
<path d="M1260.6,341.1l0.6,-0.5 1.7,-0.4 1.8,0 1.8,-0.2 1.7,0.3 1.5,-1.1 0.9,1.5 0,1.9 1.3,1.3 0.6,1.7 -1.4,2 -1.4,2.8 0,3.4 -2.6,0.2 -2.4,-1 -2.4,1 -2.6,0.1 -2.5,0.8 -0.8,-2.7 1.1,-2.6 1.4,-2.8 2.3,-2 -0.9,-1.7z" fill="#c8e6cc" stroke="#c8e6cc" stroke-width="2.2"/>
<path d="M1259.7,354.1l2.6,-0.1 2.4,-1 2.4,1 2.6,-0.2 2.9,1.2 3,0.5 2.5,1.9 2,2.3 1.9,2.5 2.4,2.1 -1,2.4 -0.1,2.6 1.3,1.2 0.6,1.6 -0.4,2.1 -0.1,2.2 0.9,2.5 2.2,1.7 -1.8,0.4 -1.5,1 -1.6,1 -1.9,-0.1 -2.1,0.2 -2.2,0 -2,0.7 -2.2,-0.1 -1.1,-0.3 -0.4,-2.9 -1.3,-2.7 -3.2,-0.3 -2.7,-1.1 -2.6,-1.1 -0.9,-0.9 -1.4,-2.7 -2,-2.4 -0.7,-2.8 0.4,-2.8 2.4,-1.2 1.6,-2.2 -0.9,-2.5z" fill="#c8e6cc" stroke="#c8e6cc" stroke-width="2.2"/>
<path d="M1257.2,354.9l2.5,-0.8 0,3.7 0.9,2.5 -1.6,2.2 -2.4,1.2 0,-2.2 -0.5,-2 -0.6,-0.9 1.1,-1.7z" fill="#c8e6cc" stroke="#c8e6cc" stroke-width="2.2"/>
<path d="M1208.2,367.9l0.9,-1.9 0.5,-2 2.3,0.3 2.2,0.5 1.9,-1.4 2.1,-1.1 0.2,-2.9 0.9,-2.8 2.1,-2.1 2.2,-2.1 0.2,-1.8 -0.2,-1.8 0.6,-1.7 0.2,-1.7 0.6,-2.2 1.1,-2.1 -0.3,-2.2 1.4,-1.2 1.5,-1.1 2,0.8 1.8,1.3 2.2,0.7 2.2,0 2.8,-1.7 3.1,-1.1 8.3,0 3.3,-0.1 2.6,2.1 1.7,1.4 2,1.1 -0.3,2 0.9,1.7 -2.3,2 -1.4,2.8 -1.1,2.6 0.8,2.7 -0.6,2 -1.1,1.7 0.6,0.9 0.5,2 0,2.2 -0.4,2.8 0.7,2.8 2,2.4 1.4,2.7 -3,1.3 -3.2,0.7 0.4,1.7 -0.1,1.8 0.1,1.8 -0.1,1.7 2.1,2.4 1.3,3 -2.6,-0.5 -2.5,-0.6 -1.3,-1.6 -1.6,-1.3 -2.5,-0.8 -2.3,-1.1 -2.8,0 -1.2,-1.2 -2.5,-0.1 -2.3,1 -0.4,-2.5 -0.7,-2.3 0,-6.2 -3.3,-0.3 -3.2,-0.6 -3.2,1.1 -2.5,2 -1,-1.3 -0.9,-1.5 -1.1,-1.5 0.2,-1.9 -10,0z" fill="#c8e6cc" stroke="#c8e6cc" stroke-width="2.2"/>
<path d="M1205,362.3l2.4,0.5 2.2,1.2 2.3,0.3 2.2,0.5 1.9,-1.4 2.1,-1.1 0.2,-2.9 0.9,-2.8 2.1,-2.1 2.2,-2.1 0.2,-1.8 -0.2,-1.8 0.6,-1.7 0.2,-1.7 0.6,-2.2 1.1,-2.1 -5.9,0 -0.1,1.9 -0.8,1.8 -4.8,0 -3.4,0 0,2.5 1.7,0.1 1.7,-0.3 -0.6,2.6 0.3,2.7 0.1,2.9 -1.5,2.5 -2,-0.1 -2,-0.2 -2.8,0.3 0.3,1.7z" fill="#f3f8f3" stroke="#f3f8f3" stroke-width="2.2"/>
<path d="M1200.2,348.2l5.1,0 0,-3.7 2.9,-0.5 2.8,0.8 0,2.5 1.7,0.1 1.7,-0.3 -0.6,2.6 0.3,2.7 0.1,2.9 -1.5,2.5 -2,-0.1 -2,-0.2 -2.8,0.3 0.3,1.7 -1.2,2.8 -2,-2.5 -2.5,-2 -1.9,-1.9 -0.4,-2.6 1.3,-2.5z" fill="#dcf0df" stroke="#dcf0df" stroke-width="2.2"/>
<path d="M1200.2,348.2l0.9,-3.7 4.2,0 0,3.7zM1197.4,340.6l1.1,0 -0.5,1.1z" fill="#f3f8f3" stroke="#f3f8f3" stroke-width="2.2"/>
<path d="M1191.7,349.9l0.9,0.3 -0.6,0.8zM1194,346.2l0.6,0.3 -0.3,0.3z" fill="#f3f8f3" stroke="#f3f8f3" stroke-width="2.2"/>
<path d="M1197.4,338l1.3,-2.6 1,-2.7 1.9,-0.3 1.5,-1.1 2.8,1.1 1.1,-2.7 1.2,-2.7 1.1,-1.6 0.6,-1.9 1.2,-1.5 1,-1.7 0,-2.4 1.4,-1.9 1.2,-1.1 0.8,2.5 0.6,2.6 1.1,2.8 -4.2,0 0.5,2 0.8,1.8 1.3,1.6 1.1,1.7 -1.5,1.9 -0.5,2.3 0,4.2 1.2,1.6 1.5,1.4 0.8,1.8 1,1.7 -4.8,0 -3.4,0 -2.8,-0.8 -2.9,0.5 -4.2,0 -0.3,-3.4 -2.2,-1z" fill="#c8e6cc" stroke="#c8e6cc" stroke-width="2.2"/>
<path d="M1214.7,334.1l0.5,-2.3 1.5,-1.9 1.7,-0.3 1.7,-0.6 1.6,-0.5 1.6,-0.7 1.7,-0.7 1.3,-1.2 1.1,-0.3 2.7,-1.1 2.7,-1.1 3.3,-0.7 2.1,-2.7 1.7,2.8 0.2,2 1.2,1.7 1.8,1.7 1.9,1.7 1.7,1.5 1.4,1.8 1.5,1.6 1.4,1.8 -8.3,0 -3.1,1.1 -2.8,1.7 -2.2,0 -2.2,-0.7 -1.8,-1.3 -2,-0.8 -1.5,1.1 -1.4,1.2 0.3,2.2 -5.9,0 -0.1,1.9 -0.8,1.8 -1,-1.7 -0.8,-1.8 -1.5,-1.4 -1.2,-1.6z" fill="#f3f8f3" stroke="#f3f8f3" stroke-width="2.2"/>
<path d="M1215.8,286.1l2.8,-1.4 2.6,2.1 3,1 3.1,0.7 2.9,1.3 0.7,1.6 1.1,1.4 1,1.5 1.6,0.7 3.4,0.4 3.3,0.6 0,10.7 -2.8,0 -1.4,2.7 -1.5,2.7 0.7,1.6 0.8,1.5 0.8,2.3 0.3,2.5 -2.1,2.7 -3.3,0.7 -2.7,1.1 -2.7,1.1 -1.1,0.3 -1.3,1.2 -1.7,0.7 -1.6,0.7 -1.6,0.5 -1.7,0.6 -1.7,0.3 -1.1,-1.7 -1.3,-1.6 -0.8,-1.8 -0.5,-2 4.2,0 -1.1,-2.8 -0.6,-2.6 -0.8,-2.5 -1.2,1.1 -0.7,-1.8 -1.2,-1.6 0.2,-2.5 1.9,-1.3 1.6,-1.4 1.2,-2 0.7,-2.1 1.4,-2.2 0.4,-2.6 -0.5,-2.5 -0.4,-2.5 -1,-1.5 -1.3,-1.1z" fill="#f3f8f3" stroke="#f3f8f3" stroke-width="2.2"/>
<path d="M1207.3,284.7l3,1.5 3.2,1.1 2.3,-1.2 0,4.8 1.3,1.1 1,1.5 0.4,2.5 0.5,2.5 -0.4,2.6 -1.4,2.2 -0.7,2.1 -1.2,2 -1.6,1.4 -1.9,1.3 -0.2,2.5 -2.9,1.5 -1.6,-0.9 -1.9,0.2 -1.8,0.3 -1.8,-0.2 -1.7,0.7 -1.7,0.7 -1.9,-0.3 -1.7,-0.5 -2,-1.2 -2.3,-0.5 -2.7,-0.2 -2.7,0.7 -0.4,2.6 -1,2.5 -2.3,-1.7 -1.7,-0.5 -1.5,-1.6 -1.9,-1 0,-2.8 -2.2,-1.7 3.1,-0.8 3.1,0.7 3.1,-1 1.4,-1.8 0.6,-2.2 0,-6.7 2.3,-0.3 2.2,-0.6 2,-2 2.7,-1 1.7,-2.1 1.1,-2.5 2.7,-0.7 2.6,-0.4 2.4,-1.4z" fill="#f3f8f3" stroke="#f3f8f3" stroke-width="2.2"/>
<path d="M1159.7,280.5l2.4,1.1 2.3,1.2 2,1.7 1.8,1.9 2.3,1.2 2.4,1.2 1.8,1.8 2,1.7 1.4,1.4 1.5,1.3 1.5,1.3 1.6,1.1 2.5,-0.5 0,6.7 -0.6,2.2 -1.4,1.8 -3.1,1 -3.1,-0.7 -3.1,0.8 -3.1,1.1 -3.2,1.2 -2.8,1.6 -1.9,0.5 -1.8,0.7 -1,2.1 -1.5,1.8 -0.7,1.9 -0.2,2.1 -1.8,-0.5 -1.8,0.2 -1.7,0.4 -1.8,0.4 -0.9,-1.8 -0.8,-1.8 -1.1,-2.6 -1.7,0.4 -1.6,0.8 -1.8,0.2 -1.7,-0.5 0,-0.9 -0.3,-1.7 -1,-1.4 -1.1,-1.5 0.1,-1.9 2,-2.5 2.2,0.2 2.3,0.3 1.9,1.2 2.1,0.8 2.2,-0.3 2.1,-0.5 2,-1.1 2.2,-0.3 0,-2.8 -0.4,-3.2 -1.9,-2.5 -0.3,-3.1 -0.8,-3 0.1,-3.1 1.4,-2.9 0,-3.1 -0.6,-3.1z" fill="#dcf0df" stroke="#dcf0df" stroke-width="2.2"/>
<path d="M1125.1,290.9l11.4,0 0,-4.8 2.8,-1.4 0,-7 9.3,0 0,-3.7 2.5,2.1 2.5,2.2 3.3,0.3 2.8,1.9 -4.5,0 0.6,3.1 0,3.1 -1.4,2.9 -0.1,3.1 0.8,3 0.3,3.1 1.9,2.5 0.4,3.2 0,2.8 -2.2,0.3 -2,1.1 -2.1,0.5 -2.2,0.3 -2.1,-0.8 -1.9,-1.2 -2.3,-0.3 -2.2,-0.2 -2,2.5 -1.2,-1.8 -2,-0.9 -1.9,-1 -1.4,-1.6 -2.9,0.7 -2.8,1 0,-8.5 -0.5,-3.3z" fill="#f3f8f3" stroke="#f3f8f3" stroke-width="2.2"/>
<path d="M1126.5,305.9l2.8,-1 2.9,-0.7 1.4,1.6 1.9,1 2,0.9 1.2,1.8 -0.1,1.9 1.1,1.5 1,1.4 0.3,1.7 -3.2,-0.7 -3.3,0.2 -2.2,-0.6 -2.1,-0.2 -2.1,0.8 -2.1,0.5 -0.5,-1.7 -0.9,-1.4 -0.1,-1.8 -0.8,-1.6 0.9,-2.2z" fill="#c8e6cc" stroke="#c8e6cc" stroke-width="2.2"/>
<path d="M1126,316l8.5,-0.5 0,2.5 -3.7,2z" fill="#f3f8f3" stroke="#f3f8f3" stroke-width="2.2"/>
<path d="M1130.8,320l1.9,-0.8 1.8,-1.2 0,-2.5 3.3,-0.2 3.2,0.7 0,0.9 1.7,0.5 1.8,-0.2 1.6,-0.8 1.7,-0.4 1.1,2.6 0.8,1.8 0.9,1.8 0,4.8 -2.2,1.3 -1.7,1.8 -1.2,-1.6 -1.4,-1.5 -2.6,-1.3 -0.8,-2.9 -2.4,1.7 -2.7,1.1 -1.3,-1.3 -1.1,-1.5 -1.1,-1.5z" fill="#f3f8f3" stroke="#f3f8f3" stroke-width="2.2"/>
<path d="M1135.6,325.6l5.1,-2.8 3.4,4.2 -3.4,4.5z" fill="#f3f8f3" stroke="#f3f8f3" stroke-width="2.2"/>
<path d="M1140.7,331.5l3.4,-4.5 2.6,3.1 2.5,-0.5 2.8,9z" fill="#f3f8f3" stroke="#f3f8f3" stroke-width="2.2"/>
<path d="M1152,338.6l0.1,-2.4 -0.4,-2.5 -0.9,-2.3 -1.6,-1.8 1.4,-2.6 0,-4.8 1.8,-0.4 1.7,-0.4 1.8,-0.2 1.8,0.5 2,0.5 2,0.7 1.9,0.7 2,0.6 0.4,3.2 0.2,3.2 -1.4,2.9 -0.6,3.1 -3.1,0 -2.9,1.2 -3.1,0.4z" fill="#c8e6cc" stroke="#c8e6cc" stroke-width="2.2"/>
<path d="M1157.7,321.7l0.2,-2.1 0.7,-1.9 1.5,-1.8 1,-2.1 1.8,-0.7 1.9,-0.5 2.8,-1.6 3.2,-1.2 3.1,-1.1 2.2,1.7 0,2.8 1.9,1 1.5,1.6 0.6,1.6 -2.2,1.2 -2,1.4 -2.9,-0.3 -1.9,0 -1.9,0 -1.9,-0.2 -1.9,0.5 0.5,2.1 -0.3,2.1 -2,-0.6 -1.9,-0.7 -2,-0.7z" fill="#dcf0df" stroke="#dcf0df" stroke-width="2.2"/>
<path d="M1164.2,336.6l0.6,-3.1 1.4,-2.9 -0.2,-3.2 -0.4,-3.2 0.3,-2.1 -0.5,-2.1 1.9,-0.5 1.9,0.2 1.9,0 1.9,0 0.9,1.7 0.4,1.9 0.2,1.8 0.2,1.9 0.6,2.8 -0.3,2.9 1.7,1.1 -1.4,1.2 -1.4,1.2 -1.6,0.8 -1.8,0.5 -3.1,-1.2z" fill="#c8e6cc" stroke="#c8e6cc" stroke-width="2.2"/>
<path d="M1176.7,333.8l-1.7,-1.1 0.3,-2.9 -0.6,-2.8 -0.2,-1.9 -0.2,-1.8 -0.4,-1.9 -0.9,-1.7 2.9,0.3 0.8,2.9 1.1,2.7 0,7.9z" fill="#c8e6cc" stroke="#c8e6cc" stroke-width="2.2"/>
<path d="M1177.8,333.5l0,-7.9 -1.1,-2.7 -0.8,-2.9 2,-1.4 2.2,-1.2 1.1,-1.1 2.3,1.7 0,4.8 -1.2,2.8 -1.3,2.8 0,4.6z" fill="#c8e6cc" stroke="#c8e6cc" stroke-width="2.2"/>
<path d="M1181,333l0,-4.6 1.3,-2.8 1.2,-2.8 0,-4.8 1,-2.5 0.4,-2.6 2.7,-0.7 2.7,0.2 2.3,0.5 2,1.2 1.7,0.5 1.9,0.3 1.7,-0.7 1.7,-0.7 1.8,0.2 1.8,-0.3 1.9,-0.2 1.6,0.9 2.9,-1.5 1.2,1.6 0.7,1.8 -1.4,1.9 0,2.4 -1,1.7 -1.2,1.5 -0.6,1.9 -1.1,1.6 -1.2,2.7 -1.1,2.7 -2.8,-1.1 -1.5,1.1 -1.9,0.3 -1,2.7 -1.3,2.6 -2.3,-0.6 -2,1.2 -2.8,0.3 -1.4,-1.2 -1.4,-1.1 -0.3,-1.9 -1.1,-1.5 -2.6,-0.4z" fill="#96d29b" stroke="#96d29b" stroke-width="2.2"/>
<path d="M1208.2,367.9l1.9,-0.3 10,0 -0.2,1.9 1.1,1.5 0.9,1.5 1,1.3 2.5,-2 3.2,-1.1 3.2,0.6 3.3,0.3 0,6.2 0.7,2.3 0.4,2.5 2.3,-1 2.5,0.1 -0.1,3 0.4,3 -5.7,0 0,9 2.3,1.7 1.7,2.2 -2.9,0.4 -2.8,0.8 -2,-0.4 -2.1,-0.2 -1.9,-1 -2.2,-0.1 -12.7,0 -3.2,0.6 -3.1,-1.2 1.1,-2.6 -0.8,-2.8 1,-2.5 0.7,-2.5 0.5,-2 1,-1.8 1.2,-1.5 1,-1.8 -1.1,-3 -0.6,-3.2 -0.8,-1.9 -0.8,-1.9 -0.7,-2zM1207.6,364l2,0 -1.4,3.1z" fill="#f3f8f3" stroke="#f3f8f3" stroke-width="2.2"/>
<path d="M1235.6,387.7l5.7,0 -0.4,-3 0.1,-3 1.2,1.2 2.8,0 2.3,1.1 2.5,0.8 1.6,1.3 1.3,1.6 2.5,0.6 2.6,0.5 -1.3,-3 -2.1,-2.4 0.1,-1.7 -0.1,-1.8 0.1,-1.8 -0.4,-1.7 3.2,-0.7 3,-1.3 0.9,0.9 2.6,1.1 2.7,1.1 0.6,2 0.6,2 0,4.5 -0.8,1.7 -0.9,1.7 1.4,1.1 -2.1,0.9 -2,1.1 -2.1,0.7 -2.3,0.1 0.6,1.7 -2.3,-0.1 -2,0.9 -1.4,1.4 -1.3,1.5 -1.1,1.6 -1.6,1.2 -2.4,-0.2 -2.4,-0.1 -2.6,-0.8 -2.8,0.2 -1.7,-2.2 -2.3,-1.7z" fill="#c8e6cc" stroke="#c8e6cc" stroke-width="2.2"/>
<path d="M1266.5,377.5l3.2,0.3 1.3,2.7 0.4,2.9 -0.6,2 1.2,1.9 0.7,2.1 1.4,1.6 0.9,2 -1.1,2.8 -0.6,2.9 -2.5,-2 1.3,-2.3 -1,-2.5 -2,-0.4 -1.7,-1 -1.4,-1.1 0.9,-1.7 0.8,-1.7 0,-4.5 -0.6,-2z" fill="#c8e6cc" stroke="#c8e6cc" stroke-width="2.2"/>
<path d="M1287.8,380.6l-0.1,3 0.7,2.9 0,6.8 -1.5,1 -1.1,1.4 -0.9,1.5 -1.1,1.5 -2.8,1.7 -3.1,1.1 -1.3,1.5 -1.6,1.1 -1.9,0.9 -0.9,1.8 0.9,3.1 0.5,3.1 0,5.7 -1.5,1.3 -1.8,0.8 -2,0.4 -1.5,1.4 -0.2,2.1 -0.1,2.2 -2.5,-0.3 -0.2,-1.8 -0.7,-1.7 0.5,-1.8 0.1,-1.8 -0.7,-2.7 -1,-2.6 1.5,-1.8 1.9,-1.3 1,-2.5 -0.1,-2.6 0,-7.9 -1.6,-1.1 -1.5,-1.3 -1.8,-0.4 -1.9,-0.3 -0.6,-1.7 2.3,-0.1 2.1,-0.7 2,-1.1 2.1,-0.9 1.7,1 2,0.4 1,2.5 -1.3,2.3 2.5,2 0.6,-2.9 1.1,-2.8 -0.9,-2 -1.4,-1.6 -0.7,-2.1 -1.2,-1.9 0.6,-2 1.1,0.3 2.2,0.1 2,-0.7 2.2,0 2.1,-0.2 1.9,0.1 1.6,-1 1.5,-1z" fill="#c8e6cc" stroke="#c8e6cc" stroke-width="2.2"/>
<path d="M1245,401.2l2.4,0.1 2.4,0.2 1.6,-1.2 1.1,-1.6 1.3,-1.5 1.4,-1.4 2,-0.9 2.3,0.1 1.9,0.3 1.8,0.4 1.5,1.3 1.6,1.1 0,7.9 0.1,2.6 -1,2.5 -1.9,1.3 -1.5,1.8 -2.6,-1.1 -2.8,0.5 -2.4,-2.4 -2.4,-2.4 -2,-1.4 -2.2,-1.1 -1.4,-1.5 -1.2,-1.6z" fill="#c8e6cc" stroke="#c8e6cc" stroke-width="2.2"/>
<path d="M1230,413l0,7.9 0.7,3.1 1.3,2.9 0.9,-1.6 1.8,-0.6 1.9,-0.4 1,-1.7 2.1,0.5 1.9,-0.8 2.1,0.1 1.9,0.8 0.8,-1.6 1.3,-1.1 1.1,-1.3 1,-1.4 2.1,-0.4 2,-0.6 1.7,-1.3 1,-1.9 -2.4,-2.4 -2.4,-2.4 -2,-1.4 -2.2,-1.1 -1.4,-1.5 -1.2,-1.6 0,-2 -2.9,0 -2.8,0.6 -1.6,-0.9 -1.8,0.2 -1.4,1 -1.7,0.5 0,10.4z" fill="#c8e6cc" stroke="#c8e6cc" stroke-width="2.2"/>
<path d="M1206.7,399.5l3.1,1.2 3.2,-0.6 12.7,0 2.2,0.1 1.9,1 2.1,0.2 2,0.4 2.3,-0.5 2,-1 2.3,0.6 2.2,-0.5 2.3,0.8 -2.9,0 -2.8,0.6 -1.6,-0.9 -1.8,0.2 -1.4,1 -1.7,0.5 0,10.4 -2.8,0 0,7.9 0,10.2 -1.8,0.6 -1.8,0.8 -1.9,-0.5 -1.9,-0.1 -2.5,-0.2 -1.5,-1.4 -0.1,-2 -1.2,-1.5 -1.5,-1.1 -0.9,-2.7 0.1,-2.9 -0.8,-2.8 0.2,-2.9 -0.8,-2.9 -1.7,-2.4 -1.3,-2.7 -1.9,-2.4 -0.9,-2.3z" fill="#c8e6cc" stroke="#c8e6cc" stroke-width="2.2"/>
<path d="M1220.1,431.7l2.5,0.2 1.9,0.1 1.9,0.5 1.8,-0.8 1.8,-0.6 0,-10.2 0.7,3.1 1.3,2.9 0.9,-1.6 1.8,-0.6 1.9,-0.4 1,-1.7 2.1,0.5 1.9,-0.8 2.1,0.1 1.9,0.8 0.8,-1.6 1.3,-1.1 1.1,-1.3 1,-1.4 2.1,-0.4 2,-0.6 1.7,-1.3 1,-1.9 2.8,-0.5 2.6,1.1 1,2.6 0.7,2.7 -0.1,1.8 -0.5,1.8 0.7,1.7 0.2,1.8 2.5,0.3 -0.2,2.4 -1.2,2.1 -1.7,2.3 -2.2,1.9 -1.2,2 -1.7,1.7 -2.2,2.1 -2.6,1.8 -2.7,1.4 -2.4,1.7 -2.3,0.6 -2.3,0 -2.2,0.8 -2.4,0.7 -2.1,-1.2 -1.7,0.9 -1.6,1.1 -1.9,-0.7 -1.9,0.6 -2.5,-0.3 -2.1,-1.4 0.5,-2.2 -1,-2 0.3,-3.1 -1,-2.1 -1.9,-1.3 -0.8,-2.7z" fill="#54ac5c" stroke="#54ac5c" stroke-width="2.2"/>
<path d="M1313,384.8l0.4,2.6 0.5,2.6 1.3,2.2 0.9,2.5 -0.5,3.2 -2,2.5 -2.5,1.6 -1.2,2.6 0.8,2.8 0,2.8 -1.3,2.7 -1.9,2.4 -1,2.9 0.3,3 -2.6,1.1 -2.8,0.6 -0.8,-1.6 -0.7,-1.7 -1.5,-1 -1.3,-1.3 -0.9,-2.3 -0.2,-2.5 1.7,-2.4 1.1,-2.7 -0.4,-1.7 -0.5,-1.8 -0.4,-1.8 0.5,-1.7 1.5,-2.1 1.3,-2.2 2.9,-1.1 2.8,-1.1 1.4,-2.5 1.4,-2.3 1.7,-2.3z" fill="#dcf0df" stroke="#dcf0df" stroke-width="2.2"/>
<path d="M1295.7,383.4l0.9,0.6 -0.6,0.6zM1298.8,385.1l0.6,0.6 -0.6,0.3zM1301.1,386.8l0.6,0.6 -0.6,0.3zM1335.7,407.7l1.4,0.3 -0.8,0.8zM1330,409.9l1.4,0.6 -0.8,0.8zM1330.3,364l0.6,0.3 -0.3,0.2zM1104.2,303.3l1.1,0.9 -0.9,0.3zM1106.1,307.9l0.9,0.8 -0.9,0.3zM1101.9,302.8l0.6,0.3 -0.6,0.2zM1108.4,305.3l0.6,0.3 -0.6,0.3z" fill="#f3f8f3" stroke="#f3f8f3" stroke-width="2.2"/>
<path d="M1157.1,209.7l3.2,-0.1 3.1,-0.4 2.5,0.7 2.7,0.2 2.2,-1.4 2.5,-1 2,-0.4 2,-0.7 -2.6,-0.8 1.1,-2.4 2.3,-1 -2.2,-0.2 -2,-0.7 -0.7,-2 -0.5,-2.2 -2,-1.4 -1.9,-1.4 -1.2,-0.9 -1.2,1.3 -1.6,1 0,2.8 0,2 0.3,1.4 -0.6,2.3 1.1,1.1 -2.2,1.1 -2.9,0.6 -1.8,1.1z" fill="#1a7d36" stroke="#1a7d36" stroke-width="2.2"/>
<path d="M1423,281.9l0.1,-2.7 0.7,-2.6 2,0.6 2,0.5 0,2 1.9,0.1 1.7,0.7 1.9,0.7 1.9,-0.7 -0.6,2 -2.8,1.7 1.7,2.2 1.2,2.2 1,2.3 -0.8,1.7 -1.2,-2.1 -0.2,-2.4 -1.9,0.1 -1.8,-0.6 -1.9,1.2 -2.1,0.7 -0.4,-1.9 -0.2,-2 -1,-1.9z" fill="#96d29b" stroke="#96d29b" stroke-width="2.2"/>
<path d="M1527.8,376.7l-0.3,1.4 5.7,-2.6 0,-0.8 -4.2,0.6z" fill="#f3f8f3" stroke="#f3f8f3" stroke-width="2.2"/>
<path d="M1496.7,338l2.8,-1.1 0.3,1.7 -1.7,0.8z" fill="#c8e6cc" stroke="#c8e6cc" stroke-width="2.2"/>
<path d="M1525.6,238.5l2,2.3 0.5,3 2.2,-0.3 2.1,0.9 2.2,-1.2 2.3,-1.1 -1.2,-1.6 -1.1,-1.7 1.7,-1.1 1.7,-1 1.6,-1.2 1.3,-1.5 1.6,-0.9 1.2,-1.4 -2.3,-2 -2.5,1.8 -2.8,1.1 -3.2,0.5 -2.2,0.7 -2.1,1 -1.3,2z" fill="#1b561b" stroke="#1b561b" stroke-width="2.2"/>
<path d="M1125.7,312.6l7.9,-0.5 0,1.4 -7.9,0.6z" fill="#54ac5c" stroke="#54ac5c" stroke-width="2.2"/>
<path d="M1249.8,434.5l4.6,-2.8 2.2,2.8 -3.4,2.8 -2.5,-1.1z" fill="#f3f8f3" stroke="#f3f8f3" stroke-width="2.2"/>
<path d="M1261.2,423.8l2.8,0.5 0,2.3 -3.4,0z" fill="#96d29b" stroke="#96d29b" stroke-width="2.2"/>
</g>
<g stroke="#f0a22e" stroke-width="1.5" stroke-linejoin="round">
<path d="M773.7,154.7l1.7,0.9 1.4,1.2 1.9,0 1.9,0.4 1.9,-0.3 1.7,-0.8 1.8,0.2 1.9,0.4 2.5,-1.8 2.8,-1.3 2.9,0.8 3.1,0.5 2.8,-0.3 2.9,0.1 2.6,-1.6 3,0.5 2.1,0.6 2.1,0.4 2.2,-0.1 2.1,0.5 1.7,0.8 1.7,0.7 1.8,0.3 1.7,0.7 1.8,-0.3 1.9,0 1.8,0.2 1.8,-0.3 1.9,0.5 1.7,0.9 1.4,1.3 1.8,0.8 1.9,0.3 1.9,-0.2 1.6,-1.2 2,-0.3 19.8,0 2.5,0.2 2.5,0.4 2.5,0.4 2.4,-0.4 2.5,0.6 2.5,-0.7 2.5,-0.7 2.5,0.8 1.8,0.1 1.8,0 1.8,0.5 1.7,-0.8 1.9,-0.6 1.9,0.2 1.5,1.2 1.7,0.8 1.9,-0.6 1.5,-1.2 1.3,-1.4 1,-1.6 -0.2,-2.1 -0.8,-1.9 -0.5,-2.1 0.1,-2.1 1.6,1.2 1.8,0.5 1.4,1.5 1.9,0.4 1.4,1.3 1.2,1.6 1.8,0.7 1.6,1 1.9,0 1.7,-0.8 1.5,-1.1 1.9,-0.4 1.8,0.4 1.8,0.3 1.8,0.3 1.8,-0.1 2.5,0.6 2.6,0.5 2.5,0.6 2.3,1.1 -3,0.9 -2.9,1.5 -2.4,2.1 -3,1.2 -0.6,2.1 -1.8,1.2 -1.1,1.8 -0.8,1.9 -2.2,0.7 -2.2,0.6 -2.2,0.8 -1.9,1.2 -2.1,1.1 -2,1.1 -2.2,0.9 -2.2,0.7 -1.2,1.8 -1.7,1.4 -0.9,2 -1.3,1.8 1.8,1.3 1.5,1.5 1.4,1.7 1.9,1.2 1.4,0.9 1.3,1.1 1.7,0.5 1.7,0.4 1.7,0.4 1.7,-0.5 1.5,-0.9 1.7,-0.5 1.6,1.5 1.6,1.6 2.2,0.4 2.1,0.8 2.3,-0.5 2,-1.1 2.2,0.4 2.2,0.8 0.2,3.1 0.6,3.1 2,0.6 2,0.6 1.4,1.5 1.7,1.3 1.4,-1.5 1.4,-1.3 -0.9,-1.5 -0.6,-1.6 -0.6,-1.6 -0.7,-1.6 2.1,-1.2 2.3,-0.6 2,-1.3 1.5,-1.9 -1.7,-1.3 -0.7,-1.9 -1.6,-1.3 -1.1,-1.7 1.2,-2.7 1.7,-2.4 -1.7,-2.4 0.2,-3 3.3,-0.3 3.2,-0.5 3.1,0.6 3.2,0.8 2.6,1.1 1.8,2.2 2.8,-1 2.7,1.1 1.3,2.9 0.1,3.3 10,0 2.5,-1.7 1.7,-2.5 0.8,1.5 1.1,1.3 0.7,1.6 1.3,1.2 1.5,0.9 1.4,1.1 0.8,1.6 0.9,1.5 1.8,2.2 2.5,1.4 2,0.5 1.8,1.2 1.6,1.4 2.2,0.3 0.9,1.6 1.4,1.2 0.9,1.6 1.3,1.3 -1.6,0.3 -1.7,0.3 -1.5,0.9 -1.7,0.4 -2.6,2 -3,1.1 -18.2,0 -2,1 -2.2,0.7 -1.9,1.2 -1.2,1.9 2.9,0.5 3,0.3 3.1,-0.7 2.3,-2 1.2,2.2 0.2,2.6 2.7,0.6 2.8,0.3 1.9,2.1 2.5,1.2 -2.1,1.5 -2.6,-0.3 -2.5,0.4 -2.1,1.2 -2.5,1.9 -2.3,2 -1.4,-1.6 -1.2,-1.7 -1.1,-1.4 -1.4,-1.2 0,-3.9 -2,-0.8 -2,-0.1 -1.5,1.1 -0.6,1.7 -0.9,1.6 -1.3,1.3 -2.2,1.1 -9.1,0 -2.5,1.2 -2.6,1.1 -1.8,0.5 -1.7,0.7 -1.7,0.7 -1.9,0.3 0,1.7 -2.4,0.7 -2.6,0.3 -2.5,0.3 -2.4,1 0.3,-2.9 0.2,-3.2 -0.5,-3.2 -1.5,-1.3 -1.6,-1 -2.6,-1.1 -3,-0.9 -2.2,-2.2 -2.9,-1.2 -2.9,-0.8 -1.6,1 -1.8,-0.2 -1.9,-0.3 -1.6,-1.1 -1.9,0.2 -1.7,-0.8 -1.9,0.1 -1.9,0.1 -1.7,-0.9 -1.9,-0.1 -80.7,0 -1.2,-2.3 -2.5,-0.5 -2.1,-1 -2,-0.8 -2.3,-0.4 -2.1,-0.6 -2.1,-2.6 -2.3,-2.3 -2.3,-2.5 -1.3,-3.1 -0.1,-1.9 1,-1.7 -2.3,-2.5 -3.4,-0.3 -2.1,-2 -2,-2 -2.4,-1.6 -2,-2.1 -1.7,0.8 -1.7,0.6 -1.8,0.5 -1.9,0.1 -2.2,-1.2 -2,-1.6 -2.8,-0.7 -2.9,-0.1zM990.5,173.3l-2.5,0.5 -2.3,1.1 -2.6,-0.4 -2.5,0.3 -2.3,-1.3 -2.4,-1 -2.6,-0.6 -2.6,0 -2.4,-0.4 -2.3,-0.8 -2.3,-1 -1.9,-1.6 -2.4,0.7 -2.4,-0.7 -2.5,0.2 -2.3,0.8 2.7,-1.2 2.9,-0.6 2.9,-0.6 2.9,-0.4 0.7,-1.9 1.3,-1.4 0.2,-1.9 0.6,-1.9 -2.7,-1.2 -2.8,-1.3 -1.4,-1 -1.1,-1.4 -1.7,0.3 -1.6,0.4 -1.6,1.2 -2,0 -1.8,-0.4 -1.8,-0.5 -1.7,-0.8 -1.8,-0.2 -1.7,-0.5 -1.8,-0.2 -2.1,-0.1 -2.1,-0.3 -2.2,-0.7 -2.1,0.8 -2.2,-0.2 -2,-0.8 -2.1,0.5 -2.2,-0.6 -2.3,-1.2 -1.9,-1.6 1.2,-1.6 2,0.3 1.6,-0.8 1.4,-1 1.7,-0.5 1.6,-0.7 1.4,-1.1 1.8,-0.3 1.8,-0.1 1.8,0.2 1.7,-0.8 1.8,-0.3 1.8,0 1.7,0.4 1.8,-0.4 1.8,0.5 1.8,0.5 1.8,0.5 1.8,-0.1 1.9,-0.1 1.8,0.5 1.5,1.1 1.9,0 1.7,1 2.4,0.6 2.5,-0.3 2.5,-0.1 2.5,0.3 2.1,1.2 2.3,1.1 2.1,1.3 2,1.5 1.7,2.5 2.5,1.7 1.6,1.1 1.7,0.9 1.8,0.8 1.9,0.2 1.8,0.9 1.9,0.1 1.8,0.8 1.7,0.9 -1.2,1.6 -1.1,1.7 -1.4,1.7 -2,0.6 -0.6,2.8zM841.7,156.4l1.9,0 1.8,0.3 1.8,0.4 1.5,1.2 1.8,-0.3 1.8,-0.3 1.8,-0.2 1.8,0 2.1,-0.5 2,-1 2.1,0.8 2.3,-0.2 2.1,-0.3 2.1,0.4 2.2,-0.2 2.1,0.5 2.9,0 3,0.1 2.6,-1.2 2.8,-0.9 -2.4,-0.4 -1.7,-1.9 -2.3,-0.8 -2.1,-1.1 0,-5.7 -1.9,-0.3 -1.9,0.2 -1.8,-0.7 -1.5,-1.2 -1.6,1.1 -1.8,0.6 -1.8,0.5 -1.8,0.4 -2.9,0.4 -2.7,0.7 -2.9,0.3 -2.9,-0.3 -2.9,-0.3 -2.7,0.9 -2.9,-0.5 -2.8,-0.3 -1.6,1.2 -1.2,1.6 1.7,0.9 1.9,0.3 1.8,0.5 1.6,1.1 -0.3,2.2zM819,148l5.7,2.2 11.4,-2.2 5.6,-5.7 -19.8,-0.8zM915.4,135.3l36.8,0 1.6,-1.7 2,-1.2 1.4,-1.8 2.1,-1 2.5,-1.2 2.5,-1.2 2.6,-1 2.7,-0.6 3.1,0.2 2.7,1.3 2.4,-1.9 2.8,-1.2 2.2,0.3 2.2,-0.4 2.3,-0.2 1.9,-1.3 2.3,-0.2 1.9,-1.1 2,-0.9 2.2,-0.4 -2.9,-0.7 -2.4,-1.8 -2.9,-0.4 -3,0.1 -2.8,-0.8 -2.9,-0.2 -2.9,0.5 -2.9,0.4 -2.7,0 -2.6,0.8 -2.7,0.1 -2.6,-0.5 -2.6,-1.1 -2.7,0.3 -2.8,-0.2 -2.6,0.8 -2.7,-0.7 -2.7,0.6 -2.5,1 -2.6,0.9 -2.8,-0.1 -2.5,-1.3 -2.6,1.2 -2.8,0.2 -2.6,0.2 -2.7,-0.3 -2,1.7 -2.5,1.1 -2.5,0 -2.5,0.1 -2.6,0.3 -2.4,0.6 1.9,0.1 1.7,1.1 1.6,1 1.9,0.5 1.6,1 1.8,0.8 1.9,0.1 1.7,1 -1.2,1.3 -1.3,1.2 -1.6,0.9 -1.5,0.9 -2.6,1.8zM904.1,138.1l42.5,2.5 0,-2.8 -34,-3.4zM904.1,130.5l14.1,-0.3 5.7,-4.8 -17,-2.3 -5.7,3.7zM841.7,139.5l2.6,0.1 2.4,0.7 2.5,-0.5 2.5,-0.4 2.8,-0.7 2.1,1.9 2.4,0.5 2.6,-0.2 2.9,0.3 2.9,0.4 2.7,-1.1 2.8,-1 0,-2.8 -2.6,-0.1 -2.3,-1.1 -2.5,-0.3 -2.5,0.1 -2.5,-0.2 -2.4,0.7 -2.5,-0.4 -2.5,0.4 -2.9,0.4 -2.8,0.4 -2.8,-0.7 -2.9,0.8zM878.6,139.5l17,0 0,-4.2 -14.2,0.5zM884.2,148l14.2,1.4 0,-5.7 -11.3,-0.8zM902.7,147.4l14.1,-0.8 0,-4.3 -14.1,0zM827.6,136.7l17,-1.4 -2.9,-2.8 -14.1,1.4zM892.7,156.4l8.5,1.1 0,-3.3 -7,-0.6zM935.2,166.3l10,5.6 -14.2,0 -2.8,-5.6zM1005.2,216.5l1.2,-2.1 0.7,-2.3 2,-1.4 1.2,-2.1 2.8,-1.7 2.9,-1.4 -0.7,2.2 -0.1,2.3 1.4,1.9 1.8,1.6 2.4,0 2.3,0.7 0,5.1 -2.1,-0.3 -2.1,-0.3 -2.1,0.7 -2.2,-0.4 -2.5,-0.1 -2.4,-0.3 -2.1,-1.3zM809.7,207.7l9.3,1.5 4.6,5.3 -4.6,-0.8zM990.5,210.3l7.7,2 -4.9,-0.6zM796.4,198.7l3.7,0.3 1.4,4.8 -3.4,-1.7z" fill="#1b6e2b"/>
<path d="M773.7,154.7l0,26.3 2.9,0.1 2.8,0.7 2,1.6 2.2,1.2 1.9,-0.1 1.8,-0.5 1.7,-0.6 1.7,-0.8 2,2.1 2.4,1.6 2,2 2.1,2 3.4,0.3 2.3,2.5 -1,1.7 0.1,1.9 -3.1,0 -3.1,-0.8 -1,-1.9 -1.8,-1.2 -1.3,-1.8 -0.2,-2.1 -1.8,-0.2 -1.9,-0.2 -1.7,-0.8 -1.6,-0.8 -2.5,-1.2 -2.6,-0.6 -2.6,-1 -2.3,-1.5 -2.7,-0.9 -2.8,-1 -3.1,-0.3 -2.7,1.4 -2.9,0.4 -2.8,-0.6 -3,0.3 -2.6,-1.5 -2.6,0.9 -2.1,1.5 -2.5,1 -2.8,0 -0.5,-2.2 -0.9,-2.1 -1.3,1.5 -1.3,1.5 -1.5,1.4 -1.5,1.3 -1.8,1.8 -1.8,1.9 -2.5,0.7 -2.4,0.7 -2.2,0.9 -2.1,1.2 -2.5,0.4 -1.7,1.7 -2.6,0.3 -2.5,0.3 -2.4,0.9 -2.5,0.7 1.9,-2.1 2.4,-1.5 2.6,-0.9 2.6,-0.6 2.2,-1.6 2.5,-1.1 1.1,-2 1.7,-1.4 -12.7,0 0,-3.7 -2.5,-0.7 -2.5,-0.6 -2.2,-1.7 -2.7,0.2 1.1,-3 1.7,-2.7 2.4,-1.2 2.6,0 2.3,-1.4 2.6,-0.2 -1.8,0.3 -1.7,-0.5 -1.8,-0.4 -1.7,-0.3 -1.9,0.2 -1.8,0.3 -1.6,-0.9 -1.8,-0.4 -3.3,-0.6 -2.4,-2.2 2.8,-0.6 2.9,-0.4 2.9,-0.5 2.7,-1 2.7,-1.3 3,0.1 -3,-1.6 -3.3,-0.7 -3.1,-1.4 -3.4,-0.2 2.5,-0.8 2.5,-0.8 2.5,-0.4 2.5,-0.8 2.3,-0.2 2.2,-0.9 2.3,0.8 2.4,-0.3 1.4,-2 1.9,-1.4 2.5,-0.1 2,-1.6 1.9,-0.1 2,-0.2 1.4,1.4 1.6,1 1.8,0 1.9,0.2 1.8,-0.2 1.7,-0.7 2.3,0.3 1.8,1.3 2.1,0.5 2.2,0.3 2.2,0.4 2.1,-1 2.2,-0.3 2.1,0.2 1.7,0.9 1.8,0 1.8,0.3 1.8,-0.3 1.8,0.2 1.7,0.3 1.8,0.8zM735.4,188.9l6.3,-1.2 -1.4,2.6 -3.4,0.5zM687.3,171.6l7.6,0.9 -3.4,1.1zM698.6,199l4.3,-0.3 -2.3,2zM719.3,289.2l2.5,-0.8 -0.2,1.1zM725,290.1l1.4,0.8 -0.9,0.3zM729.2,292.1l2,0.2 -1.1,0.9zM731.2,295.2l1.4,-1.2 2,2 -2.3,1.7 -1.1,-1.1z" fill="#1b561b"/>
<path d="M824.2,212.8l80.7,0 1.9,0.1 1.7,0.9 1.9,-0.1 1.9,-0.1 1.7,0.8 1.9,-0.2 1.6,1.1 1.9,0.3 1.8,0.2 1.6,-1 2.9,0.8 2.9,1.2 2.2,2.2 3,0.9 2.6,1.1 1.6,1 1.5,1.3 0.5,3.2 -0.2,3.2 -0.3,2.9 2.4,-1 2.5,-0.3 2.6,-0.3 2.4,-0.7 0,-1.7 1.9,-0.3 1.7,-0.7 1.7,-0.7 1.8,-0.5 2.6,-1.1 2.5,-1.2 9.1,0 2.2,-1.1 1.3,-1.3 0.9,-1.6 0.6,-1.7 1.5,-1.1 2,0.1 2,0.8 0,3.9 1.4,1.2 1.1,1.4 -2.2,0.7 -2.2,0.7 -2.2,0.8 -2.2,0.9 -0.5,1.9 -1.5,1.5 2,2.2 -2.9,0.6 -2.6,1.5 -3,-0.3 -2.8,1.3 -1.9,2.2 -2.4,1.8 -0.5,3.1 -0.6,3.1 1.1,2.2 0,2.6 -1.7,1.1 -1.9,0.7 -1.5,1.5 -2,0.6 -2.1,1.5 -2,1.6 -2.4,1.1 -2,1.7 -0.7,2.5 -0.1,2.6 0.6,2.4 0.2,2.6 1.7,1.7 1.2,2.3 -0.4,2.3 -0.8,2.2 -2.2,0 -0.5,-2.3 -0.2,-2.3 -1.7,-1.7 -2.2,-1 0.3,-3.4 -1.9,-1.3 -1.8,-1.5 -2.1,-0.2 -2.1,0.8 -1.8,0.1 -1.9,-0.3 -1.9,0 -1.5,-1.2 -2.1,0.7 -2.1,-0.5 0.5,3.1 -2.4,0.5 -2.4,-0.7 -2.2,0.3 -2.1,-0.5 -2.1,-0.4 -2.1,-0.6 -1.9,1.5 -2.1,1.3 -2.1,1.1 -2.4,0.6 -1.5,2.8 0.4,3.2 -2.7,-0.7 -2.4,-1 -1.1,-2.6 -1.5,-2.3 -2,-2 -1.7,-2.2 -2.5,0.5 -2,1.5 -1.9,-2 -2.6,-0.8 -1.7,-0.9 -1,-1.7 -1.6,-1 -1.1,-1.5 -4.8,0 0,1.4 -8,0 -2.7,-0.6 -2.8,-0.7 -2.5,-1.4 -2.7,-0.6 -6.6,0 -1.9,-2.2 -2,-2.1 -3,-0.5 -3,-0.9 -0.8,-1.8 -1.6,-1.1 -0.7,-1.9 -0.8,-1.7 -1.5,-2.8 -1.2,-1.7 -0.6,-2 -1.3,-1.6 -1.1,-1.7 -0.6,-1.9 -0.6,-1.9 -0.6,-1.9 0.7,-2 -0.5,-2.4 -0.8,-2.3 0.8,-2.3 1.6,-2 -0.4,-3.3 -1.6,-2.9 2.5,1.5 2.9,-0.4z" fill="#1b561b"/>
<path d="M841.4,259.4l6.6,0 2.7,0.6 2.5,1.4 2.8,0.7 2.7,0.6 8,0 0,-1.4 4.8,0 1.1,1.5 1.6,1 1,1.7 1.7,0.9 2.6,0.8 1.9,2 2,-1.5 2.5,-0.5 1.7,2.2 2,2 1.5,2.3 1.1,2.6 2.4,1 2.7,0.7 -0.5,2.3 0,2.5 -0.8,2.3 0.1,2.5 -0.6,3.2 2.3,2.4 1.1,2.7 2.3,1.5 2,1.4 2.3,0.9 1.7,-0.7 1.7,-0.9 1.8,0.2 1.9,0.2 1.4,-1 0.9,-1.4 1.5,-1.1 0.4,-1.8 1.4,-2 2.1,-0.6 2.1,-0.6 2.2,-0.2 2.1,0.6 -0.1,1.8 -0.6,1.7 0,1.8 -0.7,1.7 -2,1.4 -2.5,1.7 -2.7,0 -2.7,0.3 0,1.7 0.8,1.6 0.9,1.5 -0.8,1.5 -1.4,1.2 -1.4,0.9 -1.5,0.9 -1.2,-1.3 -1,-1.5 -1.5,-0.9 -1.4,-1.1 -1.8,-0.2 -1.8,0.7 -1.6,0.9 -1.9,0 -2.2,-0.8 -2.3,0.3 -1.7,-1.7 -2.3,-0.6 -2.1,-0.3 -1.3,-1.7 -1.8,-0.9 -1.9,-0.8 -2.7,-1 -2.1,-1.9 -2.3,-1.9 -2.8,-0.8 0,-4.2 -1.1,-2.9 -1.7,-2.5 -1.5,-2.2 -2,-1.8 -2.3,-1.5 -2.4,-1 0,-3.6 -1.7,-2 -1.4,-2.2 -2.4,-0.7 -2.5,-0.8 -0.6,-3.3 -1.6,-2.9 -2.4,-1.4 -2.7,-0.3 -0.1,2.6 0.6,2.5 1.5,1.8 1.7,1.5 1.2,2 1.6,1.7 1.4,2.4 0.4,2.8 2.2,1.7 1.6,2.2 0.9,2.2 2,1.4 -2.3,-1.4 -1.6,-1 -0.6,-1.9 -1.8,-0.5 -1.7,-0.8 -1.2,-1.8 -2,-0.8 -0.6,-2.1 -1.5,-1.5 -1.1,-1.9 -1.2,-1.8 -1.9,-2.5 -0.9,-3.1 -1.4,-3z" fill="#96d29b"/>
<path d="M912,310.1l1.5,-0.9 1.4,-0.9 1.4,-1.2 0.8,-1.5 -0.9,-1.5 -0.8,-1.6 0,-1.7 5.4,0 -0.8,2.6 0.5,2.8 2.6,0.5 -1.5,1.8 -1.4,1.9 -2.2,2 -2.9,-1.5z" fill="#c8e6cc"/>
<path d="M920.8,300.5l2.5,-1.7 0,7.1 -2.8,0.3z" fill="#96d29b"/>
<path d="M920.2,310.4l1.4,-1.9 1.5,-1.8 3.2,-0.6 3.3,0.1 1.7,1.2 2.1,0.4 2.1,0.4 2,0.5 -2.2,0.6 -2.3,0 -2.4,1.9 -3,0.9 -1.7,2.2 -1.4,-1.1 -1.9,-1.8z" fill="#dcf0df"/>
<path d="M918,312.4l2.2,-2 4.3,2.8 -0.3,0.9z" fill="#c8e6cc"/>
<path d="M925.9,314.3l1.7,-2.2 3,-0.9 2.4,-1.9 2.3,0 2.2,-0.6 -0.6,2.8 -0.5,2.8 -0.3,2.8 0,2.9 -2.9,0.6 -2.8,-0.9 -0.7,-1.9 -1.2,-1.6 -1.9,-0.8 -1.8,-0.8z" fill="#f3f8f3"/>
<path d="M930.4,319.7l5.7,0.3 3.1,3.9 -1.1,3.7 -5.7,-4.8z" fill="#c8e6cc"/>
<path d="M938.1,327.6l0.2,-2 0.9,-1.7 8.8,0 3.2,0.7 2.7,1.9 -0.7,2.1 -0.7,2.1 -3,0.7 -2.9,-1 -1.8,-0.4 -1.1,-1.6 -2.9,0.1z" fill="#c8e6cc"/>
<path d="M932.4,289.2l1.5,-0.9 1.6,-0.6 1.5,-1 1.6,-0.6 2,-0.5 2,-0.4 1.9,0.6 2.1,0.1 2.1,1.2 2.5,0.2 2.4,0.7 1.5,2.1 1.9,1.2 1.8,1.3 2,0.9 2.2,0.5 -2.3,0.2 -2.4,0.2 -2.3,0.4 -2.3,0.1 -1.5,-2.3 -2.1,-1.6 -2.7,-0.8 -2.5,-0.8 -2.6,-1 -1.8,0.1 -1.8,-0.5 -1.7,0.4 -1.8,0.6z" fill="#c8e6cc"/>
<path d="M962.2,299.4l7.1,0.3 0.8,-4.3 -3.7,-0.5 0.6,2.5z" fill="#f3f8f3"/>
<path d="M970.1,295.4l-0.8,4.3 1.4,1.7 8.8,-2.9 -4.6,-3.1z" fill="#dcf0df"/>
<path d="M951.4,299.4l5.7,0.8 -2,-1.4z" fill="#c8e6cc"/>
<path d="M982.9,299.1l4.5,0.3 -1.1,1.1 -3.4,-0.3z" fill="#c8e6cc"/>
<path d="M950.8,275.7l2.9,-0.3 -1.5,1.2zM951.7,280.5l1.7,2.3 -0.9,-1.7zM957.9,282.2l2,2.2 -0.9,-1.6z" fill="#f3f8f3"/>
<path d="M998.4,305l1.5,0.3 -0.9,0.9zM999.9,309.3l1.1,0.5 -0.6,0.6zM999.9,313.5l0.8,0.6 -0.6,0.2zM997.9,320.5l2.8,0 -0.3,2 -2.5,0zM1004.1,313.5l0.9,0.3 -0.3,0.5z" fill="#f3f8f3"/>
<path d="M953.9,326.5l1,-1.9 1.8,-0.9 1,-1.7 1.6,-1.2 1.6,-1 1.9,-0.3 1.9,-0.2 1.7,-0.7 2.4,-1.4 2.4,-1.2 -1.9,2.6 -1.1,1.6 -1.3,1.5 -0.4,1.9 -0.1,2 0.5,2.2 0.9,2.1 1.8,0.2 1.7,0.8 1.8,0 1.8,0.4 1.7,0.9 1.7,0.5 1.9,0.4 1.8,0.4 -0.2,3.1 -0.6,3.1 1,2.9 1.2,2.8 0,2.2 -1.8,1.3 -2.1,-0.2 -2,-0.3 -2,-0.5 0.4,3 0.7,2.9 0.1,2.3 -0.3,2.4 -1,2.1 -0.5,2.2 -1.3,-1.2 -1.7,-0.9 -1.1,-1.6 -1.5,-1 -2.8,-1 -2.8,-1.1 -1.6,-2.5 -1.9,-2.2 -1.5,-1 -1.5,-1.1 -1.8,0 -1.7,-0.5 -2.3,-0.7 -2,-1.2 1.5,-1.5 1.7,-1.4 0.9,-2 0.2,-2.2 0,-7 -1.2,-2 0.7,-2.1z" fill="#96d29b"/>
<path d="M971.2,316l0.5,2 0.4,2 -0.5,2.2 -0.9,2 1.6,-0.9 1.4,-1.2 0.6,-1.8 0.6,-1.7 0,-2 2,2.4 2.8,1.5 3.4,-0.5 3.2,1.1 2,0.8 2.2,0.3 1.8,-0.1 1.8,-0.5 1.7,-0.7 1.8,-0.1 1.4,2.4 1.4,2.4 2.9,1.4 -0.8,1.9 -0.6,1.9 -1.2,1.6 -1.1,1.7 1.7,2.2 -1.8,0.3 -1.3,1.2 -1.1,1.4 -1.8,0.5 -4.8,0 0.1,2.7 1.3,2.4 -2.1,1.8 -2.1,1.9 -2.3,0.2 -2,-1.1 0,-2.2 -1.2,-2.8 -1,-2.9 0.6,-3.1 0.2,-3.1 -1.8,-0.4 -1.9,-0.4 -1.7,-0.5 -1.7,-0.9 -1.8,-0.4 -1.8,0 -1.7,-0.8 -1.8,-0.2 -0.9,-2.1 -0.5,-2.2 0.1,-2 0.4,-1.9 1.3,-1.5 1.1,-1.6z" fill="#c8e6cc"/>
<path d="M1003.3,327l1.8,2.6 2.4,2.2 1.5,1.7 2.2,0.6 -0.3,2.2 -0.7,1.9 -1.3,1.5 1.3,1.3 1.3,1.4 1.3,1.4 0.4,1.8 -1.9,0.1 -1.9,-0.4 -1.9,0.7 -1.4,1.3 -1.5,-1.6 -1.3,-1.8 -0.4,-1.7 -0.1,-1.8 0.4,-1.8 0.6,-1.7 -2.5,-0.6 -1.7,-2.2 1.1,-1.7 1.2,-1.6 0.6,-1.9z" fill="#f3f8f3"/>
<path d="M1011.2,334.1l2.3,-0.2 2.2,0.3 2.3,0.6 2.3,-0.2 -0.7,1.9 -0.8,1.8 0.5,3.1 0.4,3.1 -3.3,0.4 -3.2,0.7 -0.4,-1.8 -1.3,-1.4 -1.3,-1.4 -1.3,-1.3 1.3,-1.5 0.7,-1.9z" fill="#f3f8f3"/>
<path d="M1020.3,334.6l1,1.4 1.3,1.1 1.7,0.3 1.6,0.6 0.9,1.2 -1.7,2.1 -0.6,2.6 -2.4,0.3 -2.4,0.3 -0.4,-3.1 -0.5,-3.1 0.8,-1.8z" fill="#dcf0df"/>
<path d="M949.4,346.8l2,1.2 2.3,0.7 1.7,0.5 1.8,0 1.5,1.1 1.5,1 0.5,1.8 -1.1,1.5 0.2,1.8 -0.5,1.7 -1.7,1.9 -2,1.7 -2.5,0.6 -2.3,1.4 -2.7,-1.2 -2.4,-1.9 -0.2,-1.8 0.1,-1.8 -1.1,-1.5 -0.8,-1.7 1.3,-2.2 1.6,-2 1.4,-1.4zM914,351.8l2,0.3 -0.9,1.7z" fill="#c8e6cc"/>
<path d="M945.7,360.6l2.4,1.9 2.7,1.2 2.3,-1.4 2.5,-0.6 2,-1.7 1.7,-1.9 0.5,-1.7 -0.2,-1.8 1.1,-1.5 -0.5,-1.8 1.9,2.2 1.6,2.5 2.8,1.1 2.8,1 1.5,1 1.1,1.6 1.7,0.9 1.3,1.2 -2.4,0.8 -2.2,1.2 -2.4,1 -1.5,2.1 -1.7,1.9 -1.1,2.3 0.1,2 1.7,1.1 1.2,1.3 1.2,1.3 5.7,0 0,4.2 2.8,0 1.5,2 0.8,2.2 0,2 0.9,1.7 -0.6,1.8 -1.1,1.6 -0.8,1.7 -0.3,1.8 -0.2,1.7 -0.2,1.9 -1.4,0.9 -1.1,1.3 -2.6,-1.4 -1.9,-2.3 -1.4,-1.1 -1.2,-1.3 -1.1,-1.5 -1.7,-0.8 -1.6,-0.6 -1.4,-1.2 -1.8,-0.5 -1.2,-1.4 -0.8,-2.8 -2,-2.2 -1.6,-2.3 -1.3,-2.6 -1,-2.4 -1.2,-2.3 -2.1,-1.8 -0.5,-2.8 -1,-1.6 -1.3,-1.4 -0.6,-2 -1.6,-1.2 0.8,-2.8z" fill="#c8e6cc"/>
<path d="M976.3,382l2.9,-1.3 2.9,-1.2 3,-0.5 3.1,-0.4 1.7,3 -0.8,3.2 1.6,0.7 1.7,0.6 1.3,1.1 1.3,1.3 1.7,-0.3 1.7,0.4 1.7,0.6 1.7,-0.1 0.5,1.9 1.2,1.7 -0.1,2 -0.1,2 2.4,-0.6 2.4,0.9 0.5,2.7 1.7,2.1 -0.7,2.6 -1.2,2.4 -2.8,-0.1 -2.7,-0.6 -2.6,1 -2.7,0.3 -1.2,3 -0.2,3.2 -2.8,0.9 -2.9,-0.6 -2.5,-0.7 -2.6,-0.7 -1.2,1.4 -1.3,1.4 -1.4,-1.8 -1.4,-1.7 -0.4,-2.2 -0.5,-2.2 -0.6,-1.8 -0.6,-1.8 0,-2.2 -1.7,-1.2 0.2,-1.9 0.2,-1.7 0.3,-1.8 0.8,-1.7 1.1,-1.6 0.6,-1.8 -0.9,-1.7 0,-2 -0.8,-2.2z" fill="#c8e6cc"/>
<path d="M973.8,402.6l1.1,-1.3 1.4,-0.9 1.7,1.2 0,2.2 0.6,1.8 0.6,1.8 0.5,2.2 0.4,2.2 1.4,1.7 1.4,1.8 -1.4,2.8 -2.3,2 0,7 -0.5,2.5 -0.3,2.4 -1.8,1.8 -1.7,1.8 0,8.5 -0.6,2 -0.6,2.1 -0.4,2.1 0.2,2.2 -0.8,2.1 -0.8,2 0.1,2.2 -0.5,2.2 -1.3,1.8 -0.2,2.3 0,2.2 -0.2,2.1 0.3,2.1 0.3,2.2 -0.7,2 0.4,2.2 -1.1,1.9 -0.2,2.3 -0.8,2.1 -0.2,2.2 0,7 0.3,2.3 1.2,1.9 2.5,-0.1 2.5,-0.1 2.4,0.8 2.5,0.3 -1,1.7 0.4,1.9 0.8,1.8 -0.5,1.9 3,-0.3 2.9,0.6 -2,0 -1.8,-1 -1.7,1.2 -1.5,1.2 -2.3,-0.2 -2.1,-1 -2,-1.1 -2.1,-0.5 -1.8,-1.5 -1.6,-1.5 -2.6,-0.4 -1.1,-2.3 -0.1,-2.6 -1,-2.4 -0.6,-2.5 -1.2,-2.3 0,-7.1 1.3,-1.9 1.8,-1.4 1.2,-1.9 1.4,-1.8 -0.4,-1.8 0.3,-1.9 -0.3,-1.8 -1,-1.6 -0.1,-3.2 1,-3.1 -0.3,-3.2 0.8,-3.2 1,-1.7 0.1,-2 0.7,-1.8 1.5,-1.3 0.3,-1.9 0.8,-1.8 -0.1,-2 1.4,-1.6 0,-8.4 1.3,-2.7 0.8,-2.8 -0.1,-2.9 0.8,-2.9 1.1,-2.7 -0.5,-2.9 -0.6,-2.9 0.9,-2.8 -0.3,-1.9 -0.6,-1.8 0.6,-1.9z" fill="#96d29b"/>
<path d="M982.9,415.3l1.3,-1.4 1.2,-1.4 2.6,0.7 2.5,0.7 2.9,0.6 2.8,-0.9 1.8,2.2 2.4,1.5 2.1,1.7 2.4,1 2.5,1 2.4,1.1 -0.3,3.1 -2,2.5 1.7,0.8 1.8,0.1 1.8,-0.2 1.8,-0.4 2.3,-2.1 1.7,-2.7 1.8,0.7 0.7,1.8 -1.6,1 -1.3,1.5 -1.4,1.3 -1.4,1.3 -1.6,1.1 -1,1.6 -1.5,1.3 -1.2,1.4 0,2 -0.5,2 -0.9,1.8 -0.3,2.1 -0.6,2.8 1.4,2.1 2,1.5 0.7,1.7 0.7,1.7 -1,2.8 -2.1,2 -3.1,0.2 -2.8,1.5 -3,-0.4 -3,1 -0.7,2.3 -0.2,2.5 -1.9,0.3 -1.8,0.4 -2,-0.2 -1.9,0.3 0,4.3 2,0.4 2,0.1 -1.3,1.4 -1.2,1.6 -1.5,1.2 -0.9,1.7 -1.4,1 -1.6,0.8 -1.4,1.2 -1.8,0.4 2.6,2 2.2,2.2 -1.3,2 -1.7,1.6 -1.6,1.8 -1.6,1.7 -1.8,1.9 -1,2.3 1.7,2.3 -2.7,0 -2.4,-1 -2.6,0.3 -2.5,-0.2 -1.2,-1.9 -0.3,-2.3 0,-7 0.2,-2.2 0.8,-2.1 0.2,-2.3 1.1,-1.9 -0.4,-2.2 0.7,-2 -0.3,-2.2 -0.3,-2.1 0.2,-2.1 0,-2.2 0.2,-2.3 1.3,-1.8 0.5,-2.2 -0.1,-2.2 0.8,-2 0.8,-2.1 -0.2,-2.2 0.4,-2.1 0.6,-2.1 0.6,-2 0,-8.5 1.7,-1.8 1.8,-1.8 0.3,-2.4 0.5,-2.5 0,-7 2.3,-2zM978.9,499.6l9.6,5.7 -3.7,0.8 -5.9,-0.3z" fill="#96d29b"/>
<path d="M996.2,413.6l0.2,-3.2 1.2,-3 2.7,-0.3 2.6,-1 2.7,0.6 2.8,0.1 -0.3,1.7 -0.1,1.7 0.8,1.6 0.7,1.5 2.9,0.9 3,-0.3 0.7,2.3 -0.1,2.5 1.7,-0.1 1.7,0.4 -0.8,2 0,2.2 -1.7,2.7 -2.3,2.1 -1.8,0.4 -1.8,0.2 -1.8,-0.1 -1.7,-0.8 2,-2.5 0.3,-3.1 -2.4,-1.1 -2.5,-1 -2.4,-1 -2.1,-1.7 -2.4,-1.5z" fill="#dcf0df"/>
<path d="M1010.1,436.2l2.7,0.8 2.6,1.1 2,0.5 1.2,1.7 1.3,1.6 1.8,0.7 0.3,3.4 -2.2,1.7 -2.1,1.7 -2.2,-0.7 -2.3,0.4 -2.7,-1 -2.7,-1.2 0.6,-2.8 0.3,-2.1 0.9,-1.8 0.5,-2z" fill="#c8e6cc"/>
<path d="M1026.8,339.2l0.8,2 0.9,2 1.7,1.4 1.4,1.6 0,4.8 2.2,0.5 2.1,0.9 2.1,0.3 2.1,0.3 1.6,1.4 2.2,0.5 1.7,1.1 1.6,1.5 2.1,0.4 2.1,0.6 2.2,-0.3 2.1,1 1.7,0.6 1.8,0.3 1.8,0.5 1.8,0.3 2.2,2.2 2.9,1.4 2.7,0.5 2.7,0.9 0.4,2.8 1,2.6 -1.2,2.9 -0.2,3 -0.9,1.7 -1.7,0.9 -0.7,1.7 -1.6,1.1 -1.8,2.7 -2.4,2.4 -0.6,2.8 -0.8,2.8 0,7.9 -0.8,1.5 -0.8,1.5 -0.6,1.6 -0.7,1.6 -1.5,2.8 -1.3,2.8 -1.1,1.7 -1.7,1.2 -1.8,0.1 -1.8,-0.1 -1.8,0.2 -1.7,0.3 -3,1 -2.7,1.6 -1.5,0.9 -1.7,0.9 -0.9,1.6 -1.5,1.1 0,1.9 0.7,1.8 -0.4,1.8 -0.6,1.8 -2.2,1.6 -1.8,2.1 -2.2,1.2 -1.4,2 -0.6,2.5 -2,1.6 -2.2,1.8 -1.2,2.4 -0.3,-3.4 -1.8,-0.7 -1.3,-1.6 -1.2,-1.7 -2,-0.5 -2.6,-1.1 -2.7,-0.8 1.2,-1.4 1.5,-1.3 1,-1.6 1.6,-1.1 1.4,-1.3 1.4,-1.3 1.3,-1.5 1.6,-1 -0.7,-1.8 -1.8,-0.7 0,-2.2 0.8,-2 -1.7,-0.4 -1.7,0.1 0.1,-2.5 -0.7,-2.3 -3,0.3 -2.9,-0.9 -0.7,-1.5 -0.8,-1.6 0.1,-1.7 0.3,-1.7 1.2,-2.4 0.7,-2.6 -1.7,-2.1 -0.5,-2.7 -2.4,-0.9 -2.4,0.6 0.1,-2 0.1,-2 -1.2,-1.7 -0.5,-1.9 -1.7,0.1 -1.7,-0.6 -1.7,-0.4 -1.7,0.3 -1.3,-1.3 -1.3,-1.1 -1.7,-0.6 -1.6,-0.7 0.8,-3.2 -1.7,-3 -3.1,0.4 -3,0.5 -2.9,1.2 -2.9,1.3 -2.8,0 0,-4.2 -5.7,0 -1.2,-1.3 -1.2,-1.3 -1.7,-1.1 -0.1,-2 1.1,-2.3 1.7,-1.9 1.5,-2.1 2.4,-1 2.2,-1.2 2.4,-0.8 0.5,-2.2 1,-2.1 0.3,-2.4 -0.1,-2.3 -0.7,-2.9 -0.4,-3 2,0.5 2,0.3 2.1,0.2 1.8,-1.3 2,1.1 2.3,-0.2 2.1,-1.9 2.1,-1.8 -1.3,-2.4 -0.1,-2.7 4.8,0 1.8,-0.5 1.1,-1.4 1.3,-1.2 1.8,-0.3 2.5,0.6 -0.6,1.7 -0.4,1.8 0.1,1.8 0.4,1.7 1.3,1.8 1.5,1.6 1.4,-1.3 1.9,-0.7 1.9,0.4 1.9,-0.1 3.2,-0.7 3.3,-0.4 2.4,-0.3 2.4,-0.3 0.6,-2.6z" fill="#54ac5c"/>
<path d="M1000.4,496.8l9.1,-0.6 -3.4,2.3z" fill="#f3f8f3"/>
<path d="M965.9,129.6l1.9,-0.1 1.8,-0.8 1.7,-1 1.7,-0.8 2,-0.1 1.8,-0.7 1.9,-0.2 1.9,-0.5 2.2,-0.1 2.1,-0.9 2.1,-0.7 2.1,-0.7 2.3,-0.2 2,-1 2.2,-0.4 2,-1.1 2.2,0.2 2,1 2.2,0 2.2,-0.3 2,-0.7 2.1,-0.7 2.1,-0.2 2.2,-0.2 2.1,0.4 2.2,-0.4 2.1,0.1 2.1,-0.1 2,-1 2.2,-0.1 2.1,0.2 2.2,-0.1 2.5,2.2 3.3,0.2 3.2,0 3.1,-0.5 3.1,0.1 2.9,-1.2 3.1,0.2 3,-0.2 3.3,-0.6 3.3,0.4 2.7,-1.9 2.3,-2.2 3.1,-0.3 3.1,-0.4 3,1 3.2,0 3,0.5 2.4,1.9 2.9,0.1 2.9,0.3 3,0 2.7,-1.2 3,1.1 2.8,-1.5 1.8,0.2 1.7,0.6 1.9,-0.1 1.8,0.3 1.8,0.4 1.6,1 1.7,0.5 1.8,0.5 3.1,-0.8 2.5,1.9 2.9,0.5 2.8,-0.4 2.9,0.4 2.8,0.3 2.8,-0.2 2.9,-0.3 -1.7,0.7 -1.8,0.6 -1.9,0.3 -1.8,0.1 -1.9,0.2 -1.8,0.6 -1.5,1 -1.8,0.7 -2.1,1.5 -2.1,1.3 0.2,2.3 1.2,2 -1.7,0.7 -1.5,0.9 -0.8,1.8 -1.7,0.8 0.6,2.1 0.8,2.1 -1.4,2.5 -2.1,1.8 -2.5,1.4 -2.5,1.4 0,2.3 1.5,1.9 -1.5,1.2 -1.5,1 -1.5,1.1 -1,1.7 -1.8,0.3 -1.8,0 -1.8,0.5 -1.9,-0.2 -1.9,0.6 -2,0 -1.9,0.2 -2,0.3 -2,0 -1.8,1 -2,-0.5 -2,-0.2 -1.6,0.8 -1.7,0.5 -1.7,0.7 -1.5,0.9 -1.6,0.9 -1.8,0.2 -1.4,1.2 -1.4,1 -2.3,1.2 -2.6,0.6 -2.5,0.4 -2.6,0.1 -2,2.3 -1.1,2.9 -2.2,2.1 -1.7,2.6 -1.6,2.7 -2.7,1.8 -3,-0.5 -2.5,-1.6 -2.8,-1.2 -3,0.2 -2.7,-2 -2.7,-1.8 -2.6,-2.1 -2,-2.6 -1.7,-1.9 -1.1,-2.3 -1.8,-1.9 -1,-2.3 1.2,-2.3 1.7,-1.9 1.9,-1.7 2.3,-1.2 -2.4,-1.5 -2,-1.9 -2.8,0.1 -2.8,0.5 0.3,-3.1 -1.7,-2.5 -1.7,-2.8 -3.2,-0.8 -1.5,-2.7 -2.1,-2.2 -2.7,-1.1 -2.8,-0.7 -2.9,0.4 -2.8,-0.3 -2.9,0.4 -2.8,0.2 -2.9,-0.2 -2.8,-0.1 -1.9,-0.7 -1.5,-1.2 -1.8,0.4 -1.9,0.1 -1.8,-0.6 -1.7,-0.6 -1.8,-0.3 -1.8,0.1 -1.2,-1.6 -1.7,-0.8 -1.6,-1z" fill="#dcf0df"/>
<path d="M989.4,259.6l0.8,0 -0.3,0.6z" fill="#f3f8f3"/>
<path d="M1105.3,166.3l2.7,-1.5 3,-1 2.9,0.9 2.8,-1.3 2.7,1.1 2.9,-0.2 9.9,0 1.2,1.8 1.4,1.6 -2.2,0.6 -1.8,1.4 -2.6,1.1 -2.5,1.2 -2.9,0.2 -2.8,0 -2.6,-0.3 -2.6,-0.5 -2.6,-0.6 -2.7,0 1.5,-2.5 -2.8,-1.3z" fill="#dcf0df"/>
<path d="M1157.1,209.7l3.2,-0.1 3.1,-0.4 2.5,0.7 2.7,0.2 2.2,-1.4 2.5,-1 2,-0.4 2,-0.7 -2.6,-0.8 1.1,-2.4 2.3,-1 -2.2,-0.2 -2,-0.7 -0.7,-2 -0.5,-2.2 -2,-1.4 -1.9,-1.4 -1.7,-1.4 0,-2.3 0.5,-2.2 -5.6,0 0.6,-1.9 1.6,-1 -5.1,0 -2.1,1.2 -1.3,2 0.3,2.4 1.7,1.8 0.9,1.7 1.1,1.7 2.4,1.4 2.7,0.8 0,2 -4.3,0 0.9,2.8 -2.8,1.4 2.7,1.2 2.9,0 -1.8,0.6 -1.9,0.5 -1.8,1.1zM1152.6,195.9l5.1,1.1 -2,1.4 -5.1,-0.8zM1169,180.1l1.7,0.9 -1.4,1.1z" fill="#54ac5c"/>
<path d="M1145,205.5l2.6,0 2.5,-0.9 2.5,-0.5 2.6,-0.3 0.5,-2.7 0,-2.7 -2.5,-0.6 -2.6,-0.2 2,-1.7 -2.8,-0.6 -2.3,1.8 -2.5,1.1 1,1.5 0.4,1.8 -0.4,2.1z" fill="#54ac5c"/>
<path d="M1168.2,228.6l-0.8,-1.9 0.2,-2.1 0.9,-1.8 1.4,-1.5 -2.2,-1.5 -1.5,-2.2 -1.6,-0.6 -1.5,-0.7 -1.7,-0.4 -1.4,-1.1 2.2,0 2.3,0.1 2,-1.1 2.3,-0.1 0,-2.6 2.5,0.6 2.6,-0.3 2.3,-1.6 1.6,-2.3 2.6,-0.6 2.2,1.8 2.6,1.3 2.3,0.7 2.2,0.7 1.7,0 2.3,1.7 2.8,-0.3 -1,1.9 -0.7,2.1 -2.4,1.6 -2.1,2 2.8,1.2 0,4.8 1.5,1.1 -1.7,1.3 -2,0.7 -3.1,-0.6 -3.2,-0.6 -1,1.8 -1.5,1.3 -1.6,-0.8 -1.8,-0.1 -1.7,0.2 -1.7,-0.4 -1.8,-0.4 -1.8,-0.2 -1.8,-0.5zM1197.7,231.2l2.2,-1.5 0.3,3.1 -0.8,1.5 -1.4,-1.2z" fill="#2f8c47"/>
<path d="M1168.2,228.6l1.7,0.6 1.8,0.5 1.8,0.2 1.8,0.4 1.7,0.4 1.7,-0.2 1.8,0.1 1.6,0.8 0.3,1.4 -1.6,1 -1.3,1.3 -1.8,0.2 -1.8,0.1 -1.2,2.5 -2.3,1.7 1.5,2 -1.6,1.4 -1,2 -2,1.2 -2.2,1 -3.3,0.8 -3.3,-0.5 -1.7,0.7 -1.4,1.3 -2,-1.7 -1.2,-1.4 -1.9,-0.3 0.5,-1.8 0.1,-1.9 0.3,-1.7 0.3,-1.7 0.2,-1.8 0.3,-1.8 1.4,-2.6 -2.6,-0.4 -2.7,0.2 -2,-0.3 -0.9,-3.1 1.8,-0.5 1.6,-0.9 2.5,-0.1 2.6,-0.3 2.3,1 2.5,0.2zM1180.1,239.3l2.8,-0.8 -0.8,1.7zM1125.4,270.9l2,-0.3 -1.1,1.4zM1128.5,271.8l1.2,0 -0.6,0.8zM1132.8,270.3l1.1,-0.2 -0.8,1.7z" fill="#2f8c47"/>
<path d="M1148.1,232.3l2,0.3 2.7,-0.2 2.6,0.4 -1.4,2.6 -0.3,1.8 -0.2,1.8 -0.3,1.7 -0.3,1.7 -0.1,1.9 -0.5,1.8 -2.1,0.5 -2.1,0.1 -0.2,-2 0.5,-2 -2,-1.1 1.6,-2.1 0.4,-2.7 0.4,-2.3z" fill="#54ac5c"/>
<path d="M1180.4,206.9l2.5,-0.8 2.3,0 2.9,0.1 2.5,1.5 0,2 -0.9,1.7 -2.2,-0.7 -2.3,-0.7 -2.6,-1.3z" fill="#2f8c47"/>
<path d="M1182.9,206.1l2.3,0 2.9,0.1 2.5,1.5 -0.3,-2.8 1.5,-2.2 1.9,-2 -1.8,0.2 -1.6,-0.8 -1.9,0.6 -1.8,0.8 -2,2.1z" fill="#2f8c47"/>
<path d="M1190.6,207.7l-0.3,-2.8 1.5,-2.2 1.9,-2 2,-0.9 2,-0.8 0,-2.8 1.8,0.6 1.9,-0.3 1.6,1 1.5,1.2 2.3,0.2 2.2,0.4 2.2,-0.5 2.3,0.2 -0.1,2.1 0.1,2.1 0.7,1.9 0.5,2.1 1.1,0.3 -2.2,0.2 -2,-0.6 -2,0.8 -1.7,1.3 2.5,2 2,2.5 -1.3,1.6 -1,1.8 -1.8,0.2 -1.7,-0.5 -1.8,0 -1.7,0.5 -2.6,-0.2 -2.8,-0.5 -2.9,0.2 0.7,-2.1 1,-1.9 -2.8,0.3 -2.3,-1.7 -0.8,-1.7z" fill="#1a7d36"/>
<path d="M1197.7,196.2l-1.4,-1.7 0.2,-2.1 0,-2.1 1.7,-0.6 1.6,-0.6 1.7,-0.1 1.6,-0.7 -0.5,1.7 -0.4,1.7 2,0.3 -1.4,2.2 -1.4,2.3 -1.9,0.3zM1204.5,193.9l4.2,-0.8 -0.5,2.8 -3.2,-0.3z" fill="#54ac5c"/>
<path d="M1213.5,199l2.9,0 2.5,-1.4 2.6,-0.8 2.8,-0.3 2.2,0.2 2.1,0.9 2.4,-0.6 2.5,0.6 2.5,0.8 2.5,-0.5 1.8,1.9 0.7,2.6 -0.3,1.7 -0.5,1.7 1.4,2.8 -2.4,1.6 -1.9,2.3 -2.6,-0.5 -2.3,-1.2 -2.6,0.7 -2.7,0.2 -0.5,-0.3 -2.7,-0.9 -2.4,-1.3 -2.7,-1.4 -3,-0.3 -1.1,-0.3 -0.5,-2.1 -0.7,-1.9 -0.1,-2.1z" fill="#54ac5c"/>
<path d="M1207.9,209.2l1.7,-1.3 2,-0.8 2,0.6 2.2,-0.2 3,0.3 2.7,1.4 2.4,1.3 2.7,0.9 -2.4,1.3 -2.7,0.7 -2.9,0 -2.8,-0.6 -1.7,0.4 -1.7,0.5 -2,-2.5z" fill="#96d29b"/>
<path d="M1221.5,213.4l2.7,-0.7 2.4,-1.3 0.5,0.3 2.7,-0.2 2.6,-0.7 2.3,1.2 2.6,0.5 -1.4,2 -3.1,-0.9 -2.8,1.5 -2.9,0.4 -2.8,0.7 -2.8,-0.6z" fill="#c8e6cc"/>
<path d="M1200.5,217.1l2.6,0.2 1.7,-0.5 1.8,0 1.7,0.5 1.8,-0.2 1,-1.8 1.3,-1.6 1.7,-0.5 1.7,-0.4 2.8,0.6 2.9,0 0,2.2 -1.2,1.7 -1.4,1.4 -2.1,1.3 -2.4,0.2 -2.3,-0.3 -1.8,-0.7 -1.9,0.1 -2.7,-0.1 -2.6,-0.5 -2.6,-0.5z" fill="#54ac5c"/>
<path d="M1190.3,220.4l2.1,-2 2.4,-1.6 2.9,-0.2 2.8,0.5 0,1.1 2.6,0.5 -0.9,1.7 -1.8,0.4 -1.6,0.8 -5.7,0z" fill="#2f8c47"/>
<path d="M1193.1,226.4l0,-4.8 5.7,0 1.6,-0.8 1.8,-0.4 0.9,-1.7 2.6,0.5 2.7,0.1 1.9,-0.1 1.8,0.7 0.3,2.5 -2.2,0.1 -2,0.8 0.2,3.1 1.8,0.8 1.6,1.1 0.7,1.7 1,1.4 2.6,0.8 2.5,0.6 0,1.5 1.8,0.9 1.6,1.2 1.9,0.6 1.8,0.9 -0.8,0.9 -1.7,-1.3 -2,-0.7 -1.1,2.2 1.7,2 -1.5,1.4 -1.4,1.4 -1.4,0 1.1,-2.8 -1.1,-2.8 -1.7,-0.6 -1.4,-1.1 -3.4,-0.1 -2.3,-2.4 -1.9,-1.6 -2.3,-1 -1.4,-1.3 -0.6,-1.8 -2.2,-1.1 -2.1,-1.4 -1.7,1 -1.9,0.7zM1208.7,243.8l8.5,-0.5 -1.1,4.2 -7.4,-2.5zM1196.5,235.4l4.3,0 -0.3,5.1 -3.4,0.5z" fill="#2f8c47"/>
<path d="M1218.9,218.7l1.4,-1.4 1.2,-1.7 2.8,0.6 2.8,-0.7 2.9,-0.4 2.8,-1.5 3.1,0.9 2.3,1.1 -1,1.5 -1.3,1.2 -1.3,1.1 -1.2,1.3 -1.8,0.1 -1.6,0.7 -1.7,-0.2 -1.7,0.3 -3.3,-0.7 -3.2,-1z" fill="#96d29b"/>
<path d="M1212.1,219.9l2.3,0.3 2.4,-0.2 2.1,-1.3 1.2,1.2 -1.7,1.4 -1.7,1.4 -2.2,-0.1 -2.1,-0.2z" fill="#96d29b"/>
<path d="M1212.4,222.4l2.1,0.2 2.2,0.1 1.7,-1.4 1.7,-1.4 3.2,1 3.3,0.7 0.5,2.5 -2.1,-0.1 -2.1,-0.1 -2.1,0 -2.2,-0.4 0,3.4 1.8,1.1 1.7,1.2 1.9,0.8 1.7,1.2 -2.1,-0.8 -2.1,-0.7 -1.6,-0.8 -1.4,-1.1 -1.2,-1.3 -1.5,-1 -2.8,-1.4z" fill="#96d29b"/>
<path d="M1218.6,223.5l8.5,0.6 1.2,2.8 -2.6,4 -7.1,-4z" fill="#dcf0df"/>
<path d="M1227.1,224.1l-0.5,-2.5 1.7,-0.3 1.7,0.2 1.6,-0.7 1.8,-0.1 2.3,2.1 1.4,2.7 1,1.7 0.1,2 -1.7,2.5 -2.6,0 -2.2,1.1 -1.7,-2.2 -1.7,-2.3 0,-1.4z" fill="#96d29b"/>
<path d="M1225.7,231.2l2.6,-2.9 1.7,2.3 -1.7,2.2z" fill="#dcf0df"/>
<path d="M1228.3,232.8l1.7,-2.2 1.7,2.2 1.1,3.1 -1.5,1.5 -1.3,1.6 -1.7,-1.6z" fill="#dcf0df"/>
<path d="M1231.7,232.8l4.8,-1.1 2,2.8 -5.7,1.4z" fill="#dcf0df"/>
<path d="M1230,239l1.3,-1.6 1.5,-1.5 3,-0.2 2.7,-1.2 2.2,-0.9 2.4,-0.4 2.4,-0.2 2.3,0.4 -0.8,2.5 -2.9,0 -2.8,0.3 -1.5,0.9 -1.3,1.1 -0.6,2.3 2.3,1.1 1.1,2.2 -1,2.4 -1.8,1.9 -2.9,-0.3 -1.2,-1.6 -1,-1.8 -1.4,-2.8zM1240.2,250.9l7.4,0.6 -0.6,0.8 -6.8,-0.6zM1252.1,248.6l1.1,-0.2 -0.8,1.4z" fill="#54ac5c"/>
<path d="M1236.5,231.7l1.7,-2.5 -1.1,-2.8 3.2,-0.3 3.1,0.1 3.3,-0.1 3.1,0.5 2.3,0.1 2,1.1 -0.2,2.5 -1.2,2.3 -2.6,-0.2 -2.3,1 -2.3,-0.4 -2.4,0.2 -2.4,0.4 -2.2,0.9 -0.9,-1.4z" fill="#c8e6cc"/>
<path d="M1233.4,220.7l1.2,-1.3 1.3,-1.1 1.3,-1.2 1,-1.5 2.6,-0.4 2.6,0.2 2.7,0.4 2.6,-0.7 1.9,2.7 2.6,2.1 0,3.1 2.1,0.3 2.2,0.2 -1.5,2.4 -1.9,1.9 -2,-1.1 -2.3,-0.1 -3.1,-0.5 -3.3,0.1 -3.1,-0.1 -3.2,0.3 0,-0.9 -1.4,-2.7z" fill="#96d29b"/>
<path d="M1248.7,215.1l6.8,0.5 2.8,4.6 -5.1,2.8 0,-3.1z" fill="#dcf0df"/>
<path d="M1235.9,214.5l1.4,-2 1.9,-2.3 2.4,-1.6 -1.4,-2.8 2.4,0.4 2.4,0.3 2.4,-0.4 2.4,-0.6 2.5,-0.3 2.5,0.4 2.5,0.2 2.4,0.5 2,-1.4 2.3,-1.1 5.7,0 2.5,2.2 1.7,2.9 3.3,0 3.1,0.9 3.2,0.5 3.2,0.8 0,4.5 -2.6,1.2 -2.5,1.4 -2.4,0.3 -2.2,0.7 -2.3,0.8 -2.2,0.7 2.1,1.4 2.4,0.9 -2.1,1.3 -1.8,1.6 -2.4,-0.8 -2.5,0.7 -1.5,-1.3 -1.3,-1.5 1.3,-1.1 1.5,-0.9 -1.6,-0.7 -1.8,-0.4 -1.8,0 -1.8,-0.3 -1.6,2.3 -2.1,1.6 -2.2,-0.2 -2.1,-0.3 2.2,-2 2.9,-0.8 -1.1,-2.5 -1.7,-2.1 -1.7,-0.1 -1.7,-0.2 -1.7,0.1 -1.7,-0.3 -2.6,0.7 -2.7,-0.4 -2.6,-0.2 -2.6,0.4z" fill="#c8e6cc"/>
<path d="M1240.2,205.8l0.5,-1.7 0.3,-1.7 -0.5,-1.7 -0.6,-1.7 2.4,-1 1.9,-1.7 2.4,-0.9 2.1,-1.5 2.3,-0.3 2.2,-0.8 1.8,1.1 1.8,1 2.1,0.2 2,-0.9 1.5,1.3 1.1,1.6 1.1,1.6 1.4,1.4 -1.7,0.8 -1.7,0.4 1.4,2.5 -2.3,1.1 -2,1.4 -2.4,-0.5 -2.5,-0.2 -2.5,-0.4 -2.5,0.3 -2.4,0.6 -2.4,0.4 -2.4,-0.3z" fill="#c8e6cc"/>
<path d="M1232.8,195.1l0,-2.3 2.8,-0.5 2.7,-0.7 2.8,-0.1 2.8,0.5 2.2,1.2 2.6,0.7 -2.1,1.5 -2.4,0.9 -1.9,1.7 -2.4,1 -1.4,-1.1 -0.6,-1.7 -2.4,-1.1z" fill="#c8e6cc"/>
<path d="M1232.8,192.8l1.1,-1.8 0.3,-2.1 2,-0.4 2,0 2.1,0.3 1.9,-1.1 2.2,0 2.2,0.2 2.1,0.8 2.3,0.2 0.6,2.2 1.6,1.7 -2.2,0.8 -2.3,0.3 -2.6,-0.7 -2.2,-1.2 -2.8,-0.5 -2.8,0.1 -2.7,0.7z" fill="#dcf0df"/>
<path d="M1239.9,185.5l2.3,2.2 8.8,1.2 1.7,-5.7 -10,0zM1235.6,185.7l2.9,0.3 -1.4,1.4z" fill="#c8e6cc"/>
<path d="M1235.6,181.8l8.5,0 2.1,-0.1 2,-0.3 2,-0.3 1.9,-0.7 2.1,-2.4 2.5,-1.9 2.9,-1.3 3,-1.2 -1.1,-2.9 -2.1,-2.4 -1.4,-2.8 -1.1,-2.9 0,-2.1 0.3,-2.1 -0.3,-2.2 -1.4,-1.8 -2.3,0.4 -2.1,0.7 -2.4,-0.2 -1.7,-1.7 -0.9,3.1 -2.9,-0.4 -2.7,1 -2.3,0 -2.1,-0.6 -2.2,-0.6 -2.2,0 1.9,1.4 2.1,0.9 2.3,0.2 2.2,0.9 0.7,2.9 0.4,3 1.9,1.1 1.8,1.2 -3.1,0.3 -2.9,1.4 -2.6,1.6 -2.2,2.3 0,5.7z" fill="#54ac5c"/>
<path d="M1204.8,184.9l1.1,2.5 1.5,3.1 2.2,2.6 2.1,0.8 2.1,0.9 1,-1.6 1.6,-1.1 1.9,0.2 1.8,-0.6 0.2,-3 0.6,-3 1.2,-1.3 1.5,-1.1 1.7,-0.7 1.6,-0.8 -2.5,-2 -2.4,-2.2 1.2,-1.6 1.1,-1.5 1.5,-1.2 1.5,-1.2 1.8,-0.5 1.7,-1 1.8,-0.6 1.6,-0.9 2,-0.7 1.9,-0.4 1.4,-1.5 1.8,-1.1 -0.4,-3 -0.7,-2.9 -2.2,-0.9 -2.3,-0.2 -2.1,-0.9 -1.9,-1.4 -1.9,0.1 -2,0 -1.5,1.3 -2,0.3 -1.9,1.5 -1.5,1.7 -1.9,1.5 -1.8,1.5 -2,2.2 -0.8,2.9 -1.6,0.7 -1.6,0.9 -1.5,1 -1.8,0.2 0.1,2.9 -0.4,2.8 0.4,1.9 0.7,1.7 -2.1,1.7zM1224.9,187.7l2.2,0.3 -1.9,2.3z" fill="#54ac5c"/>
<path d="M1204.8,184.9l1.8,-2 2.1,-1.7 -0.7,-1.7 -0.4,-1.9 0.4,-2.8 -0.1,-2.9 1.8,-0.2 1.5,-1 1.6,-0.9 1.6,-0.7 0.8,-2.9 2,-2.2 1.8,-1.5 1.9,-1.5 1.5,-1.7 1.9,-1.5 2,-0.3 1.5,-1.3 2,0 1.9,-0.1 2.2,0 2.2,0.6 2.1,0.6 2.3,0 2.7,-1 2.9,0.4 0.9,-3.1 1.7,1.7 2.4,0.2 2.1,-0.7 2.3,-0.4 2.6,0.3 2.5,-0.5 0.6,-1.4 -2.1,-1.1 -1.9,-1.2 -2.3,-0.1 -2.2,0.1 -3.2,-0.6 -3.3,-0.2 -3.1,1.2 -3.2,0.4 -3.1,1.2 -3.2,0.2 -3.2,0.7 -3.3,0.2 -2.7,1.4 -2.4,2 -3.2,-0.1 -3,0.9 -1.7,1.4 -2.1,0.4 -1.1,1.9 -0.8,2 -1.7,1.4 -1.8,1.4 -1.8,1.3 -1.7,1.5 -2,0.7 -1.3,1.6 -1.9,0.4 -1.9,0.4 -2.1,1.2 -1.9,1.4 -2.3,0.5 -2.2,0.9 0,7 2.4,1.6 1.8,2.4 2.9,-0.1 2.8,-0.2 2.9,-1.3 2.8,-1.5z" fill="#54ac5c"/>
<path d="M1247,235.9l0.8,-2.5 2.3,-1 2.6,0.2 1.2,1.4 1.6,0.8 7.1,0 2.5,-0.7 2.6,0.5 2.2,-1.5 2.6,-0.5 2.2,0.4 2,1.1 2.1,0.7 2.2,0.6 2.4,-0.6 2.6,0 2.5,0.1 2.4,-0.9 3,-0.1 2.7,1.2 1.6,2.2 2.1,1.7 -0.9,2.4 -0.8,2.4 1.7,2.3 -1.7,0.2 -1.7,-0.2 -1.7,0.2 -1.7,0.1 -1.8,-0.5 -1.6,0.9 -1.7,0.3 -1.7,0.1 -9.4,0 -2,2.3 0,-1.7 -2.8,0.7 -2.8,0.1 -2.9,0.3 -2.8,0.3 -2.1,-1.1 -2.2,-0.9 -1.9,1.4 -2.3,0.3 -2.6,-0.1 -2.2,-1.3 -1.9,-2.3 -1,-2.8 -0.2,-2.8 0,-1.9z" fill="#54ac5c"/>
<path d="M1264.8,252.3l2,-1.1 4.6,-0.9 -2,2 -2.6,1.1z" fill="#c8e6cc"/>
<path d="M1286.7,228.3l1.2,1.4 1.6,0.9 1.1,1.5 0.3,1.9 3,-0.1 2.7,1.2 2.1,0 2.1,-0.3 2.1,0.4 2.2,-0.1 0,-2.3 -1.7,-0.8 -1.8,-0.3 -1.8,-0.4 -1.8,-0.4 -2.9,-0.5 -2.8,-0.7 -2.8,-0.9z" fill="#dcf0df"/>
<path d="M1296.6,235.1l3.7,3.9 4.8,2.3 -1.4,-3.7 -2.9,-2.8z" fill="#c8e6cc"/>
<path d="M1300.8,234.8l2.1,0.4 2.2,-0.1 0,-2.3 3,-0.2 2.9,0.5 2.5,2.1 2.4,2.2 -1.9,1.8 -1.8,1.8 -0.3,1.7 -1.5,-1.4 -1.1,-1.7 -2.2,0.6 -2,1.1 -0.5,-1.9 -0.9,-1.8 -1,-1.8z" fill="#dcf0df"/>
<path d="M1252.7,183.2l2.8,-0.6 2.8,-0.8 -3.2,0 -3,-1.4 2.1,-2.4 2.5,-1.9 2.9,-1.3 3,-1.2 -1.1,-2.9 -2.1,-2.4 -1.4,-2.8 -1.1,-2.9 0,-2.1 0.3,-2.1 -0.3,-2.2 -1.4,-1.8 2.6,0.3 2.5,-0.5 3,1.3 3.2,-0.2 2.2,-0.4 2.1,0.6 2.1,0.1 2.1,0.3 1.9,0.4 1.8,0.4 1.9,0.3 1.9,-0.3 1.9,0.4 2,0.3 1.8,0.9 1,1.8 0,4.2 -2.1,0.3 -2.2,-0.4 -2,0.7 -2.2,0 -3.3,-0.1 -3.1,-0.9 -3.2,-0.2 -3.2,-0.8 1.6,1 1.2,1.5 1.3,1.7 -0.4,2 3.2,0.9 3.1,1.1 1.3,-1.1 1.5,-0.9 7.1,0 -1.4,-2.8 2.1,-0.6 2,-1 2.1,-0.8 2.3,0.1 1.1,-1.4 1.7,-0.9 0.3,-1.8 0.3,-1.8 2.7,-0.2 2.4,1.3 -2.3,1.6 -2,1.8 7.1,0 1.9,-1.3 1.7,-1.5 2.3,-0.1 2.3,-0.4 2.3,0.3 2.2,0.3 2.1,-0.8 2.2,-0.7 2.1,0.2 2.2,0.1 1.9,-0.8 1.7,-1.1 2,0.9 2.1,-0.1 2,-0.1 1.9,0 2,-0.2 1.9,0 1.3,-1.8 1.6,-1.3 2.1,0.4 2,1 2.2,-0.1 2.2,0.1 3.1,1.2 2.9,1.8 1.7,0.3 1.7,0.6 1.7,-0.3 1.6,-0.5 -1.7,-2.3 -2.5,-1.4 -0.2,-2.1 -0.4,-2.1 1.1,-1.4 1.4,-1.1 0.9,-1.5 1.4,-1.1 11.4,0 -0.2,2.6 1,2.5 -1,1.9 -1.5,1.5 0.3,2.1 -0.1,2.1 2.3,2 2,2.2 -2.3,0.1 -2,1.3 2,-1 1.5,-1.5 2.1,-0.6 1.5,-1.7 0,-11.2 1.4,-2.3 2.4,0.9 2.6,0.3 2.5,0.1 2.5,0.4 2.7,-0.9 2.9,0.1 0,-3.2 2.4,0.3 2.2,0.9 2.4,-0.2 2.3,-0.5 2.3,-0.3 2.4,-0.1 2.2,-0.6 2.3,-0.6 0,-3.4 2,0.7 1.9,-0.8 1.9,-0.5 2,-0.1 2.1,-0.2 1.8,0.9 2,0.3 2,-0.2 1.9,-0.6 2,-0.1 2,-0.2 1.9,-0.1 2,-0.5 1.6,-1.3 2,-0.8 2,0.4 2.3,-0.8 1.9,-1.3 2.4,-0.5 1.9,-1.4 2.3,0 2.4,0.3 2.3,-0.4 2.4,0.2 3.1,0.3 3.1,0.8 2.5,0.3 1.9,1.7 2.2,1.1 2.5,-0.2 2.2,1.1 2.4,0 2.4,-0.5 2.3,0.7 0.7,3.2 0.8,3 3.2,-0.3 3.2,-0.2 1.6,0.6 1.3,1 1.7,-0.4 1.7,-0.1 2.2,-0.2 2.1,0.8 2,-0.8 2.2,0.2 2.2,0.5 2.2,0.5 2.1,-0.9 2,-0.9 2.3,0.4 2.1,1.1 1.8,1.5 2.3,0.6 1.3,1.8 1.7,1.1 2,0.7 2.1,0.4 2.2,0.1 2.1,-0.7 2.1,-0.8 2.1,-0.6 2,0.1 1.9,0.7 1.9,0.1 2,-0.2 1.9,0.8 2,0.6 1.9,-0.6 2,-0.6 2.9,-1.5 2.8,-1.9 1.7,0.2 1.8,0 1.8,0.3 1.7,-0.6 1.7,0.6 1.3,1.2 1.6,0.8 1.7,0.4 1.8,-0.1 1.7,-0.3 1.9,-0.4 1.2,-1.4 1.8,0.2 1.7,0.4 1.7,-0.1 1.8,-0.1 2.4,0.2 2.1,0.9 1.8,1.6 2.2,1 2.3,0.4 2.5,0.2 2,1.4 2.4,0.5 2.1,-1.1 2.4,-0.3 2.3,-0.6 2.4,-0.3 1.5,1.6 1.3,1.8 2.8,1.1 2.9,-0.2 2.9,0.3 2.8,0.3 3.2,-0.1 2.3,-2.2 2.9,-0.1 2.9,0.1 1.8,0.9 1.9,0.3 1.6,1.1 1.8,0.8 0.6,-1.8 0.8,-1.6 2.5,0.4 2.5,-0.2 2.5,0.1 2.5,-0.2 2.6,-0.2 2.5,0.4 2.3,0.9 2.5,0.8 2.7,0.7 2.9,0.4 0,11 -1.7,0.4 -1.8,0.3 -1.8,0 -1.8,0.4 1.2,1.4 1.4,1.2 0.7,1.6 1,1.5 -3.2,0.5 -3.2,0.5 -3.1,0.9 -3.3,0.3 -2.9,1.4 -3,1.2 -2.7,2 -3.3,0.5 -2.9,-1.1 -3.1,-0.4 -3,0.7 -3.2,0 -1.8,0.1 -1.8,0.2 -1.7,0.5 -1.7,0.6 0.1,2.5 -0.7,2.5 -1.6,2.6 -1.5,2.5 0.3,2.1 -0.9,1.9 -1,1.6 -1.3,1.2 -1.6,1.1 -1.8,0.6 -2.8,1 -2,2.4 -2.2,1.5 -2.3,1.3 -0.8,-2.8 -0.8,-2.9 0.4,-3.1 -1.9,-2.5 -0.5,-2.9 1,-2.7 1.7,-1.4 1.7,-1.5 2.1,-0.3 1.7,-1.1 2.1,0.1 2,0.3 1.5,-1.4 1.8,-0.9 1.4,-1.4 1,-1.7 0.6,-2.3 2,-1.5 1.9,-1.1 1.8,-1.3 -3.1,0 -3.1,0.5 -2.4,2.1 -1.9,2.4 -0.9,-3.1 -2.3,0.4 -2.4,-0.4 -2.4,-0.2 -2.2,1.1 -1.5,1.6 -2,1.1 -1.7,1.4 -1.6,1.5 -1.4,1.1 -1.7,0.3 -1.7,-0.4 -1.7,0.4 -2.6,0.2 -2.4,-0.8 -2.5,-0.3 -2.5,0.1 -2.1,0.7 -2.2,-0.6 -2.2,-0.5 -2.2,0.4 -2.3,-0.3 -2.2,-0.3 -2.2,0 -2.1,0.9 -2,2.2 -2.2,2 -2.8,1 -2.9,0.7 -2.9,1 -2.8,1.4 -2.9,1.3 -1.4,3 2.7,1.7 3,0.9 2.4,0 2.2,0.5 2.3,0.6 2.2,0.9 1.3,1.2 1.2,1.3 -1,2.8 -1.5,2.6 -0.3,2.9 -1.1,2.7 -1.5,1.2 -1.5,1.2 -1.2,1.5 -1.5,1.2 -1.9,1.7 -2.5,1 -1.7,1.9 -1,2.4 -1.8,1.2 -2.1,-0.1 -1.5,1.5 -1.7,1.1 -2.8,-0.3 -2.8,0.6 -0.9,0.8 0.7,-1.6 0.2,-1.8 0.3,-2 0.5,-1.9 2.5,-0.2 2.3,-0.7 1.6,-1.8 1.5,-2 0.5,-2.5 1.2,-2.1 -2.7,0.1 -2.4,1.3 -2.7,0.3 -2.6,-0.3 -0.8,-1.5 -0.7,-1.6 -2.3,0.4 -2.2,-0.8 -2.3,-0.7 -1.7,-1.7 -0.9,-2.2 -1.3,-2 -1.1,-2.1 -0.9,-2.2 -2,0.3 -1.5,-1.4 -1.9,0 -1.7,-0.9 -2.5,0.3 -2.5,0 -2.5,-0.5 -2.4,0.8 0,4.8 -0.9,2 -1.8,1.3 -1.6,1.5 -2,0.8 -3.1,-0.5 -3.2,0 -3,-1.2 -2.9,0.4 -2.9,0.6 -2.7,1.2 -2.8,0.7 -2.7,0.4 -2.6,-0.1 -2.4,-1.2 -2.3,-1.4 -3.3,-0.2 -3.3,-0.8 -1.8,-0.1 -1.5,-1 -1.7,0.2 -1.7,0.5 -0.8,-2.8 -2.5,-1.2 -2.6,-0.7 -2.8,-0.4 -2.6,0.9 -0.7,3 -1.6,2.6 -2,-0.5 -2,-0.1 -2,0.1 -1.9,0.8 -1.8,-1 -2,-0.4 -1.9,-0.6 -2,-0.3 -3,1.3 -3.2,0 -2.6,1.9 -3.1,1.1 -1.4,0 -2.9,-1.6 -3,-1.4 -3.3,-0.7 -3,-1.4 -2.1,-0.1 -2.1,0.3 -2.2,0 -2.1,0.3 -2.6,-1.4 -2.5,-1.4 -2.4,-1.9 -1,-2.9 -2.4,-0.7 -2.5,-0.5 -2.5,-0.4 -2.5,0.5 -1.8,0 -1.7,-0.4 -1.8,-0.3 -1.8,-0.1 -2.9,-1.4 -2.8,-1.7 -2.4,0.8 -2.4,0.7 -2.6,-0.2 -2.4,0.8 -2.6,-0.6 -2.6,-0.2 -2.3,1.5 -2.5,0.8 -1.3,1.6 -1.5,1.2 0.6,2.9 0.8,2.8 -8.5,0 -2.1,1.6 -2.8,0.2 -2.4,-1 -2.6,0 -2.7,-1.4 -2.7,-1.2 -3,-0.4 -3,0.2 -2.1,0.6 -1.8,1.2 -1.9,1.2 -1.3,1.8 -1.6,0.9 -0.9,1.6 -1.3,1.3 -0.4,1.8 2.2,2 2,2.3 1.5,0 -0.5,1.7 -1.2,1.3 -1.2,1.3 -1.4,1 0,4.5 1.7,1.6 1.4,1.8 -2.9,-0.5 -3,0.2 -1.7,-0.8 -1.8,-0.3 -1.8,-0.4 -1.8,-0.4 -2.9,-0.5 -2.8,-0.7 -2.8,-0.9 -2.8,-0.5 -2.7,-1.5 -3,-1 -1.6,-1.1 -1.2,-1.4 1.3,-2.1 2.1,-1.3 1.6,-0.7 1.5,-1 -3.1,0 2.5,-1.4 2.6,-1.2 0,-4.5 -3.2,-0.8 -3.2,-0.5 -3.1,-0.9 -3.3,0 -1.7,-2.9 -2.5,-2.2 -5.7,0 -1.4,-2.5 1.7,-0.4 1.7,-0.8 -1.4,-1.4 -1.1,-1.6 -1.1,-1.6 -1.5,-1.3 -2,0.9 -2.1,-0.2 -1.8,-1 -1.8,-1.1 -1.6,-1.7 -0.6,-2.2 1.5,-2.7zM1228.6,197.6l4.2,-2.5 5.1,1.1 0.6,1.7zM1319.3,149.4l2.4,0.5 1.8,1.7 3.3,0.6 3,1.6 3.4,-0.4 3.1,-1.5 -1.2,-1.4 -1.1,-1.4 -1.7,-0.5 -1.7,-0.6 1,-2.1 0.4,-2.2 3.1,-0.2 2.7,-1.4 2.9,-1 2.6,-1.6 2.6,-1.8 3.1,-1 3.1,-0.5 3.1,0 3.3,-0.7 3,1.4 2.9,-1.3 3,-0.9 -1.8,0.5 -1.8,-0.3 -1.8,-0.3 -1.7,-0.7 -2.5,1.9 -3.1,-0.7 -2.8,0.9 -2.7,1.1 -2.5,1.8 -3.2,-0.2 -2.8,-0.7 -3,0.1 -3,1.1 -3,1 -2.5,2.1 -2.9,1.4 -1.5,1.7 -1.6,1.6 -1.7,1.7zM1442.5,128.2l14.2,-5.6 14.2,7 -14.2,1.4zM1561.6,138.1l22.6,0 14.2,1.4 -22.7,3.4zM1679.2,150.8l4.2,-1.4 0,1.7zM663.2,149.4l7.1,0.5 -7.1,1.2zM663.2,156.7l2,-0.3 1.8,0.7 1.9,-0.4 1.9,-0.1 2,0.4 1.4,1.4 1.9,0.8 1.2,1.5 2.8,0.7 2.8,0.8 2.8,1.2 3,-0.8 1.6,1.3 1.8,1 -1.7,0.9 -1.4,1.3 -1.4,1.2 -1.7,0.8 -3.1,0.3 -2.7,-1.2 -2.9,-0.8 -2.7,-1.1 -1.9,0 -1.7,-0.8 -2,-0.1 -1.5,-1.4 -1.9,2.1 -2.3,1.6zM1575.7,197.9l0.7,1.7 1.1,1.6 1.1,1.5 0.8,1.7 0.4,1.7 0,1.8 -0.3,1.8 -0.4,1.7 -0.9,1.7 -1.1,1.5 -0.7,2 0.7,1.9 2.9,1.4 -2.1,0.7 -2.2,0.7 -0.3,-1.8 -0.2,-1.7 0.2,-1.8 -0.2,-1.8 0,-2.1 -0.5,-2.1 0.3,-2.2 0.7,-2zM1614,208.6l2,-0.6 -1.2,1.7zM1604.1,217.9l2.2,-0.8 -1.4,1.6zM1591.3,223.3l3.7,-0.9 -2.3,1.7z" fill="#54ac5c"/>
<path d="M1306.5,215.6l0.4,-1.8 1.3,-1.3 0.9,-1.6 1.6,-0.9 1.3,-1.8 1.9,-1.2 1.8,-1.2 2.1,-0.6 3,-0.2 3,0.4 2.7,1.2 2.7,1.4 2.6,0 2.4,1 2.8,-0.2 2.1,-1.6 8.5,0 -0.8,-2.8 -0.6,-2.9 1.5,-1.2 1.3,-1.6 2.5,-0.8 2.3,-1.5 2.6,0.2 2.6,0.6 2.4,-0.8 2.6,0.2 2.4,-0.7 2.4,-0.8 2.8,1.7 2.9,1.4 1.8,0.1 1.8,0.3 1.7,0.4 1.8,0 2.5,-0.5 2.5,0.4 2.5,0.5 2.4,0.7 1,2.9 2.4,1.9 2.5,1.4 2.6,1.4 2.1,-0.3 2.2,0 2.1,-0.3 2.1,0.1 3,1.4 3.3,0.7 3,1.4 2.9,1.6 -1.9,1.8 -2.6,0.4 -0.5,1.8 -0.1,1.9 -1.7,-0.8 -1.8,-0.3 -1.7,0.8 -1.9,0 -0.7,2.7 -0.7,2.7 -2.4,0.6 -2.4,0.2 -0.3,2.9 -1.1,2.7 -0.3,2.3 -1.4,-1.4 -2,-0.3 -3,-0.8 -3.1,0.4 -3.1,0 -3,-0.7 -1.7,0 -1.7,0.5 -1.7,0.6 -1.8,0.1 -1.8,0.4 -1.8,0.1 -0.3,0.8 -2.7,1.3 -2.7,1.3 -2.8,1.1 -2.7,-1.6 -3,-1.2 0.3,-2.9 -1.5,-0.8 -1.6,-0.6 -8.5,0 -1.5,-1 -1.3,-1.2 -2,-0.7 -2.1,0.1 -1.6,-1.4 -1.1,-1.7 -1.9,0.5 -1.9,-0.1 -1.8,0.7 -1.8,0.6 0,10.4 -2.9,-1.2 -2.8,-1.6 -3.1,1.1 -1.1,-2.5 -1.3,-1.5 -1.8,-0.7 -1.8,-0.6 -1.3,-1.4 1.9,-0.9 2.9,-1.6 3.4,-0.3 -1.4,-2 0.8,-2.3 -2.4,-0.1 -2.4,-0.4 -3.3,0.6 -3.2,0.8 -1.5,0 -2,-2.3z" fill="#dcf0df"/>
<path d="M1332,234.5l0,-10.4 1.8,-0.6 1.8,-0.7 1.9,0.1 1.9,-0.5 1.1,1.7 1.6,1.4 2.1,-0.1 2,0.7 1.3,1.2 1.5,1 8.5,0 1.6,0.6 1.5,0.8 -0.3,2.9 3,1.2 2.7,1.6 2.8,-1.1 2.7,-1.3 2.7,-1.3 1.1,1.5 1.7,0.6 1.3,1.3 1.3,1.1 -3.2,1 -3.3,0.4 -1.6,-0.8 -1.8,-0.6 -1.2,1.5 -1.1,1.6 -3.1,0.9 1.5,1.7 1.1,1.9 -1.5,2.3 -1.8,-0.2 -1.8,-0.4 -1.4,-1.2 -1.7,-0.6 -1.1,-1.4 -1.5,-1 -1.7,-1.4 -2.3,-0.2 -1.7,-1.3 -1.4,-1.6 -2.9,-0.9 -2.8,-1.4 -2.2,-1.9 -2,-2 -1.9,2.2 -2.4,1.7z" fill="#c8e6cc"/>
<path d="M1323.2,232.8l3.1,-1.1 2.8,1.6 2.9,1.2 2.8,0 2.4,-1.7 1.9,-2.2 2,2 2.2,1.9 2.8,1.4 2.9,0.9 1.4,1.6 1.7,1.3 2.3,0.2 1.7,1.4 1.5,1 1.1,1.4 1.7,0.6 1.4,1.2 -1.7,0.4 -1.8,0.1 -1.3,1.1 -0.9,1.5 -2.9,0.9 -2.2,2 -2.1,-0.6 -2.2,-0.3 -0.2,-2.8 -2.3,0 -1.7,-2.2 -2.6,-0.9 -1.8,-1.5 -2.4,0.1 -2.5,0.8 -2.6,-0.3 -2.2,1.3 -2.3,0.7 0,-4.8 -2.6,-1.4 0.2,-1.7 0.7,-1.7 -0.6,-1.7z" fill="#dcf0df"/>
<path d="M1374.2,231.7l0.3,-0.8 1.8,-0.1 1.8,-0.4 1.8,-0.1 1.7,-0.6 1.7,-0.5 1.7,0 3,0.7 3.1,0 3.1,-0.4 3,0.8 2,0.3 1.4,1.4 -2.4,1.6 -2.7,0.9 -2.1,0.6 -2.2,0.3 -2.6,1.1 -2.8,0.6 -1.7,1.3 -1.9,1.2 -2.7,0 -2.6,0.4 -2.6,-0.1 -2.6,-0.6 1.4,-1.7 3.3,-0.4 3.2,-1 -1.3,-1.1 -1.3,-1.3 -1.7,-0.6z" fill="#dcf0df"/>
<path d="M1365.4,246.1l1.5,-2.3 -1.1,-1.9 -1.5,-1.7 3.1,-0.9 1.1,-1.6 1.2,-1.5 1.8,0.6 1.6,0.8 -1.4,1.7 2.6,0.6 2.6,0.1 2.6,-0.4 2.7,0 0.9,1.6 0.6,1.7 1.1,1.5 0.8,1.7 -2.2,0.9 -2.2,0.9 -2.3,-0.5 -2.4,0.1 -0.1,-1.7 -0.5,-1.7 -1.7,-0.3 -1.7,0 -0.8,1.4 -2,1.2 -2.1,-0.3z" fill="#dcf0df"/>
<path d="M1346.7,250.6l2.2,0.3 2.1,0.6 2.2,-2 2.9,-0.9 0.9,-1.5 1.3,-1.1 1.8,-0.1 1.7,-0.4 1.8,0.4 1.8,0.2 2.2,0 2.1,0.3 2,-1.2 0.8,-1.4 1.7,0 1.7,0.3 0.5,1.7 0.1,1.7 2.4,-0.1 2.3,0.5 2.2,-0.9 2.2,-0.9 -2.4,-0.2 -2.3,0.7 -2.2,0.8 -2.2,1 -1,3 -0.4,3.2 -1.7,1.4 -1.7,1.4 -1.2,1.7 -0.8,1.9 -2.1,0.8 -2.3,-0.2 -1.7,1.5 -2.1,0.8 -0.3,2.8 -2.2,2 -2.9,0.7 -3,0.1 -2.7,-1.4 -2.2,-0.9 -2.3,-0.2 1.3,-1.5 1.2,-1.6 -0.7,-1.6 -0.9,-1.4 -0.8,-1.6 -1,-1.4 0,-3.6 0.5,-2z" fill="#f3f8f3"/>
<path d="M1345.9,267l2.3,0.2 2.2,0.9 2.7,1.4 3,-0.1 2.9,-0.7 2.2,-2 0.3,-2.8 2.1,-0.8 1.7,-1.5 2.3,0.2 2.1,-0.8 0.8,-1.9 1.2,-1.7 1.7,-1.4 1.7,-1.4 0.4,-3.2 1,-3 2.2,-1 2.2,-0.8 2.3,-0.7 2.4,0.2 2.2,1.2 1.4,2 2.4,0.5 2.2,1.1 -1.5,1 -1.3,1.2 -2.1,0 -2,-0.2 -2,0.2 -1.9,0.6 0.9,2.4 0.5,2.4 2.3,1.4 -0.8,2.1 -1.5,1.6 -2,1.6 -2.2,1.5 -1.5,1.3 -1.4,1.5 -1.3,1.5 -1.5,1.3 -1,1.9 -1.3,1.8 0.3,2.5 0.8,2 1.2,1.7 -3.1,0.5 -3.1,-0.2 -1.7,1.7 -1.4,-1.5 -1.5,-1.4 -1.7,-1.6 -2.9,0.6 -3,-0.4 -8.2,0 0.5,-3.1 2.1,-0.4 1.9,-1 0,-1.4 -1.1,-2.8 -0.9,-1.6 -1.3,-1.2 -1.8,-0.3z" fill="#54ac5c"/>
<path d="M1300.3,239l2.5,0.8 2.3,1.5 2,-1.1 2.2,-0.6 1.1,1.7 1.5,1.4 0.3,2.3 2.7,1.4 2.9,0.8 1.9,-1.2 2.1,0 2.1,-0.8 2.2,0.6 2.3,-0.7 2.2,-1.3 2.6,0.3 2.5,-0.8 2.4,-0.1 1.8,1.5 2.6,0.9 1.7,2.2 2.3,0 0.2,2.8 -1.2,1.7 -0.5,2 0,3.6 1,1.4 0.8,1.6 0.9,1.4 0.7,1.6 -1.2,1.6 -1.3,1.5 1.4,1.1 1.8,0.3 1.3,1.2 0.9,1.6 1.1,2.8 0,1.4 -1.9,1 -2.1,0.4 -0.5,3.1 -1.9,0.2 -1.9,0.2 -1.8,-0.3 -1.8,-0.6 -2.5,-0.2 -2.3,-1 -1.2,-1.8 -1.1,-1.8 -2.7,0.4 -2.4,1.3 -2.2,-1.2 -2.6,-0.2 -2.4,-0.9 -1.8,-1.7 -0.8,-1.6 -0.8,-1.5 -1.2,-1.3 -0.9,-1.5 -1.8,-0.5 -1.6,-0.6 -1.5,1.1 -1.2,-1.3 -1,-1.5 0.4,-1.8 -0.1,-1.9 -2.3,-1.2 -2.6,-0.8 -1.7,-2.8 0.8,-1.7 1.2,-1.4 -1.1,-1.3 -1.1,-1.2 -1,-1.6 -0.7,-1.8 -1.7,-2.3 0.8,-2.4z" fill="#54ac5c"/>
<path d="M1300.3,246.1l0.7,1.8 1,1.6 1.1,1.2 1.1,1.3 -1.2,1.4 -0.8,1.7 1.7,2.8 2.6,0.8 2.3,1.2 0.1,1.9 -0.4,1.8 1,1.5 1.2,1.3 -1.7,0 -1.4,-0.3 -1.3,1.4 -1.2,1.4 -2.5,-0.5 -2.6,0.3 -1.4,-1.2 -1.5,-1 -1.6,-0.9 -1.5,-0.9 -1.4,-1.2 -1.8,-0.5 -1.6,-0.9 -1.4,-1.1 -1.6,-0.7 -1.8,-0.1 -0.5,-1.7 -0.6,-1.7 1.6,-0.6 1.5,-0.8 1.6,-0.6 1.5,-0.8 1.1,-2.7 -0.3,-2.9 1.5,-1.2 1.7,-0.8 1.7,-0.1 1.7,-0.2 1.7,0.2z" fill="#96d29b"/>
<path d="M1274.5,250.6l0.8,-1.1 2,-2.3 9.4,0 1.7,-0.1 1.7,-0.3 1.6,-0.9 1.8,0.5 -1.7,0.8 -1.5,1.2 0.3,2.9 -1.1,2.7 -1.5,0.8 -1.6,0.6 -1.5,0.8 -1.6,0.6 -2.6,2.1 -3.1,1 -2.8,-1.1 0.2,-1.7 2,-2.5 -1.7,-1.2 -0.3,-2.2z" fill="#c8e6cc"/>
<path d="M1272.8,257.7l2.2,-4.3 2,1.2 -2,2.5z" fill="#96d29b"/>
<path d="M1270.5,262.7l1.2,-2.5 1.1,-2.5 2,-0.6 -0.9,2.3 0,2.8 -0.9,2.7 -0.5,2.9 -0.5,-2.7z" fill="#54ac5c"/>
<path d="M1272.5,267.8l0.5,-2.9 0.9,-2.7 0.3,-3.4 1.4,1.3 2,-0.2 3.1,-1 2.6,-2.1 0.6,1.7 0.5,1.7 -3,1.5 -3.2,0.5 1.4,1.3 1.4,1.5 -1.4,1.4 -2.1,1 -1.9,1.3z" fill="#96d29b"/>
<path d="M1272.2,268.4l1.7,0 1.7,0.3 1.9,-1.3 2.1,-1 1.4,-1.4 -1.4,-1.5 -1.4,-1.3 3.2,-0.5 3,-1.5 1.8,0.1 1.6,0.7 1.4,1.1 1.6,0.9 1.8,0.5 1.4,1.2 1.5,0.9 1.6,0.9 1.5,1 1.4,1.2 2.6,-0.3 2.5,0.5 2.8,1.7 2.6,0 1.4,2.6 1.7,1.4 2,1.1 0.9,2.7 0.8,2.7 2.2,1.4 2.1,1.5 0.8,2.4 1.9,0.6 1.7,1 1.9,-0.2 1.8,-0.8 1.5,2 -1.5,2.6 -0.5,3 -1.9,1.3 -2.2,0.7 -2.4,-0.4 -2,1.2 -2.1,1 -2.2,-0.7 -2.2,0 -2,0.8 -2.3,1.2 -1.7,1.8 -1.7,1.8 -2,0.2 -1.9,-0.3 -2,-0.3 -1.8,-1 -2.8,-0.3 -1.1,1.4 -0.3,1.8 -0.5,-1.8 -1.2,-1.4 -1.8,-1.3 -1,-2 -1.9,-1.5 -1.8,-1.6 -1.4,-1.9 -0.6,-2.4 -0.9,-3.3 -1.1,-3.2 -1.5,-2.4 -2.2,-2.1 -0.6,-2 -1.4,-1.6 -1.9,-2.2 -1.7,-2.3 -1.7,0 0.2,-1.8z" fill="#54ac5c"/>
<path d="M1305.1,268.9l2.5,-2.8 1.4,0.3 1.5,4.2 -2.6,0z" fill="#96d29b"/>
<path d="M1294.6,304.8l0.3,-1.8 1.1,-1.4 2.8,0.3 1.8,1 2,0.3 1.9,0.3 2,-0.2 1.7,-1.8 1.7,-1.8 2.3,-1.2 2,-0.8 2.2,0 2.2,0.7 2.1,-1 0.6,1.8 0.2,1.8 0.8,1.7 1.5,1.2 -1.5,1.4 -1.1,1.7 -2.6,1 -1.2,2.6 -2.7,0 -2.5,0.9 -3.1,-0.1 -2.7,1.4 -3,0.6 -2.6,1.5 -2,0.8 -2.2,-0.5 -1.1,-1.9 -1.2,-1.8 0,-3.4z" fill="#c8e6cc"/>
<path d="M1320.7,297.4l2,-1.2 2.4,0.4 2.2,-0.7 1.9,-1.3 0.5,-3 1.5,-2.6 -1.5,-2 1.7,-1.9 0.6,-2.3 1.1,-2 1.7,2.5 2.4,0.9 2.5,0.2 1.4,1.7 1.7,1.5 -1.6,0.9 -0.7,1.8 -0.6,1.6 -0.8,1.6 -1.2,1.9 -0.8,2 -1.9,1.3 -1.8,1.5 -2.1,1.5 -2.1,1.4 -2.7,0.4 -2.7,0.4 -1.5,-1.2 -0.8,-1.7 -0.2,-1.8zM1332,277.7l1.4,-0.9 -0.5,2z" fill="#c8e6cc"/>
<path d="M1319.5,282.5l2.1,1.5 0.8,2.4 1.9,0.6 1.7,1 1.9,-0.2 1.8,-0.8 1.7,-1.9 0.6,-2.3 1.1,-2 -0.5,-2.6 -2,2.7 -2.8,1.6 -2.9,0 -2.8,0.3z" fill="#96d29b"/>
<path d="M1317.3,281.1l1.1,-3.7 1.1,2.5 0,2.6z" fill="#96d29b"/>
<path d="M1366.6,284.2l1.7,-1.7 3.1,0.2 3.1,-0.5 -1.2,-1.7 -0.8,-2 -0.3,-2.5 1.3,-1.8 1,-1.9 1.5,-1.3 1.3,-1.5 1.4,-1.5 1.5,-1.3 2.2,-1.5 2,-1.6 1.5,-1.6 0.8,-2.1 -2.3,-1.4 -0.5,-2.4 -0.9,-2.4 1.9,-0.6 2,-0.2 2,0.2 2.1,0 1.3,-1.2 1.5,-1 1.6,1.7 1.5,1.7 0.4,1.8 -0.7,1.8 1.2,1.5 -0.5,1.8 -0.7,1.8 1.5,0.8 1.5,0.9 1.5,0.8 1.8,0.3 -1.7,1.8 -0.9,2.2 1.8,1.9 2.3,1 2.3,1.3 2.7,-0.3 2.9,0 2.5,1.7 2,0 2.1,0.3 2.1,0.2 2,0.7 0,-4.3 2,2 2.8,1.4 3.1,0.3 3.1,-0.6 0.3,-2.8 3,-1.5 2.4,-2.4 3,1.3 2.7,-1.9 1.9,1.5 1.7,1.6 -0.2,1.7 -0.6,1.7 -2.6,1.5 -2.5,1.6 -1.5,1.5 -0.5,2.1 -1.7,1.1 -1.7,0.9 0.1,2.4 0.2,2.4 -1,1.5 -1.3,1.3 -1,-2.3 -1.2,-2.2 -1.7,-2.2 2.8,-1.7 0.6,-2 -1.9,0.7 -1.9,-0.7 -1.7,-0.7 -1.9,-0.1 0,-2 -2,-0.5 -2,-0.6 -0.7,2.6 -0.1,2.7 1.2,1.8 1,1.9 0.2,2 0.4,1.9 -2.9,1.1 -3,-0.2 -0.6,1.9 -0.9,1.7 -2.3,0.8 -1.9,1.5 -2.4,1.7 -2.7,1 -1.8,2.4 -0.8,2.8 -2.9,1.6 -3,1.5 0.5,3.1 -0.2,3.1 -0.2,2.7 -1.2,2.4 -0.6,1.7 -0.9,1.7 -0.8,2.8 -2.6,1.1 -1.7,2.3 -1.5,-1.2 -1.3,-1.4 -0.5,-1.8 -0.8,-1.6 -0.9,-1.7 0.2,-1.9 -2,-1.8 -0.8,-2.5 -0.8,-2.9 -1.5,-2.7 -0.9,-2.9 -1.1,-2.7 -0.9,-2.8 -0.5,-2.9 -0.3,-2.8 -0.3,-2.8 -1.1,-0.6 -1.9,0.9 -2.1,0.5 -2.5,-1.8 -2,-2.4 1.3,-1.2 1.5,-0.8 -2.8,-1z" fill="#54ac5c"/>
<path d="M1400.3,269.8l0.9,-2.2 1.7,-1.8 3.1,-0.2 2.6,2.1 2.8,1.8 3.3,0.2 2.3,2.3 3,0.1 3,0.2 0,4.3 -2,-0.7 -2.1,-0.2 -2.1,-0.3 -2,0 -2.5,-1.7 -2.9,0 -2.7,0.3 -2.3,-1.3 -2.3,-1z" fill="#dcf0df"/>
<path d="M1425,274.3l2.8,1.4 3.1,0.3 3.1,-0.6 0.3,-2.8 -2.3,-0.5 -2.2,-0.6 -1.9,1.6 -2.4,0.3z" fill="#f3f8f3"/>
<path d="M1400,323.4l1.3,2.2 2.1,1.4 0.7,1.8 1,1.6 -1.7,2.8 -2.8,0.9 -0.5,-3.2 -0.9,-3 0.1,-2.3z" fill="#dcf0df"/>
<path d="M1434.9,292.6l0.8,-1.7 1.3,-1.3 1,-1.5 -0.2,-2.4 -0.1,-2.4 1.7,-0.9 1.7,-1.1 0.5,-2.1 1.5,-1.5 2.5,-1.6 2.6,-1.5 0.6,-1.7 0.2,-1.7 1.7,1 1.7,1 0.6,2.5 0,2.5 -1.9,2 -0.9,2.6 3.1,0.5 0,2.7 1.1,2.4 3,0.7 2.7,1.3 -1.4,1.5 -1.4,1.6 -1.7,0.6 -1.7,0.5 -1.9,2 -1.5,2.2 0.6,3.2 2.2,2.5 -0.9,2.1 -0.8,2.1 0.3,3.4 2.5,2.2 0.4,1.9 0.8,1.8 -1.6,2.3 -1,2.5 -0.5,-2.9 -0.9,-2.7 -0.9,-1.8 -1.1,-1.5 0.5,-1.9 0.1,-1.9 0,-5.6 -2.5,-0.4 -2.3,0.9 -2.2,0.5 -2.1,0.4 -0.5,-1.8 0.2,-1.7 0,-1.8 -0.3,-1.8 -0.9,-1.9 -1.3,-1.7 -1.4,-1.7z" fill="#f3f8f3"/>
<path d="M1450.5,298.8l1.5,-2.2 1.9,-2 1.7,-0.5 1.7,-0.6 0.8,2.5 2,0 -0.3,2.4 -0.3,2.4 1.8,0 1.6,-0.6 2.8,1 2.3,-1.8 0.8,1.7 1.5,1.1 0,3.7 2.3,1.4 -0.3,3.1 -1.8,0.3 -1.7,0.2 -1.8,-0.1 -1.8,-0.1 -2,2.2 1.8,2.3 -0.1,2.8 -1.1,-1.4 -1.4,-1.1 -2.9,-0.3 -0.2,-2.3 -2.6,0.3 -0.5,1.7 -0.6,1.7 -1,1.6 -0.2,1.8 0,4.8 1.7,1.7 1.5,1.9 1.4,1.3 0.5,1.8 1.8,0.7 1.4,1.3 -2.9,1.7 -1.2,-1.5 -1.6,-1 -1.4,-1.7 -1.8,-1.7 -1.9,-1.4 0.5,-2.6 0.6,-2.5 1,-2.5 1.6,-2.3 -0.8,-1.8 -0.4,-1.9 -2.5,-2.2 -0.3,-3.4 0.8,-2.1 0.9,-2.1 -2.2,-2.5z" fill="#96d29b"/>
<path d="M1457.3,293.5l1.4,-1.6 1.4,-1.5 1,-1.8 1.8,-0.8 2,2.3 1.8,2.2 2.8,0.9 -1,1.5 -0.7,1.6 1.7,1.2 1.9,1 1.6,2.6 2.1,2 1.9,2.3 1.2,2.7 -0.2,1.7 -2.2,0.9 -2.1,1.1 -1.4,-1.4 0.3,-3.1 -2.3,-1.4 0,-3.7 -1.5,-1.1 -0.8,-1.7 -2.3,1.8 -2.8,-1 -1.6,0.6 -1.8,0 0.3,-2.4 0.3,-2.4 -2,0z" fill="#dcf0df"/>
<path d="M1462.9,287.8l1.9,-0.3 1.8,-0.5 2.8,-0.1 2.3,-1.6 2,0.6 2,0.8 2,1.7 1.7,2 -1.9,1 -1.8,1.2 -1.5,2.4 -1.3,2.4 1.8,1.7 0.4,2.5 1,1.4 1,1.5 1.7,0.3 1.4,1.1 0.6,1.8 0.3,1.9 1.2,1.5 0.8,1.8 -0.4,2.6 0.1,2.5 -2.4,2.3 -3,1.4 -2,2.5 -1.7,2.3 -2.8,0.2 -0.6,-1.9 0,-2 -0.8,-1.1 1.9,-1.3 2.3,-0.4 -0.3,-2 2.3,-0.9 2.3,-1.1 0,-6.2 0.2,-1.7 -1.2,-2.7 -1.9,-2.3 -2.1,-2 -1.6,-2.6 -1.9,-1 -1.7,-1.2 0.7,-1.6 1,-1.5 -2.8,-0.9 -1.8,-2.2z" fill="#96d29b"/>
<path d="M1464.9,318l0.1,-2.8 -1.8,-2.3 2,-2.2 1.8,0.1 1.8,0.1 1.7,-0.2 1.8,-0.3 1.4,1.4 2.1,-1.1 2.2,-0.9 0,6.2 -2.3,1.1 -2.3,0.9 0.3,2 -2.3,0.4 -1.9,1.3 -2.9,-0.6 -1.4,-1.2z" fill="#dcf0df"/>
<path d="M1457,332.7l1.6,1 1.2,1.5 2.9,-1.7 2.4,1.5 1.2,2.5 0,5.6 0.5,2.4 1.8,1.6 -2,0.2 -1.3,-1.7 -2.1,-0.1 -1.4,-1.3 -1.4,-1.4 -1.1,-1.7 -0.9,-1.9 -0.6,-1.8 -0.2,-1.9zM1483.9,345.4l2.6,-0.3 2.2,-1.2 2.3,-1.2 2.5,-0.7 1.6,-1.8 1.3,-1.9 1.9,-1.7 2.3,-1.1 1.5,-2.2 1.9,-1.8 2.3,1.2 2.4,1.8 2.4,1.8 -1.6,1.5 -1.8,1.1 -6.2,0 -1.3,1.7 -1,1.9 -0.3,2.2 -0.5,2.1 -6.3,0 -2,0.9 -2.2,0.5 -2.9,-1.4z" fill="#54ac5c"/>
<path d="M1443.4,335.2l3.1,0.7 3.1,0.4 2.1,1.9 1.3,2.4 1.3,1.2 1,1.4 1.5,1 1.3,1.2 2.1,1 1.7,1.4 1.9,1.2 2.3,0.6 0.3,2.4 1.6,1.8 1.6,1.1 1.1,1.7 1.4,1.2 1.6,1.1 0,8.5 -2,0 -2.2,-0.9 -2.7,-2.1 -3,-1.6 -1.9,-2.6 -2.4,-2.1 -1.6,-2 -1.2,-2.3 -1.1,-1.8 0.1,-2.2 -1.5,-1.4 -1.2,-1.6 -2.1,-2.5 -2.7,-1.8 -0.8,-2.1 -1.7,-1.5 -0.8,-2.1zM1471.4,370.2l2.1,-1.3 2.2,-1 2.3,1.5 2.8,0.2 3.3,0 3.2,-0.6 2.9,0.6 2.8,0.9 2.3,1.2 2.5,1 0,2.8 -1.8,-0.3 -1.7,-0.2 -1.8,-0.4 -1.8,-0.2 -2.1,-0.5 -2.1,-0.2 -2.3,0.3 -2,-1 -1.6,-0.8 -1.9,-0.2 -1.8,-0.3 -1.8,0.2 -1.9,-0.8zM1482.2,346.8l1.7,-1.4 1.1,1.4 2.9,1.4 2.2,-0.5 2,-0.9 6.3,0 0.5,-2.1 0.3,-2.2 1,-1.9 1.3,-1.7 6.2,0 -0.6,1.8 0,1.8 0.6,2.9 1.3,1.5 1.5,1.3 -1.6,0.7 -1.8,0.1 -0.4,1.7 -0.4,1.7 -1.3,1.6 -1.5,1.2 -0.4,2.4 -0.5,2.4 -0.6,2.3 -4.2,0 -1.6,-0.7 -1.2,-1.3 -2.4,1 -2.5,-0.4 -2.3,-0.5 -2.2,-0.9 0.8,-2.3 -1.4,-2 -0.8,-1.7 -1.4,-1.1 -0.6,-2.8zM1510,358.9l1.2,-1.8 0.5,-2 0.7,-2 0.4,-2.1 1.4,-1.8 1.4,-1.9 2,0.1 1.9,0.1 1.9,0.7 1.9,0.3 2.2,-0.7 2,-1 -0.2,1.7 -1.2,1.4 -2.5,0.6 -2.4,-0.7 -2.5,-1 -2.5,0.8 -2.5,1.4 1.5,2 2.4,0.5 5.1,0 -2.1,0.9 -1.6,1.7 -1.4,0.5 1.4,1.8 1.2,1.9 0.9,1.7 0.8,1.7 -2.3,0.8 -2,-2.2 -0.6,-1.9 -1.1,-1.8 -1.4,2.3 0,5.6 -2.5,0 0,-5.6zM1499.2,374.1l2,0.6 -1.4,1.1zM1502,374.4l2,0.3 -0.8,1.4zM1504.3,375l6.2,-0.6 -1.4,1.4 -4.2,0.6zM1513.1,374.7l8.5,-0.6 -0.3,1.7 -7.9,0zM1510.5,377.5l5.1,1.4 -2.2,0.9zM1523.3,380l2.8,-3.1 1.7,-0.2 -0.3,1.4zM1534.6,353.3l0.9,-7.9 2.5,1.4 -1.9,3.1 1.4,2.8zM1530.4,360l3.4,0 -0.6,1.7 -2.8,-0.3zM1536.1,359.2l7,0.3 0.9,2.2 -6.5,-0.8zM1525.8,355.8l4.6,0.3 -1.4,0.5zM1544.6,353.3l2.2,-0.2 2,-1 2.3,0.6 2.2,0.6 0.3,2.3 0,2.5 1.9,1.1 1.8,1.1 1.6,-0.9 1.5,-1.2 1.5,-1.2 1.1,-1.5 2.7,0 2.7,-0.3 2.2,1.7 2.3,1.4 0,18.4 -3.1,-1 -2.6,-1.9 -2.8,0.9 -0.6,-3.1 2.9,-1.4 -1.4,-1.7 -0.9,-2 -2,-0.2 -1.8,-0.8 -1.5,-1.3 -1.8,-0.8 -1.8,0.6 -1.8,-0.7 -1.6,-0.9 -1.9,0.2 -0.1,-1.9 -0.4,-1.8 -1.9,-2.3 -2.7,-1.4zM1553.9,366.5l1.4,1.4 -1.7,2.3zM1545.4,372.1l1.1,-0.8 -0.2,2.3zM1472.9,355.5l2.5,0 -0.3,4 -2,-2.3zM1478.2,358.3l2,0.6 -1.1,1.1zM1448.8,347.3l1.7,0.9 -0.6,1.1zM1452.7,353.8l2,2 -0.8,0.3z" fill="#96d29b"/>
<path d="M1572.9,358.3l2.7,-0.5 2.7,1.1 2.2,1.4 2.3,1.4 2.7,1.6 1,2.9 2.4,1 2.4,0.7 -1.4,2.3 0.7,1.8 0.9,1.6 1,1.8 1.6,1 1.7,0.8 1.8,0.4 1.3,1.4 0.9,1.6 -1.7,-0.3 -1.8,-0.3 -1.8,-0.1 -1.8,-0.1 -1.4,-1.4 -1.6,-1.3 -1.1,-1.6 -1.5,-1.4 -2.2,-0.6 -2.1,-0.8 -0.9,2.3 -1.9,1.4 -1.8,-0.7 -1.8,-0.6 -1.7,0.9 -1.8,0.7zM1593.6,366.8l2.4,-0.5 2.4,0.2 1.2,-1.2 1.3,-1.1 1.6,-0.6 1.6,-0.8 0.8,2.3 -1.6,1.7 -2.1,1.1 -2.9,-0.6 -2.7,1.2zM1600.7,358.3l4.8,2.6 1.4,3.1 -1.4,-0.9zM1611.7,366.5l3.4,3.4 -2,-0.6z" fill="#f3f8f3"/>
<path d="M1616.8,369.9l2.9,2 -1.5,-0.3zM1621.6,372.4l4.6,2.3 -1.7,-0.3zM1625.6,377.2l3.4,1.4 -2.3,0zM1628.7,374.7l1.7,3.1 -1.1,-0.9zM1630.7,380l2.6,1.5 -1.7,-0.3z" fill="#f3f8f3"/>
<path d="M1645.4,393.3l1.7,1.4 -1.1,0.6zM1647.1,396.1l1.7,1.4 -1.1,0zM1650,400.6l0.8,0.6 -0.8,0z" fill="#f3f8f3"/>
<path d="M1638.1,408l4.2,1.7 4.3,4.2 -2.9,-0.9 -4.2,-2.8z" fill="#f3f8f3"/>
<path d="M1675.8,400.4l3.7,0.2 -0.6,1.7 -2.8,-0.3zM1680,397.5l3.4,-0.8 -1.4,1.7z" fill="#dcf0df"/>
<path d="M1514.8,298.8l2.4,0.4 2.4,-0.1 0,2.7 0.3,2.7 -1.2,1.2 -0.8,1.6 0.5,1.8 0.1,1.9 1.4,1.3 1.6,1.1 1.4,1.3 1.8,0.8 -1.9,-0.9 -1.8,-1.1 -2.3,-1 -2.5,-0.1 -1.1,-1.5 -0.9,-1.6 -0.5,-2 -0.6,-2 0.3,-2 1.1,-1.7zM1519,331.3l2.1,-2.3 2.2,-2.3 3,-1 2.4,-2.1 0.6,1.8 0.3,1.9 1,1.7 1.2,1.4 -0.9,2.6 -1.9,1.9 -2.2,-0.9 -2.1,-1.3 -2.7,-1.1zM1505.7,327.6l6.3,-8.5 -0.9,3.1zM1525.6,315.8l2.8,0 0.9,3.6 -1.8,2.6 -1.4,-2.6zM1519,317.7l3.4,0.9 -0.5,4.2 -2,-1.4zM1523,320.3l1.7,-0.9 -1.1,4.8zM1514.5,312.9l3.1,0.6 -0.8,2.8zM1521.6,321.1l1.1,3.7 -2.2,-0.9z" fill="#96d29b"/>
<path d="M1516.2,279.9l2.6,0.6 -3.2,8.5 -1.9,-3.4z" fill="#96d29b"/>
<path d="M1544.3,255.1l2.6,-1.5 1.9,-2.4 2.1,-0.2 2.1,-0.4 2.2,-0.1 2.1,0.1 2.3,-2 1.4,-2.8 4.8,0 2.5,-1.9 1.2,-2.9 -0.3,-2.3 0.9,-2.2 1.8,-1.1 1.8,-1.1 0.7,2 0.8,1.9 -0.2,2.4 -0.7,2.4 -0.6,2.3 -1.4,1.9 0,3.1 -1.1,1.4 -1.7,0.6 -3.1,0.8 -2.5,-0.2 -2.3,0.5 -0.6,0.9 -1.7,0.8 -1.1,1.4 -0.9,-1.6 -1.1,-1.5 -3,0.7 -3,0.2 -2.8,0.7 -2.8,0.4zM1541.7,256.5l5.1,-0.3 -1.1,6.3 -3.1,0.5 -1.4,-4.5zM1548.8,255.4l5.7,-0.8 -0.9,2.5 -3.9,1.4zM1570.6,234l0.6,-3 0.8,-2.9 1.1,-2.9 2.1,-2.2 2.3,1.3 2.4,1.2 2.6,1 2.6,0.7 0.5,1.7 -0.9,1.7 -1.7,0.8 -1.8,0.7 -1.8,0.5 -2.6,-0.5 -2.5,-0.9 -1.7,0.3 -1.7,0.2zM1535.2,277.1l1.7,-1.7 -1.1,0.9z" fill="#54ac5c"/>
<path d="M1531.2,253.7l0.3,-2.8 0.3,-2.8 0.2,-1.9 0.4,-1.8 2.2,-1.2 2.3,-1.1 1.5,2.4 1.6,2.2 0,4.2 -2,0.9 -1.9,1.1 -2.4,0.7zM1531,256.8l1.9,-0.3 -0.8,0.9z" fill="#54ac5c"/>
<path d="M1422.1,212.3l3.1,-1.1 2.6,-1.9 3.2,0 3,-1.3 2,0.3 1.9,0.6 2,0.4 1.8,1 1.9,-0.8 2,-0.1 2,0.1 2,0.5 1.6,-2.6 0.7,-3 2.6,-0.9 2.8,0.4 2.6,0.7 2.5,1.2 0.8,2.8 1.7,-0.5 1.7,-0.2 1.5,1 1.8,0.1 3.3,0.8 3.3,0.2 2.3,1.4 2.4,1.2 2.6,0.1 2.7,-0.4 2.8,-0.7 2.7,-1.2 2.9,-0.6 2.9,-0.4 3,1.2 3.2,0 -2.8,1.8 -0.6,3.2 2.9,0.4 2.8,0.5 1.7,0.4 1.8,0.5 1.6,0.8 1.4,1.1 -2.4,-0.2 -2.3,0.4 -2.4,0.1 -2.2,0.8 -1.6,1.3 -1.8,0.9 -2.1,0.1 -1.6,1.4 -1.4,1.3 -1.3,1.4 -1.6,1.1 -2,-0.1 -2.7,1.1 -2.4,1.7 -1.8,-0.1 -1.8,0.2 -1.8,0.3 -1.9,0 -1.7,0.8 -1.6,0.8 -1.7,0.7 -1.8,0.4 -3,-1.1 -2.2,-2.2 -3.1,0.4 -3.1,0.1 -3.2,0.6 -3.3,-0.4 -3.2,-0.4 -3.3,-0.1 -2.2,-1.9 -1.8,-2.3 -3,0.2 -2.8,-1.1 -3.1,0.1 -2.4,-2.1 -0.3,-2.4 0,-2.4 -2.2,-0.7 -2.1,-1.2 -1.9,-1.3 -2,-1.3z" fill="#dcf0df"/>
<path d="M1385.6,246.1l-0.8,-1.7 -1.1,-1.5 -0.6,-1.7 -0.9,-1.6 1.9,-1.2 1.7,-1.3 2.8,-0.6 2.6,-1.1 2.2,-0.3 2.1,-0.6 2.7,-0.9 2.4,-1.6 0.3,-2.3 1.1,-2.7 0.3,-2.9 2.4,-0.2 2.4,-0.6 0.7,-2.7 0.7,-2.7 1.9,0 1.7,-0.8 1.8,0.3 1.7,0.8 0.1,-1.9 0.5,-1.8 2.6,-0.4 1.9,-1.8 1.4,0 0.6,1.9 2,1.3 1.9,1.3 2.1,1.2 2.2,0.7 0,2.4 0.3,2.4 2.4,2.1 3.1,-0.1 2.8,1.1 3,-0.2 1.8,2.3 2.2,1.9 3.3,0.1 3.2,0.4 3.3,0.4 3.2,-0.6 3.1,-0.1 3.1,-0.4 2.2,2.2 3,1.1 1.8,-0.4 1.7,-0.7 1.6,-0.8 1.7,-0.8 1.9,0 1.8,-0.3 1.8,-0.2 1.8,0.1 2.4,-1.7 2.7,-1.1 2,0.1 1.6,-1.1 1.3,-1.4 1.4,-1.3 1.6,-1.4 2.1,-0.1 1.8,-0.9 1.6,-1.3 2.2,-0.8 2.4,-0.1 2.3,-0.4 2.4,0.2 -1.4,-1.1 -1.6,-0.8 -1.8,-0.5 -1.7,-0.4 -2.8,-0.5 -2.9,-0.4 0.6,-3.2 2.8,-1.8 3.1,0.5 2,-0.8 1.6,-1.5 1.8,-1.3 0.9,-2 0,-4.8 2.4,-0.8 2.5,0.5 2.5,0 2.5,-0.3 1.7,0.9 1.9,0 1.5,1.4 2,-0.3 0.9,2.2 1.1,2.1 1.3,2 0.9,2.2 1.7,1.7 2.3,0.7 2.2,0.8 2.3,-0.4 0.7,1.6 0.8,1.5 2.6,0.3 2.7,-0.3 2.4,-1.3 2.7,-0.1 -1.2,2.1 -0.5,2.5 -1.5,2 -1.6,1.8 -2.3,0.7 -2.5,0.2 -0.5,1.9 -0.3,2 -0.2,1.8 -0.7,1.6 -2.3,-2 -2.5,1.8 -2.8,1.1 -3.2,0.5 -2.2,0.7 -2.1,1 -1.3,2 -1.7,1.7 -2.6,0.5 -2.5,0.6 -2,0.7 -1.7,1.3 0,-3.1 1.7,-2.6 -1.1,1.6 -1.8,0.8 -1.9,0.2 -1.7,0.5 -2.7,1.2 -2.4,1.4 1.8,1.7 1.6,1.9 2.5,-0.4 2.6,-0.4 2.3,1.4 2.8,0.3 -2.7,1.8 -3,1.3 -2,1.3 -1.7,1.8 1.9,1.4 1.2,2 0.6,1.7 1,1.5 1.5,1 1.2,1.4 0.3,2.6 -1.5,1 -1.7,0.7 1.7,0.7 1.7,0.4 -0.7,2.2 -0.7,2.3 -2.4,2.1 -1.8,2.7 -2.1,2.5 -1.6,2.8 -2.7,1.5 -2.1,2.2 -2,0.5 -1.9,0.7 -2,0.7 -1.8,0.9 -2.2,0.6 -2.7,1.5 -3,0.5 -1.6,1.8 -1.8,1.6 -0.4,-2 -1.3,-1.4 -4.8,0 -1.7,-2 -2,-1.7 -2,-0.8 -2,-0.6 -2.3,1.6 -2.8,0.1 -1.8,0.5 -1.9,0.3 -1.8,0.8 -1,1.8 -2.7,-1.3 -3,-0.7 -1.1,-2.4 0,-2.7 -3.1,-0.5 0.9,-2.6 1.9,-2 0,-2.5 -0.6,-2.5 -1.7,-1 -1.7,-1 -1.7,-1.6 -1.9,-1.5 -2.7,1.9 -3,-1.3 -2.4,2.4 -3,1.5 -2.3,-0.5 -2.2,-0.6 -1.9,1.6 -2.4,0.3 -0.5,0.9 -2,-2 -3,-0.2 -3,-0.1 -2.3,-2.3 -3.3,-0.2 -2.8,-1.8 -2.6,-2.1 -3.1,0.2 -1.8,-0.3 -1.5,-0.8 -1.5,-0.9 -1.5,-0.8 0.7,-1.8 0.5,-1.8 -1.2,-1.5 0.7,-1.8 -0.4,-1.8 -1.5,-1.7 -1.6,-1.7 -2.2,-1.1 -2.4,-0.5 -1.4,-2zM1481.4,296.9l5.1,-2.3 1.4,1.1 -4.3,4z" fill="#1b561b"/>
<path d="M1496.9,412.5l2,-0.8 1.9,-0.7 1.5,-1.5 2,-0.7 3.3,0.2 2.9,-1.6 2,0 1.8,-0.9 1.7,-1 1.6,-0.9 1.8,-2.3 0.5,-2.8 1.8,0.2 1.9,0.1 1.1,-3.1 1.6,-2.9 2.7,-1.9 2.1,-0.8 2.1,-0.9 1.7,1.4 1.7,1.4 4,0 0.9,-2.3 0.2,-2.5 1.5,-0.9 1.1,-1.3 2.3,-0.2 2.2,-0.7 0.3,-2.2 1.5,1 1.6,0.8 1.9,0.2 1.8,0.2 5.1,0 -0.8,2.2 -1.5,1.8 -0.9,1.9 -0.5,2 2.9,1.4 2.8,1.7 2.3,2.1 2.5,1.9 2.1,0.2 2.1,0.1 1,-1.7 0.3,-1.9 0.7,-1.7 0.6,-1.8 0,-6.5 1.2,-2.8 1.3,-2.8 1.7,2.4 1.2,2.6 -0.3,2.8 1.1,2.6 2.4,0.3 1.9,1.4 -0.1,2.1 0.4,2.1 0.5,1.7 0.8,1.6 0.8,1.7 0.1,1.8 1.6,1 1.7,0.7 1.4,1.3 1.8,0.4 0.9,1.5 0.6,1.6 0.2,1.7 1.2,1.4 1.9,1.6 1.8,1.8 0.9,1.9 2.1,0.6 1.5,1.2 1.4,1.3 0.7,1.9 0.3,1.9 0.9,1.8 -0.2,2.1 -0.9,2 -0.9,2 0.7,2.2 -0.3,2.2 -0.8,1.9 -1,1.8 -1.3,1.7 -1.1,1.7 -1,1.7 -0.6,1.9 -1,1.8 -1.1,1.6 -0.1,2.2 -0.5,2.1 -3.1,0.9 -3.1,0.5 -2,1.7 -2.3,1.4 -2.2,-1.4 -2.3,-0.9 -1.8,0.6 -1.6,0.8 -2,-0.3 -1.9,0.5 -1.6,-1.1 -1.6,-1.1 -1.9,-1.8 -1.8,-1.8 -1.5,-1.9 -1.9,-1.5 -1,-2.2 -0.4,-2.3 -0.4,1.7 -0.2,1.7 -0.1,-3.1 -0.2,-3.1 -0.6,1.6 -1.1,1.5 -1.3,1.3 -1.8,0.6 -1.4,-0.2 -1.3,-3.1 -2.4,-2.3 -2.3,-0.3 -2.2,-0.8 -2.2,-1 -1.8,-1.6 -1.6,0.8 -1.7,0.1 -1.7,0.5 -1.8,0 -2,-0.1 -2,-0.3 -2,0.6 -1.9,0.7 -3,0.6 -2.7,1.4 -1.4,2.5 -9.9,0 -2.7,1.8 -3,1.3 -1.9,-0.7 -1.9,-0.8 -2,-0.6 -2.1,0.4 0.7,-1.6 0.3,-1.7 0.3,-1.7 0.1,-1.8 -1.4,-2.6 -0.6,-3 -0.2,-1.9 -0.9,-1.6 -0.9,-1.7 -0.3,-1.8 -1.9,-2.6 -0.6,-3.1 0.8,-2.8 -0.1,-2.6 0.4,-2.5zM1583.4,465.8l9.9,0.5 -0.6,6.5 -4.2,1.2 -3.4,-3.1zM1560.4,451.7l4,0.3 -1.4,0.8zM1542.6,383.1l3.4,0 -1.4,1.5z" fill="#1e6928"/>
<path d="M1662.7,448l2.8,0.9 1.8,2.2 1.4,1.9 2,1.2 2.2,0.4 2.3,0.4 2.3,0.7 1.7,1.6 -2.4,2.4 -1.9,2.7 -1.4,1.3 -1.5,1.3 -0.9,1.6 -1,1.7 -0.8,-2.2 -0.6,-2.3 -1.3,-1.1 -1.6,-0.9 1.9,-1.4 0.7,-2.2 -0.1,-2.3 -1,-2 -1.2,-1.5 -0.9,-1.6 -0.9,-1.7zM1662.7,465.2l1.9,1.8 2.4,1 -0.5,1.8 -1.1,1.3 -1.1,1.4 -1.3,1.2 -2.3,0.9 -2.2,1.3 -0.6,2.4 -1.1,2.1 -2.9,1.3 -3.1,0.7 -2.9,-0.9 -2.7,-1.3 1.6,-1.2 1.7,-0.8 1.6,-1.2 0.7,-1.9 1.4,-1.7 2.1,-0.8 1.9,-1.1 1.7,-1.2 0.8,-1.6 1.3,-1.3 1.5,-0.9z" fill="#54ac5c"/>
<path d="M1583.4,312.6l0.8,0.3 -0.5,0.9zM1564.4,323.9l0.8,0.3 -0.5,0.6zM1603.2,329.9l0.9,0.2 -0.6,0.6zM1621.4,331.3l0.8,0.2 -0.6,0.6zM1657.9,330.7l1.1,0.3 -0.5,0.5zM1663.6,346.8l0.5,0.5 -0.5,0.3zM1554.2,329.6l0.8,0.3 -0.5,0.8zM684.2,389.1l1.7,0.3 -0.9,0.8zM676.5,410.5l0.8,0.3 -0.5,0.3zM776,375.8l1.1,0.3 -0.6,0.8zM778.8,378.1l0.9,0.3 -0.3,0.5zM749.1,400.4l1.4,0.2 -0.6,0.9zM743.9,397.8l0.6,0.3 -0.3,0.6zM668.3,391.3l0.5,0 -0.2,0.3z" fill="#f3f8f3"/>
<path d="M1156.6,250l1.7,-0.2 2.1,0.8 2.4,0 2.3,0.1 2,1.3 0.5,2.3 0.9,2.2 0.8,1.8 0.6,1.9 -1.6,0.9 -1.7,0.6 -1.6,0.9 -1.6,1 -2.1,1.5 -2.2,1.3 -2.7,0.9 -2.8,0.1 -2.6,1.1 -2.4,1.6 0,2.8 -12.7,0 2.3,-1.6 2.5,-1.2 2.2,-1.1 2.1,-1.2 1.3,-2.6 -0.8,-2.7 1.3,-3.1 2.4,-2.3 2.5,-0.7 2.3,-1.3 0.2,-3.1z" fill="#c8e6cc"/>
<path d="M1135.9,272.9l12.7,0 0,4.8 -9.3,0 0,7 -2.8,1.4 0,4.8 -11.4,0 -0.3,-1.8 0.5,-1.9 1.1,-1.4 1.6,-1.1 1.2,-1.6 0.8,-2 0.6,-2 1.6,-1.4 1.7,-2.5z" fill="#c8e6cc"/>
<path d="M1167.1,252l3.2,-0.7 3,-1.3 2.2,-0.4 2.2,-0.7 1.9,-1.2 2.2,-0.8 15.9,0 -1,2.6 0.1,2.8 -0.8,1.8 -1.4,1.3 2.4,2.3 1.8,2.8 0.8,2.5 0.6,2.6 0.9,1.8 -0.2,2.1 0.3,2 0.2,1.9 -1.2,1.7 -0.3,2 0.5,2.2 1.2,1.8 2.7,2 3,1.6 -2.4,1.2 -2.4,1.4 -2.6,0.4 -2.7,0.7 -1.1,2.5 -1.7,2.1 -2.7,1 -2,2 -2.2,0.6 -2.3,0.3 -2.5,0.5 -1.6,-1.1 -1.5,-1.3 -1.5,-1.3 -1.4,-1.4 -2,-1.7 -1.8,-1.8 -2.4,-1.2 -2.3,-1.2 -1.8,-1.9 -2,-1.7 -2.3,-1.2 -2.4,-1.1 -2.8,-1.9 -3.3,-0.3 -2.5,-2.2 -2.5,-2.1 0,-3.9 2.4,-1.6 2.6,-1.1 2.8,-0.1 2.7,-0.9 2.2,-1.3 2.1,-1.5 1.6,-1 1.6,-0.9 1.7,-0.6 1.6,-0.9 -0.6,-1.9 -0.8,-1.8 -0.9,-2.2z" fill="#c8e6cc"/>
<path d="M1197.7,246.9l2.2,-0.6 2.3,-0.2 2.3,0.6 -0.5,2.2 -0.9,2 -0.7,2.8 2.1,2 1.4,1.7 0,2.2 -1.9,0.7 -1.5,1.3 -0.2,2 -0.1,2 -2,0 -0.6,-2.6 -0.8,-2.5 -1.8,-2.8 -2.4,-2.3 1.4,-1.3 0.8,-1.8 -0.1,-2.8z" fill="#c8e6cc"/>
<path d="M1205.9,257.4l2.6,0.7 2.6,0.6 2.7,0.3 2.6,0.6 1.4,2.9 1.8,1.9 2.4,1 2.6,0.7 2.5,-0.5 1.3,-1.3 1.6,-0.7 0,-4.2 2.9,-0.4 2.7,-0.8 2.5,0.5 2.2,1 2.2,1.1 2.2,1.1 -0.5,1.6 -0.3,1.7 0.2,1.7 0,1.8 0,20.3 0,5.6 -2.8,0 0,1.4 -3.3,-0.6 -3.4,-0.4 -1.6,-0.7 -1,-1.5 -1.1,-1.4 -0.7,-1.6 -2.9,-1.3 -3.1,-0.7 -3,-1 -2.6,-2.1 -2.8,1.4 -2.3,1.2 -3.2,-1.1 -3,-1.5 -3,-1.6 -2.7,-2 -1.2,-1.8 -0.5,-2.2 0.3,-2 1.2,-1.7 -0.2,-1.9 -0.3,-2 0.2,-2.1 -0.9,-1.8 2,0 0.1,-2 0.2,-2 1.5,-1.3 1.9,-0.7z" fill="#c8e6cc"/>
<path d="M1244.7,261.9l2.8,0.5 2.5,1.3 2.7,-0.3 2.8,0.5 2.8,-1.1 2.9,-0.6 1.8,0.5 1.8,0 5.7,0 1.5,2.3 0.2,2.8 -1.1,2 -0.3,2.2 -1.6,-0.9 -1.8,-0.8 -1,-1.9 -0.7,-2 0,0.8 1.8,1.1 0.5,2 0.2,2 0.9,1.7 0.9,2.5 1.9,2 1.3,2.3 0.7,2.5 0.9,1.6 1.6,0.9 1,1.4 0.5,1.8 -33.8,0 0,-20.3 0,-1.8 -0.2,-1.7 0.3,-1.7z" fill="#54ac5c"/>
<path d="M1244.1,289l33.8,0 0.6,2.2 1.1,2.1 -0.2,2.3 -0.1,2.4 1.9,0.8 1.5,1.4 -2.2,1.5 -2.3,1.4 -0.8,1.8 -0.6,1.9 -0.1,1.9 0,2 -1,2.1 -0.1,2.4 -1.2,2.6 -1.9,2.2 -2,1.4 0.4,2.9 -1,2.7 -1.6,0.9 -1.5,1.1 2.5,1.4 2.3,1.7 0.9,1.5 1,1.4 0.7,1.5 0.8,1.5 -2.7,0.3 -2.6,0.9 -1.5,1.1 -1.7,-0.3 -1.8,0.2 -1.8,0 -1.7,0.4 -0.6,0.5 -2,-1.1 -1.7,-1.4 -2.6,-2.1 -3.3,0.1 -1.4,-1.8 -1.5,-1.6 -1.4,-1.8 -1.7,-1.5 -1.9,-1.7 -1.8,-1.7 -1.2,-1.7 -0.2,-2 -1.7,-2.8 -0.3,-2.5 -0.8,-2.3 -0.8,-1.5 -0.7,-1.6 1.5,-2.7 1.4,-2.7 2.8,0 0,-10.7 0,-1.4 2.8,0z" fill="#c8e6cc"/>
<path d="M1276.7,310.7l0,-2 0.1,-1.9 0.6,-1.9 0.8,-1.8 2.3,-1.4 2.2,-1.5 0.6,2 0.6,2 1.6,1.3 1.2,1.8 1.8,2.4 2.8,1.2 2.6,1.7 1.5,2.6 -1.9,0.6 -1.8,-1.3 -1.8,-1.2 -1.2,-2 -2,-0.9 -3.1,-0.3 -2.9,-0.8 -1.9,0.9z" fill="#f3f8f3"/>
<path d="M1276.7,310.7l2.1,-0.5 1.9,-0.9 2.9,0.8 3.1,0.3 2,0.9 1.2,2 1.8,1.2 1.8,1.3 -1.7,2.8 1.5,1 1.9,0.4 -0.3,2.2 2.4,0.9 0.7,2.5 2.2,0.4 2.1,0.8 2.1,0.7 2.1,0.9 2.8,0 -2.2,2.1 -2.5,1.7 -1.4,2.8 -2.4,1.9 -2.1,0.6 -2.2,0.4 -2.1,0.4 -2.1,0.9 -2.8,0.8 -2.1,0.9 -2.2,0.5 -2.1,0.1 -2.1,-0.7 -2.8,-1.1 -2.9,-1.1 -0.3,-0.6 -0.8,-1.5 -0.7,-1.5 -1,-1.4 -0.9,-1.5 -2.3,-1.7 -2.5,-1.4 1.5,-1.1 1.6,-0.9 1,-2.7 -0.4,-2.9 2,-1.4 1.9,-2.2 1.2,-2.6 0.1,-2.4z" fill="#c8e6cc"/>
<path d="M1295.4,315.2l0.6,3.4 -0.8,1.4 -3.4,-1.4 1.7,-2.8z" fill="#f3f8f3"/>
<path d="M1296,318.6l2,1.2 1.4,1.9 1.9,-0.3 1.8,-0.3 1.9,-0.5 1.5,-1.2 3,0 2.9,-0.7 2.9,-0.7 2.8,-0.8 -0.5,2.1 0.8,2.1 -1.2,1.6 -1,1.7 -0.7,1.8 -0.5,1.9 -1.8,2.4 -2.2,1.9 -0.4,2.9 -1.3,2.7 -1,1.8 -0.9,1.9 -1.8,1.2 -1.9,0.7 -2.1,1 -1.8,1.5 -1.7,1.5 -1.5,1.7 -1.2,1.7 -1.4,1.5 -1.3,1.6 -1.5,1.4 -1.7,-2.3 0,-10.4 0,-3.1 2.8,-0.8 2.1,-0.9 2.1,-0.4 2.2,-0.4 2.1,-0.6 2.4,-1.9 1.4,-2.8 2.5,-1.7 2.2,-2.1 -2.8,0 -2.1,-0.9 -2.1,-0.7 -2.1,-0.8 -2.2,-0.4 -0.7,-2.5 -2.4,-0.9 0.3,-2.2z" fill="#f3f8f3"/>
<path d="M1269.7,339.2l2.6,-0.9 2.7,-0.3 0.3,0.6 2.9,1.1 2.8,1.1 2.1,0.7 2.1,-0.1 2.2,-0.5 2.1,-0.9 0,3.1 0,10.4 1.7,2.3 -2.1,1.2 -1.9,1.6 -1.4,2.8 -1.4,2.9 -2.4,-2.1 -1.9,-2.5 -2,-2.3 -2.5,-1.9 -3,-0.5 -2.9,-1.2 0,-3.4 1.4,-2.8 1.4,-2 -0.6,-1.7 -1.3,-1.3 0,-1.9z" fill="#96d29b"/>
<path d="M1260.6,341.1l0.6,-0.5 1.7,-0.4 1.8,0 1.8,-0.2 1.7,0.3 1.5,-1.1 0.9,1.5 0,1.9 1.3,1.3 0.6,1.7 -1.4,2 -1.4,2.8 0,3.4 -2.6,0.2 -2.4,-1 -2.4,1 -2.6,0.1 -2.5,0.8 -0.8,-2.7 1.1,-2.6 1.4,-2.8 2.3,-2 -0.9,-1.7z" fill="#c8e6cc"/>
<path d="M1259.7,354.1l2.6,-0.1 2.4,-1 2.4,1 2.6,-0.2 2.9,1.2 3,0.5 2.5,1.9 2,2.3 1.9,2.5 2.4,2.1 -1,2.4 -0.1,2.6 1.3,1.2 0.6,1.6 -0.4,2.1 -0.1,2.2 0.9,2.5 2.2,1.7 -1.8,0.4 -1.5,1 -1.6,1 -1.9,-0.1 -2.1,0.2 -2.2,0 -2,0.7 -2.2,-0.1 -1.1,-0.3 -0.4,-2.9 -1.3,-2.7 -3.2,-0.3 -2.7,-1.1 -2.6,-1.1 -0.9,-0.9 -1.4,-2.7 -2,-2.4 -0.7,-2.8 0.4,-2.8 2.4,-1.2 1.6,-2.2 -0.9,-2.5z" fill="#c8e6cc"/>
<path d="M1257.2,354.9l2.5,-0.8 0,3.7 0.9,2.5 -1.6,2.2 -2.4,1.2 0,-2.2 -0.5,-2 -0.6,-0.9 1.1,-1.7z" fill="#c8e6cc"/>
<path d="M1208.2,367.9l0.9,-1.9 0.5,-2 2.3,0.3 2.2,0.5 1.9,-1.4 2.1,-1.1 0.2,-2.9 0.9,-2.8 2.1,-2.1 2.2,-2.1 0.2,-1.8 -0.2,-1.8 0.6,-1.7 0.2,-1.7 0.6,-2.2 1.1,-2.1 -0.3,-2.2 1.4,-1.2 1.5,-1.1 2,0.8 1.8,1.3 2.2,0.7 2.2,0 2.8,-1.7 3.1,-1.1 8.3,0 3.3,-0.1 2.6,2.1 1.7,1.4 2,1.1 -0.3,2 0.9,1.7 -2.3,2 -1.4,2.8 -1.1,2.6 0.8,2.7 -0.6,2 -1.1,1.7 0.6,0.9 0.5,2 0,2.2 -0.4,2.8 0.7,2.8 2,2.4 1.4,2.7 -3,1.3 -3.2,0.7 0.4,1.7 -0.1,1.8 0.1,1.8 -0.1,1.7 2.1,2.4 1.3,3 -2.6,-0.5 -2.5,-0.6 -1.3,-1.6 -1.6,-1.3 -2.5,-0.8 -2.3,-1.1 -2.8,0 -1.2,-1.2 -2.5,-0.1 -2.3,1 -0.4,-2.5 -0.7,-2.3 0,-6.2 -3.3,-0.3 -3.2,-0.6 -3.2,1.1 -2.5,2 -1,-1.3 -0.9,-1.5 -1.1,-1.5 0.2,-1.9 -10,0z" fill="#c8e6cc"/>
<path d="M1205,362.3l2.4,0.5 2.2,1.2 2.3,0.3 2.2,0.5 1.9,-1.4 2.1,-1.1 0.2,-2.9 0.9,-2.8 2.1,-2.1 2.2,-2.1 0.2,-1.8 -0.2,-1.8 0.6,-1.7 0.2,-1.7 0.6,-2.2 1.1,-2.1 -5.9,0 -0.1,1.9 -0.8,1.8 -4.8,0 -3.4,0 0,2.5 1.7,0.1 1.7,-0.3 -0.6,2.6 0.3,2.7 0.1,2.9 -1.5,2.5 -2,-0.1 -2,-0.2 -2.8,0.3 0.3,1.7z" fill="#f3f8f3"/>
<path d="M1200.2,348.2l5.1,0 0,-3.7 2.9,-0.5 2.8,0.8 0,2.5 1.7,0.1 1.7,-0.3 -0.6,2.6 0.3,2.7 0.1,2.9 -1.5,2.5 -2,-0.1 -2,-0.2 -2.8,0.3 0.3,1.7 -1.2,2.8 -2,-2.5 -2.5,-2 -1.9,-1.9 -0.4,-2.6 1.3,-2.5z" fill="#dcf0df"/>
<path d="M1200.2,348.2l0.9,-3.7 4.2,0 0,3.7zM1197.4,340.6l1.1,0 -0.5,1.1z" fill="#f3f8f3"/>
<path d="M1191.7,349.9l0.9,0.3 -0.6,0.8zM1194,346.2l0.6,0.3 -0.3,0.3z" fill="#f3f8f3"/>
<path d="M1197.4,338l1.3,-2.6 1,-2.7 1.9,-0.3 1.5,-1.1 2.8,1.1 1.1,-2.7 1.2,-2.7 1.1,-1.6 0.6,-1.9 1.2,-1.5 1,-1.7 0,-2.4 1.4,-1.9 1.2,-1.1 0.8,2.5 0.6,2.6 1.1,2.8 -4.2,0 0.5,2 0.8,1.8 1.3,1.6 1.1,1.7 -1.5,1.9 -0.5,2.3 0,4.2 1.2,1.6 1.5,1.4 0.8,1.8 1,1.7 -4.8,0 -3.4,0 -2.8,-0.8 -2.9,0.5 -4.2,0 -0.3,-3.4 -2.2,-1z" fill="#c8e6cc"/>
<path d="M1214.7,334.1l0.5,-2.3 1.5,-1.9 1.7,-0.3 1.7,-0.6 1.6,-0.5 1.6,-0.7 1.7,-0.7 1.3,-1.2 1.1,-0.3 2.7,-1.1 2.7,-1.1 3.3,-0.7 2.1,-2.7 1.7,2.8 0.2,2 1.2,1.7 1.8,1.7 1.9,1.7 1.7,1.5 1.4,1.8 1.5,1.6 1.4,1.8 -8.3,0 -3.1,1.1 -2.8,1.7 -2.2,0 -2.2,-0.7 -1.8,-1.3 -2,-0.8 -1.5,1.1 -1.4,1.2 0.3,2.2 -5.9,0 -0.1,1.9 -0.8,1.8 -1,-1.7 -0.8,-1.8 -1.5,-1.4 -1.2,-1.6z" fill="#f3f8f3"/>
<path d="M1215.8,286.1l2.8,-1.4 2.6,2.1 3,1 3.1,0.7 2.9,1.3 0.7,1.6 1.1,1.4 1,1.5 1.6,0.7 3.4,0.4 3.3,0.6 0,10.7 -2.8,0 -1.4,2.7 -1.5,2.7 0.7,1.6 0.8,1.5 0.8,2.3 0.3,2.5 -2.1,2.7 -3.3,0.7 -2.7,1.1 -2.7,1.1 -1.1,0.3 -1.3,1.2 -1.7,0.7 -1.6,0.7 -1.6,0.5 -1.7,0.6 -1.7,0.3 -1.1,-1.7 -1.3,-1.6 -0.8,-1.8 -0.5,-2 4.2,0 -1.1,-2.8 -0.6,-2.6 -0.8,-2.5 -1.2,1.1 -0.7,-1.8 -1.2,-1.6 0.2,-2.5 1.9,-1.3 1.6,-1.4 1.2,-2 0.7,-2.1 1.4,-2.2 0.4,-2.6 -0.5,-2.5 -0.4,-2.5 -1,-1.5 -1.3,-1.1z" fill="#f3f8f3"/>
<path d="M1207.3,284.7l3,1.5 3.2,1.1 2.3,-1.2 0,4.8 1.3,1.1 1,1.5 0.4,2.5 0.5,2.5 -0.4,2.6 -1.4,2.2 -0.7,2.1 -1.2,2 -1.6,1.4 -1.9,1.3 -0.2,2.5 -2.9,1.5 -1.6,-0.9 -1.9,0.2 -1.8,0.3 -1.8,-0.2 -1.7,0.7 -1.7,0.7 -1.9,-0.3 -1.7,-0.5 -2,-1.2 -2.3,-0.5 -2.7,-0.2 -2.7,0.7 -0.4,2.6 -1,2.5 -2.3,-1.7 -1.7,-0.5 -1.5,-1.6 -1.9,-1 0,-2.8 -2.2,-1.7 3.1,-0.8 3.1,0.7 3.1,-1 1.4,-1.8 0.6,-2.2 0,-6.7 2.3,-0.3 2.2,-0.6 2,-2 2.7,-1 1.7,-2.1 1.1,-2.5 2.7,-0.7 2.6,-0.4 2.4,-1.4z" fill="#f3f8f3"/>
<path d="M1159.7,280.5l2.4,1.1 2.3,1.2 2,1.7 1.8,1.9 2.3,1.2 2.4,1.2 1.8,1.8 2,1.7 1.4,1.4 1.5,1.3 1.5,1.3 1.6,1.1 2.5,-0.5 0,6.7 -0.6,2.2 -1.4,1.8 -3.1,1 -3.1,-0.7 -3.1,0.8 -3.1,1.1 -3.2,1.2 -2.8,1.6 -1.9,0.5 -1.8,0.7 -1,2.1 -1.5,1.8 -0.7,1.9 -0.2,2.1 -1.8,-0.5 -1.8,0.2 -1.7,0.4 -1.8,0.4 -0.9,-1.8 -0.8,-1.8 -1.1,-2.6 -1.7,0.4 -1.6,0.8 -1.8,0.2 -1.7,-0.5 0,-0.9 -0.3,-1.7 -1,-1.4 -1.1,-1.5 0.1,-1.9 2,-2.5 2.2,0.2 2.3,0.3 1.9,1.2 2.1,0.8 2.2,-0.3 2.1,-0.5 2,-1.1 2.2,-0.3 0,-2.8 -0.4,-3.2 -1.9,-2.5 -0.3,-3.1 -0.8,-3 0.1,-3.1 1.4,-2.9 0,-3.1 -0.6,-3.1z" fill="#dcf0df"/>
<path d="M1125.1,290.9l11.4,0 0,-4.8 2.8,-1.4 0,-7 9.3,0 0,-3.7 2.5,2.1 2.5,2.2 3.3,0.3 2.8,1.9 -4.5,0 0.6,3.1 0,3.1 -1.4,2.9 -0.1,3.1 0.8,3 0.3,3.1 1.9,2.5 0.4,3.2 0,2.8 -2.2,0.3 -2,1.1 -2.1,0.5 -2.2,0.3 -2.1,-0.8 -1.9,-1.2 -2.3,-0.3 -2.2,-0.2 -2,2.5 -1.2,-1.8 -2,-0.9 -1.9,-1 -1.4,-1.6 -2.9,0.7 -2.8,1 0,-8.5 -0.5,-3.3z" fill="#f3f8f3"/>
<path d="M1126.5,305.9l2.8,-1 2.9,-0.7 1.4,1.6 1.9,1 2,0.9 1.2,1.8 -0.1,1.9 1.1,1.5 1,1.4 0.3,1.7 -3.2,-0.7 -3.3,0.2 -2.2,-0.6 -2.1,-0.2 -2.1,0.8 -2.1,0.5 -0.5,-1.7 -0.9,-1.4 -0.1,-1.8 -0.8,-1.6 0.9,-2.2z" fill="#c8e6cc"/>
<path d="M1126,316l8.5,-0.5 0,2.5 -3.7,2z" fill="#f3f8f3"/>
<path d="M1130.8,320l1.9,-0.8 1.8,-1.2 0,-2.5 3.3,-0.2 3.2,0.7 0,0.9 1.7,0.5 1.8,-0.2 1.6,-0.8 1.7,-0.4 1.1,2.6 0.8,1.8 0.9,1.8 0,4.8 -2.2,1.3 -1.7,1.8 -1.2,-1.6 -1.4,-1.5 -2.6,-1.3 -0.8,-2.9 -2.4,1.7 -2.7,1.1 -1.3,-1.3 -1.1,-1.5 -1.1,-1.5z" fill="#f3f8f3"/>
<path d="M1135.6,325.6l5.1,-2.8 3.4,4.2 -3.4,4.5z" fill="#f3f8f3"/>
<path d="M1140.7,331.5l3.4,-4.5 2.6,3.1 2.5,-0.5 2.8,9z" fill="#f3f8f3"/>
<path d="M1152,338.6l0.1,-2.4 -0.4,-2.5 -0.9,-2.3 -1.6,-1.8 1.4,-2.6 0,-4.8 1.8,-0.4 1.7,-0.4 1.8,-0.2 1.8,0.5 2,0.5 2,0.7 1.9,0.7 2,0.6 0.4,3.2 0.2,3.2 -1.4,2.9 -0.6,3.1 -3.1,0 -2.9,1.2 -3.1,0.4z" fill="#c8e6cc"/>
<path d="M1157.7,321.7l0.2,-2.1 0.7,-1.9 1.5,-1.8 1,-2.1 1.8,-0.7 1.9,-0.5 2.8,-1.6 3.2,-1.2 3.1,-1.1 2.2,1.7 0,2.8 1.9,1 1.5,1.6 0.6,1.6 -2.2,1.2 -2,1.4 -2.9,-0.3 -1.9,0 -1.9,0 -1.9,-0.2 -1.9,0.5 0.5,2.1 -0.3,2.1 -2,-0.6 -1.9,-0.7 -2,-0.7z" fill="#dcf0df"/>
<path d="M1164.2,336.6l0.6,-3.1 1.4,-2.9 -0.2,-3.2 -0.4,-3.2 0.3,-2.1 -0.5,-2.1 1.9,-0.5 1.9,0.2 1.9,0 1.9,0 0.9,1.7 0.4,1.9 0.2,1.8 0.2,1.9 0.6,2.8 -0.3,2.9 1.7,1.1 -1.4,1.2 -1.4,1.2 -1.6,0.8 -1.8,0.5 -3.1,-1.2z" fill="#c8e6cc"/>
<path d="M1176.7,333.8l-1.7,-1.1 0.3,-2.9 -0.6,-2.8 -0.2,-1.9 -0.2,-1.8 -0.4,-1.9 -0.9,-1.7 2.9,0.3 0.8,2.9 1.1,2.7 0,7.9z" fill="#c8e6cc"/>
<path d="M1177.8,333.5l0,-7.9 -1.1,-2.7 -0.8,-2.9 2,-1.4 2.2,-1.2 1.1,-1.1 2.3,1.7 0,4.8 -1.2,2.8 -1.3,2.8 0,4.6z" fill="#c8e6cc"/>
<path d="M1181,333l0,-4.6 1.3,-2.8 1.2,-2.8 0,-4.8 1,-2.5 0.4,-2.6 2.7,-0.7 2.7,0.2 2.3,0.5 2,1.2 1.7,0.5 1.9,0.3 1.7,-0.7 1.7,-0.7 1.8,0.2 1.8,-0.3 1.9,-0.2 1.6,0.9 2.9,-1.5 1.2,1.6 0.7,1.8 -1.4,1.9 0,2.4 -1,1.7 -1.2,1.5 -0.6,1.9 -1.1,1.6 -1.2,2.7 -1.1,2.7 -2.8,-1.1 -1.5,1.1 -1.9,0.3 -1,2.7 -1.3,2.6 -2.3,-0.6 -2,1.2 -2.8,0.3 -1.4,-1.2 -1.4,-1.1 -0.3,-1.9 -1.1,-1.5 -2.6,-0.4z" fill="#96d29b"/>
<path d="M1208.2,367.9l1.9,-0.3 10,0 -0.2,1.9 1.1,1.5 0.9,1.5 1,1.3 2.5,-2 3.2,-1.1 3.2,0.6 3.3,0.3 0,6.2 0.7,2.3 0.4,2.5 2.3,-1 2.5,0.1 -0.1,3 0.4,3 -5.7,0 0,9 2.3,1.7 1.7,2.2 -2.9,0.4 -2.8,0.8 -2,-0.4 -2.1,-0.2 -1.9,-1 -2.2,-0.1 -12.7,0 -3.2,0.6 -3.1,-1.2 1.1,-2.6 -0.8,-2.8 1,-2.5 0.7,-2.5 0.5,-2 1,-1.8 1.2,-1.5 1,-1.8 -1.1,-3 -0.6,-3.2 -0.8,-1.9 -0.8,-1.9 -0.7,-2zM1207.6,364l2,0 -1.4,3.1z" fill="#f3f8f3"/>
<path d="M1235.6,387.7l5.7,0 -0.4,-3 0.1,-3 1.2,1.2 2.8,0 2.3,1.1 2.5,0.8 1.6,1.3 1.3,1.6 2.5,0.6 2.6,0.5 -1.3,-3 -2.1,-2.4 0.1,-1.7 -0.1,-1.8 0.1,-1.8 -0.4,-1.7 3.2,-0.7 3,-1.3 0.9,0.9 2.6,1.1 2.7,1.1 0.6,2 0.6,2 0,4.5 -0.8,1.7 -0.9,1.7 1.4,1.1 -2.1,0.9 -2,1.1 -2.1,0.7 -2.3,0.1 0.6,1.7 -2.3,-0.1 -2,0.9 -1.4,1.4 -1.3,1.5 -1.1,1.6 -1.6,1.2 -2.4,-0.2 -2.4,-0.1 -2.6,-0.8 -2.8,0.2 -1.7,-2.2 -2.3,-1.7z" fill="#c8e6cc"/>
<path d="M1266.5,377.5l3.2,0.3 1.3,2.7 0.4,2.9 -0.6,2 1.2,1.9 0.7,2.1 1.4,1.6 0.9,2 -1.1,2.8 -0.6,2.9 -2.5,-2 1.3,-2.3 -1,-2.5 -2,-0.4 -1.7,-1 -1.4,-1.1 0.9,-1.7 0.8,-1.7 0,-4.5 -0.6,-2z" fill="#c8e6cc"/>
<path d="M1287.8,380.6l-0.1,3 0.7,2.9 0,6.8 -1.5,1 -1.1,1.4 -0.9,1.5 -1.1,1.5 -2.8,1.7 -3.1,1.1 -1.3,1.5 -1.6,1.1 -1.9,0.9 -0.9,1.8 0.9,3.1 0.5,3.1 0,5.7 -1.5,1.3 -1.8,0.8 -2,0.4 -1.5,1.4 -0.2,2.1 -0.1,2.2 -2.5,-0.3 -0.2,-1.8 -0.7,-1.7 0.5,-1.8 0.1,-1.8 -0.7,-2.7 -1,-2.6 1.5,-1.8 1.9,-1.3 1,-2.5 -0.1,-2.6 0,-7.9 -1.6,-1.1 -1.5,-1.3 -1.8,-0.4 -1.9,-0.3 -0.6,-1.7 2.3,-0.1 2.1,-0.7 2,-1.1 2.1,-0.9 1.7,1 2,0.4 1,2.5 -1.3,2.3 2.5,2 0.6,-2.9 1.1,-2.8 -0.9,-2 -1.4,-1.6 -0.7,-2.1 -1.2,-1.9 0.6,-2 1.1,0.3 2.2,0.1 2,-0.7 2.2,0 2.1,-0.2 1.9,0.1 1.6,-1 1.5,-1z" fill="#c8e6cc"/>
<path d="M1245,401.2l2.4,0.1 2.4,0.2 1.6,-1.2 1.1,-1.6 1.3,-1.5 1.4,-1.4 2,-0.9 2.3,0.1 1.9,0.3 1.8,0.4 1.5,1.3 1.6,1.1 0,7.9 0.1,2.6 -1,2.5 -1.9,1.3 -1.5,1.8 -2.6,-1.1 -2.8,0.5 -2.4,-2.4 -2.4,-2.4 -2,-1.4 -2.2,-1.1 -1.4,-1.5 -1.2,-1.6z" fill="#c8e6cc"/>
<path d="M1230,413l0,7.9 0.7,3.1 1.3,2.9 0.9,-1.6 1.8,-0.6 1.9,-0.4 1,-1.7 2.1,0.5 1.9,-0.8 2.1,0.1 1.9,0.8 0.8,-1.6 1.3,-1.1 1.1,-1.3 1,-1.4 2.1,-0.4 2,-0.6 1.7,-1.3 1,-1.9 -2.4,-2.4 -2.4,-2.4 -2,-1.4 -2.2,-1.1 -1.4,-1.5 -1.2,-1.6 0,-2 -2.9,0 -2.8,0.6 -1.6,-0.9 -1.8,0.2 -1.4,1 -1.7,0.5 0,10.4z" fill="#c8e6cc"/>
<path d="M1206.7,399.5l3.1,1.2 3.2,-0.6 12.7,0 2.2,0.1 1.9,1 2.1,0.2 2,0.4 2.3,-0.5 2,-1 2.3,0.6 2.2,-0.5 2.3,0.8 -2.9,0 -2.8,0.6 -1.6,-0.9 -1.8,0.2 -1.4,1 -1.7,0.5 0,10.4 -2.8,0 0,7.9 0,10.2 -1.8,0.6 -1.8,0.8 -1.9,-0.5 -1.9,-0.1 -2.5,-0.2 -1.5,-1.4 -0.1,-2 -1.2,-1.5 -1.5,-1.1 -0.9,-2.7 0.1,-2.9 -0.8,-2.8 0.2,-2.9 -0.8,-2.9 -1.7,-2.4 -1.3,-2.7 -1.9,-2.4 -0.9,-2.3z" fill="#c8e6cc"/>
<path d="M1220.1,431.7l2.5,0.2 1.9,0.1 1.9,0.5 1.8,-0.8 1.8,-0.6 0,-10.2 0.7,3.1 1.3,2.9 0.9,-1.6 1.8,-0.6 1.9,-0.4 1,-1.7 2.1,0.5 1.9,-0.8 2.1,0.1 1.9,0.8 0.8,-1.6 1.3,-1.1 1.1,-1.3 1,-1.4 2.1,-0.4 2,-0.6 1.7,-1.3 1,-1.9 2.8,-0.5 2.6,1.1 1,2.6 0.7,2.7 -0.1,1.8 -0.5,1.8 0.7,1.7 0.2,1.8 2.5,0.3 -0.2,2.4 -1.2,2.1 -1.7,2.3 -2.2,1.9 -1.2,2 -1.7,1.7 -2.2,2.1 -2.6,1.8 -2.7,1.4 -2.4,1.7 -2.3,0.6 -2.3,0 -2.2,0.8 -2.4,0.7 -2.1,-1.2 -1.7,0.9 -1.6,1.1 -1.9,-0.7 -1.9,0.6 -2.5,-0.3 -2.1,-1.4 0.5,-2.2 -1,-2 0.3,-3.1 -1,-2.1 -1.9,-1.3 -0.8,-2.7z" fill="#54ac5c"/>
<path d="M1313,384.8l0.4,2.6 0.5,2.6 1.3,2.2 0.9,2.5 -0.5,3.2 -2,2.5 -2.5,1.6 -1.2,2.6 0.8,2.8 0,2.8 -1.3,2.7 -1.9,2.4 -1,2.9 0.3,3 -2.6,1.1 -2.8,0.6 -0.8,-1.6 -0.7,-1.7 -1.5,-1 -1.3,-1.3 -0.9,-2.3 -0.2,-2.5 1.7,-2.4 1.1,-2.7 -0.4,-1.7 -0.5,-1.8 -0.4,-1.8 0.5,-1.7 1.5,-2.1 1.3,-2.2 2.9,-1.1 2.8,-1.1 1.4,-2.5 1.4,-2.3 1.7,-2.3z" fill="#dcf0df"/>
<path d="M1295.7,383.4l0.9,0.6 -0.6,0.6zM1298.8,385.1l0.6,0.6 -0.6,0.3zM1301.1,386.8l0.6,0.6 -0.6,0.3zM1335.7,407.7l1.4,0.3 -0.8,0.8zM1330,409.9l1.4,0.6 -0.8,0.8zM1330.3,364l0.6,0.3 -0.3,0.2zM1104.2,303.3l1.1,0.9 -0.9,0.3zM1106.1,307.9l0.9,0.8 -0.9,0.3zM1101.9,302.8l0.6,0.3 -0.6,0.2zM1108.4,305.3l0.6,0.3 -0.6,0.3z" fill="#f3f8f3"/>
<path d="M1157.1,209.7l3.2,-0.1 3.1,-0.4 2.5,0.7 2.7,0.2 2.2,-1.4 2.5,-1 2,-0.4 2,-0.7 -2.6,-0.8 1.1,-2.4 2.3,-1 -2.2,-0.2 -2,-0.7 -0.7,-2 -0.5,-2.2 -2,-1.4 -1.9,-1.4 -1.2,-0.9 -1.2,1.3 -1.6,1 0,2.8 0,2 0.3,1.4 -0.6,2.3 1.1,1.1 -2.2,1.1 -2.9,0.6 -1.8,1.1z" fill="#1a7d36"/>
<path d="M1423,281.9l0.1,-2.7 0.7,-2.6 2,0.6 2,0.5 0,2 1.9,0.1 1.7,0.7 1.9,0.7 1.9,-0.7 -0.6,2 -2.8,1.7 1.7,2.2 1.2,2.2 1,2.3 -0.8,1.7 -1.2,-2.1 -0.2,-2.4 -1.9,0.1 -1.8,-0.6 -1.9,1.2 -2.1,0.7 -0.4,-1.9 -0.2,-2 -1,-1.9z" fill="#96d29b"/>
<path d="M1527.8,376.7l-0.3,1.4 5.7,-2.6 0,-0.8 -4.2,0.6z" fill="#f3f8f3"/>
<path d="M1496.7,338l2.8,-1.1 0.3,1.7 -1.7,0.8z" fill="#c8e6cc"/>
<path d="M1525.6,238.5l2,2.3 0.5,3 2.2,-0.3 2.1,0.9 2.2,-1.2 2.3,-1.1 -1.2,-1.6 -1.1,-1.7 1.7,-1.1 1.7,-1 1.6,-1.2 1.3,-1.5 1.6,-0.9 1.2,-1.4 -2.3,-2 -2.5,1.8 -2.8,1.1 -3.2,0.5 -2.2,0.7 -2.1,1 -1.3,2z" fill="#1b561b"/>
<path d="M1125.7,312.6l7.9,-0.5 0,1.4 -7.9,0.6z" fill="#54ac5c"/>
<path d="M1249.8,434.5l4.6,-2.8 2.2,2.8 -3.4,2.8 -2.5,-1.1z" fill="#f3f8f3"/>
<path d="M1261.2,423.8l2.8,0.5 0,2.3 -3.4,0z" fill="#96d29b"/>
</g>
<g id="navctl">
<rect x="649.3" y="96" width="29.4" height="87.5" rx="14.7" fill="#003c05"/>
<rect x="634.5" y="124.8" width="58.6" height="29.5" rx="14.7" fill="#003c05"/>
<path d="M664,102.5 L672.6,117 L655.4,117Z M664,177.5 L672.6,162.8 L655.4,162.8Z M641,140 L655.4,131.3 L655.4,148.7Z M687,140 L672.6,131.3 L672.6,148.7Z" fill="#ffffff"/>
<rect x="649.3" y="191.6" width="29.4" height="88" rx="14.7" fill="#003c05"/>
<path d="M656,206 H672 V210 H656Z M662,200 H666 V216 H662Z M656,261.5 H672 V265.3 H656Z" fill="#ffffff"/>
<g fill="none" stroke="#b9a6ee" stroke-width="0.9">
<circle cx="664" cy="235.4" r="13"/>
<ellipse cx="664" cy="235.4" rx="8.5" ry="13"/>
<ellipse cx="664" cy="235.4" rx="3.5" ry="13"/>
<ellipse cx="664" cy="235.4" rx="13" ry="8.5"/>
<ellipse cx="664" cy="235.4" rx="13" ry="3.5"/>
<path d="M651,235.4H677M664,222.4V248.4"/>
</g>
</g>
</svg>
<!--/MAP-->

<!-- legend -->
<div class="abs" style="left:622px;top:619px;width:244px;height:32px;background:linear-gradient(90deg,#ffffff 0%,#cfe7cf 18%,#88bf88 45%,#3c943c 70%,#0d7a12 84%,#064d08 100%)"></div>
<div class="t" style="left:621px;top:621px;font-size:19.7px;color:#111">0</div>
<div class="t" style="left:767px;top:621px;font-size:19.7px;color:#111">76,509</div>
<div class="hr" style="left:606px;width:1160px;top:667px;background:#e3e3e3"></div>

<div class="t b" style="left:636.5px;top:688.7px;font-size:22px;letter-spacing:.15px;color:#222;white-space:pre">Report View by  Selection</div>
<div class="t b" style="left:1617px;top:689px;font-size:22px;letter-spacing:.5px;color:#0f4c81">Customize</div>
<div class="hr" style="left:606px;width:1160px;top:726px;background:#d6d6d6"></div>

<!-- table -->
<div class="abs" style="left:606px;top:728px;width:1152px;height:62px;background:#f5f5f5"></div>
<div class="row" style="top:790px;height:54px"></div>
<div class="row" style="top:844px;height:54px"></div>
<div class="row" style="top:898px;height:55px"></div>
<div class="row" style="top:953px;height:42px"></div>
<div class="row" style="top:995px;height:42px"></div>

<div class="th" style="left:627.5px;top:733px;letter-spacing:.3px">Total:</div><div class="th" style="left:641px;top:759px">5</div>
<div class="th" style="left:736px;top:745.7px;letter-spacing:.4px">Research Fields</div>
<div class="th" style="left:956px;top:733px;letter-spacing:.35px">Web of Science</div><div class="th" style="left:970.5px;top:759px;letter-spacing:.35px">Documents</div>
<div class="th" style="left:1187px;top:746px;letter-spacing:.3px;color:#2d5597">Cites</div>
<div class="abs" style="left:1248px;top:753px;width:0;height:0;border-left:6px solid transparent;border-right:6px solid transparent;border-top:7px solid #4d7dc8"></div>
<div class="th" style="left:1348px;top:746px;letter-spacing:.4px">Cites/Paper</div>
<div class="th" style="left:1568px;top:746px;letter-spacing:.15px">Top Papers</div>

<div class="num" style="left:640px;width:58px;top:804px">1</div>
<div class="num" style="left:640px;width:58px;top:859px">2</div>
<div class="num" style="left:640px;width:58px;top:914px">3</div>
<div class="num" style="left:640px;width:58px;top:962px">4</div>
<div class="num" style="left:640px;width:58px;top:1004px">0</div>

<div class="fld" style="top:793px">AGRICULTURAL<br>SCIENCES</div>
<div class="fld" style="top:848px">PLANT &amp; ANIMAL<br>SCIENCE</div>
<div class="fld" style="top:903px">ENVIRONMENT/E<br>COLOGY</div>
<div class="fld" style="top:962.5px">ENGINEERING</div>
<div class="fld" style="top:1005px">ALL FIELDS</div>

<div class="num" style="left:1032px;width:100px;top:804px">2,169</div>
<div class="num" style="left:1032px;width:100px;top:859px">1,843</div>
<div class="num" style="left:1032px;width:100px;top:914px">817</div>
<div class="num" style="left:1032px;width:100px;top:962px">306</div>
<div class="num" style="left:1032px;width:100px;top:1004px">7,250</div>

<div class="num" style="left:1214px;width:100px;top:804px">33,315</div>
<div class="num" style="left:1214px;width:100px;top:859px">23,765</div>
<div class="num" style="left:1214px;width:100px;top:914px">13,935</div>
<div class="num" style="left:1214px;width:100px;top:962px">3,975</div>
<div class="num" style="left:1214px;width:100px;top:1004px">106,772</div>

<div class="num" style="left:1404px;width:100px;top:804px">15.36</div>
<div class="num" style="left:1404px;width:100px;top:859px">12.89</div>
<div class="num" style="left:1404px;width:100px;top:914px">17.06</div>
<div class="num" style="left:1404px;width:100px;top:962px">12.99</div>
<div class="num" style="left:1404px;width:100px;top:1004px">14.73</div>

<div class="bar" style="top:799px"><b style="width:100%"></b><span class="w">19</span></div>
<div class="bar" style="top:854px"><b style="width:94.5%"></b><span>18</span></div>
<div class="bar" style="top:909px"><b style="width:57%"></b><span>11</span></div>
<div class="bar" style="top:958px"><b style="width:21%"></b><span>4</span></div>
<div class="bar" style="top:1001px"><b style="width:100%"></b><span class="w">67</span></div>


<!-- annotations -->
<div class="red" style="left:219.6px;top:206.5px;width:367.6px;height:153.5px"></div>
<div class="red" style="left:656.5px;top:942.4px;width:1110.7px;height:53.7px"></div>
<!-- translucent veil over top band -->
<div id="veil" class="abs"></div>
<div class="hl" style="left:353.5px">喜讯！我校工程学科首次进入</div>
<div class="hl lat" style="left:1222.5px;transform:scaleX(.80)">ESI</div>
<div class="hl" style="left:1312px">全球前</div>
<div class="hl lat" style="left:1519px;transform:scaleX(.93)">1</div>
<div class="hl lat" style="left:1556.5px;transform:scaleX(.915)">%</div>
</body>
</html>
